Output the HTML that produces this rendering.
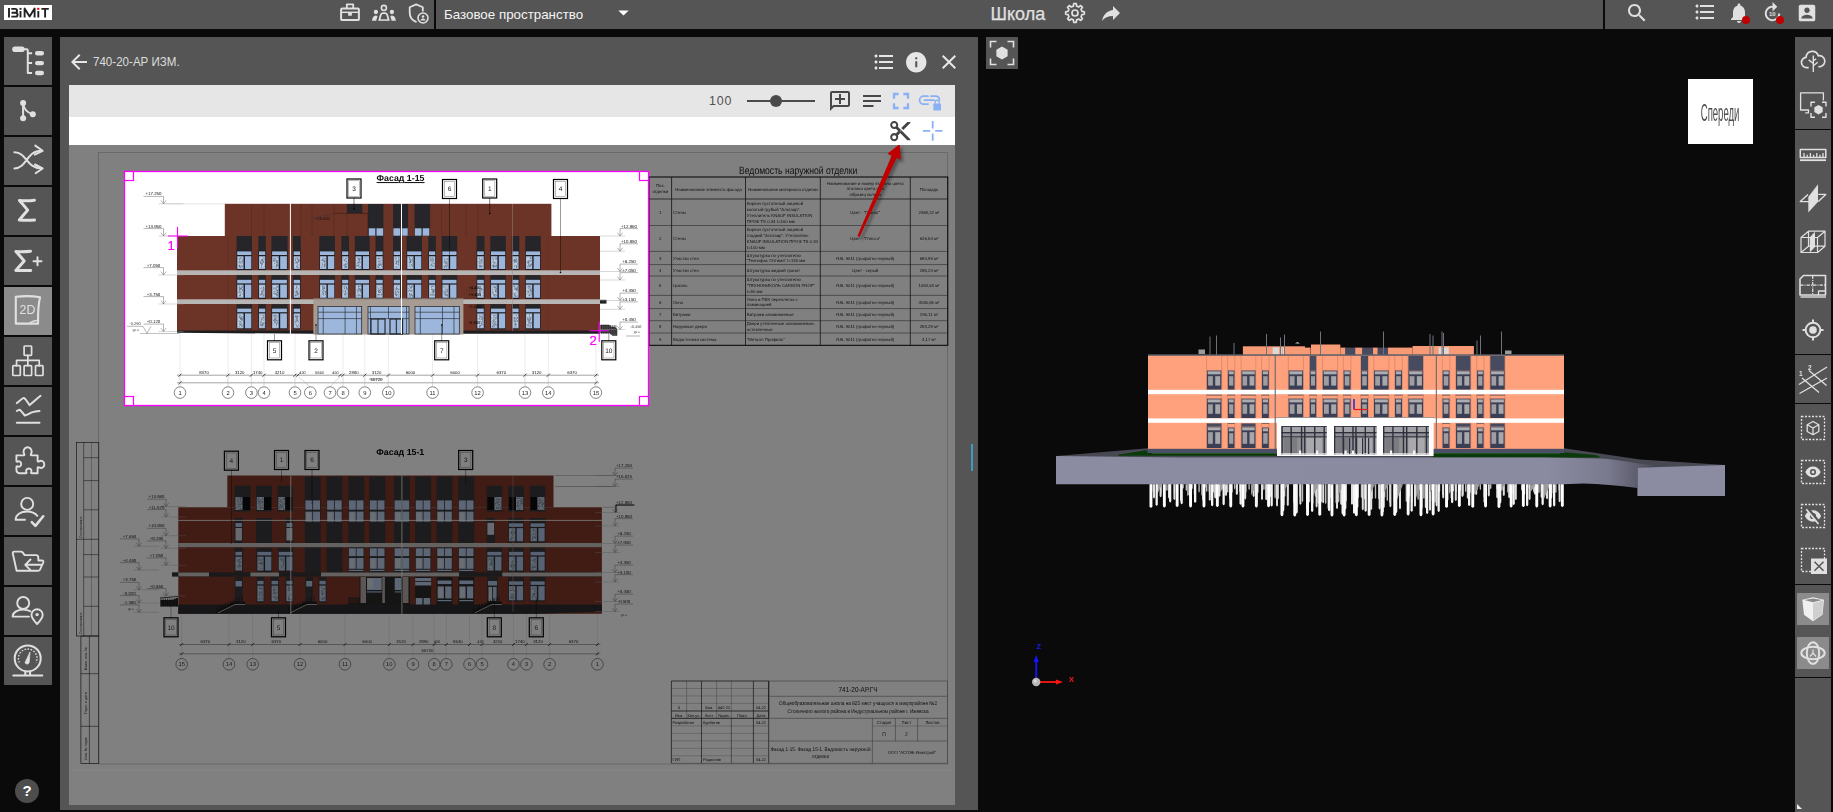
<!DOCTYPE html><html><head><meta charset="utf-8"><title>BIMIT</title><style>
*{box-sizing:border-box;margin:0;padding:0}
html,body{width:1833px;height:812px;overflow:hidden;background:#0a0a0a;font-family:"Liberation Sans",sans-serif;}
.abs{position:absolute}
#root{position:absolute;left:0;top:0;width:1833px;height:812px}
.gs{will-change:transform}
#top{position:absolute;left:0;top:0;width:1833px;height:29px;background:#555555}
.sep{position:absolute;top:0;width:2px;height:29px;background:#0a0a0a}
.lb{position:absolute;left:4px;width:48px;height:48px;background:#555555}
.lb.act{background:#8b8b8b}
.lb svg{position:absolute;left:0;top:0}
#p2d{position:absolute;left:60px;top:37px;width:918px;height:773px;background:#555555}
#inner{position:absolute;left:69px;top:85px;width:886px;height:720px;background:#808080;overflow:hidden}
#tb1{position:absolute;left:0;top:0;width:886px;height:32px;background:#e6e6e6}
#tb2{position:absolute;left:0;top:32px;width:886px;height:28px;background:#ffffff}
#rt{position:absolute;left:1795px;top:37px;width:36px;height:775px;background:#555555}
.rsep{position:absolute;left:0;width:36px;height:2px;background:#0a0a0a}
svg{display:block;overflow:visible}
</style></head><body><div id="root">
<div id="top">
<div class="abs" style="left:4px;top:5px;width:48px;height:15px;background:#fff"></div>
<svg class="abs" style="left:0px;top:0px" width="60" height="29" viewBox="0 0 60 29" ><g fill="none" stroke="#222" stroke-width="1.900" stroke-linejoin="round"><path d="M9 8V17.400"/><path d="M11.300 8.900h3.800c2.600 0 2.600 3.800 0 3.800h-3.600M11.500 12.700h3.900c2.900 0 2.900 3.900 0 3.900h-4.100"/><path d="M20.500 11V17.400M24.600 17.400V8.500l5 8 5-8v8.900M38.300 11V17.400M41.400 8.900h7.400M45.100 8.900v8.500"/></g><rect x="19.500" y="7.900" width="2" height="1.900" fill="#222"/><rect x="37.200" y="7.800" width="2.100" height="2.100" fill="#ff0000"/></svg>
<div class="sep" style="left:434px"></div><div class="sep" style="left:1603px"></div>
<svg class="abs" style="left:339px;top:2px" width="22" height="22" viewBox="0 0 22 22" ><g fill="none" stroke="#e0e0e0" stroke-width="2" stroke-linejoin="round"><rect x="2.100" y="6.500" width="17.800" height="11.600" rx="1.200"/><path d="M7.800 6.500V2.400h6.400v4.100" stroke-width="1.800"/><path d="M2 10.300h18" stroke-width="1.500"/></g><rect x="9.100" y="10.500" width="3.800" height="3.300" rx=".6" fill="#e0e0e0"/></svg>
<svg class="abs" style="left:371px;top:4px" width="26" height="18" viewBox="0 0 26 18" ><g fill="#e0e0e0"><circle cx="12.900" cy="3.900" r="2.500" fill="none" stroke="#e0e0e0" stroke-width="1.600"/><path d="M7.200 16.800l1.700-6c.5-1.700 1.500-2.600 3.200-2.600h1.800c1.700 0 2.700.9 3.200 2.600l1.700 6h-1.900l-1.500-5.500c-.3-1-.8-1.400-1.700-1.400h-1.400c-.9 0-1.400.4-1.700 1.400l-1.500 5.500z"/><circle cx="4.900" cy="8" r="2.150"/><circle cx="20.900" cy="8" r="2.150"/><path d="M1 16.800c.2-3.300 1.500-5.400 3.800-5.400 .7 0 1.300.2 1.700.5l-1.300 4.900z"/><path d="M24.800 16.800c-.2-3.300-1.500-5.400-3.800-5.400-.7 0-1.300.2-1.700.5l1.300 4.900z"/><path d="M8.500 15.300h8.800v1.500h-8.800z"/></g></svg>
<svg class="abs" style="left:408px;top:3px" width="23" height="22" viewBox="0 0 23 22" ><path d="M8.200 1.400L1.700 4.300v5.300c0 4.200 2.600 7.800 6.300 9.200" fill="none" stroke="#e0e0e0" stroke-width="1.800" stroke-linejoin="round" stroke-linecap="round"/><path d="M8.200 1.400l6.600 2.900v4.100" fill="none" stroke="#e0e0e0" stroke-width="1.800" stroke-linejoin="round"/><circle cx="15" cy="15" r="5" fill="none" stroke="#e0e0e0" stroke-width="1.600"/><circle cx="15" cy="13.500" r="1.300" fill="#e0e0e0"/><path d="M12.500 17.400c.3-1.300 1.200-1.900 2.500-1.900s2.200.6 2.500 1.900z" fill="#e0e0e0"/></svg>
<div class="abs" style="left:444px;top:0;height:29px;line-height:30.200px;font-size:13.350px;color:#f4f4f4;white-space:nowrap" id="tsp">Базовое пространство</div>
<svg class="abs" style="left:611.4px;top:-0.3px" width="25" height="25" viewBox="0 0 24 24" ><path d="M7 10l5 5 5-5z" fill="#fff"/></svg>
<div class="abs" style="left:990.500px;top:0;height:28.200px;line-height:28.200px;font-size:18px;color:#e0e0e0;-webkit-text-stroke:.25px #e0e0e0;white-space:nowrap" id="tsch">Школа</div>
<svg class="abs" style="left:1063px;top:1px" width="24" height="24" viewBox="0 0 24 24" ><path d="M10.34 5.10 L10.75 2.68 L13.25 2.68 L13.66 5.10 L15.71 5.95 L17.70 4.53 L19.47 6.30 L18.05 8.29 L18.90 10.34 L21.32 10.75 L21.32 13.25 L18.90 13.66 L18.05 15.71 L19.47 17.70 L17.70 19.47 L15.71 18.05 L13.66 18.90 L13.25 21.32 L10.75 21.32 L10.34 18.90 L8.29 18.05 L6.30 19.47 L4.53 17.70 L5.95 15.71 L5.10 13.66 L2.68 13.25 L2.68 10.75 L5.10 10.34 L5.95 8.29 L4.53 6.30 L6.30 4.53 L8.29 5.95Z" fill="none" stroke="#e0e0e0" stroke-width="1.7" stroke-linejoin="round"/><circle cx="12" cy="12" r="3" fill="none" stroke="#e0e0e0" stroke-width="1.7"/></svg>
<svg class="abs" style="left:1099px;top:1px" width="24" height="24" viewBox="0 0 24 24" ><path d="M10 9V5l-7 7 7 7v-4.1c5 0 8.5 1.6 11 5.1-1-5-4-10-11-11z" fill="#e0e0e0" transform="translate(24,0) scale(-1,1)"/></svg>
<svg class="abs" style="left:1625px;top:1px" width="24" height="24" viewBox="0 0 24 24" ><path d="M15.5 14h-.79l-.28-.27C15.41 12.59 16 11.11 16 9.5 16 5.91 13.09 3 9.5 3S3 5.91 3 9.5 5.91 16 9.5 16c1.61 0 3.09-.59 4.23-1.57l.27.28v.79l5 4.99L20.49 19l-4.99-5zm-6 0C7.01 14 5 11.99 5 9.5S7.01 5 9.5 5 14 7.01 14 9.5 11.99 14 9.5 14z" fill="#e0e0e0"/></svg>
<svg class="abs" style="left:1693px;top:0px" width="24" height="24" viewBox="0 0 24 24" ><path d="M4 10.5c-.83 0-1.5.67-1.5 1.5s.67 1.5 1.5 1.5 1.5-.67 1.5-1.5-.67-1.5-1.5-1.5zm0-6c-.83 0-1.5.67-1.5 1.5S3.17 7.5 4 7.5 5.5 6.83 5.5 6 4.83 4.5 4 4.5zm0 12c-.83 0-1.5.68-1.5 1.5s.68 1.5 1.5 1.5 1.5-.68 1.5-1.5-.67-1.5-1.5-1.5zM7 19h14v-2H7v2zm0-6h14v-2H7v2zm0-8v2h14V5H7z" fill="#e0e0e0"/></svg>
<svg class="abs" style="left:1727px;top:1px" width="24" height="24" viewBox="0 0 24 24" ><path d="M12 22c1.1 0 2-.9 2-2h-4c0 1.1.89 2 2 2zm6-6v-5c0-3.07-1.64-5.64-4.5-6.32V4c0-.83-.67-1.5-1.5-1.5s-1.5.67-1.5 1.5v.68C7.63 5.36 6 7.92 6 11v5l-2 2v1h16v-1l-2-2z" fill="#e0e0e0"/></svg>
<div class="abs" style="left:1742px;top:16px;width:8px;height:8px;border-radius:4px;background:#c00000"></div>
<svg class="abs" style="left:1761.2px;top:1.4px" width="23" height="23" viewBox="0 0 24 24" ><path d="M18 13c0 3.310-2.690 6-6 6s-6-2.690-6-6 2.690-6 6-6v4l5-5-5-5v4c-4.420 0-8 3.580-8 8 0 4.420 3.580 8 8 8s8-3.580 8-8h-2z" fill="#e0e0e0"/><text x="8.300" y="15.800" font-size="6.200" fill="#e0e0e0" font-family="Liberation Sans" font-weight="bold">10</text></svg>
<div class="abs" style="left:1776px;top:16px;width:8px;height:8px;border-radius:4px;background:#c00000"></div>
<svg class="abs" style="left:1796px;top:2px" width="22" height="22" viewBox="0 0 24 24" ><path d="M3 5v14c0 1.1.89 2 2 2h14c1.1 0 2-.9 2-2V5c0-1.1-.9-2-2-2H5c-1.11 0-2 .9-2 2zm12 4c0 1.66-1.34 3-3 3s-3-1.34-3-3 1.34-3 3-3 3 1.34 3 3zm-9 8c0-2 4-3.1 6-3.1s6 1.1 6 3.1v1H6v-1z" fill="#e0e0e0"/></svg>
</div>
<div class="lb" style="top:37px"><svg class="gs" width="48" height="48" viewBox="0 0 48 48"><g fill="none" stroke="#e0e0e0" stroke-width="2" stroke-linecap="round" stroke-linejoin="round"><rect x="8.2" y="9.400" width="12.5" height="5.600" rx="2.800" fill="#e0e0e0" stroke="none"/><path d="M20 12.2h2.600q1.200 0 1.200 1.200V36h4.300M23.800 16.300h4.300M23.800 26.100h4.300" stroke-linecap="butt"/><rect x="31" y="14.100" width="9" height="4.400" rx="2.200" fill="#e0e0e0" stroke="none"/><rect x="31" y="23.900" width="9" height="4.400" rx="2.200" fill="#e0e0e0" stroke="none"/><rect x="31" y="33.800" width="9" height="4.400" rx="2.200" fill="#e0e0e0" stroke="none"/></g></svg></div>
<div class="lb" style="top:87px"><svg class="gs" width="48" height="48" viewBox="0 0 48 48"><g fill="none" stroke="#e0e0e0" stroke-width="2" stroke-linecap="round" stroke-linejoin="round"><circle cx="19.100" cy="16" r="3" fill="#e0e0e0" stroke="none"/><circle cx="19.100" cy="31.200" r="3" fill="#e0e0e0" stroke="none"/><circle cx="28.800" cy="27.300" r="3" fill="#e0e0e0" stroke="none"/><path d="M19.100 16V31.200M19.100 16c.6 5.500 3.500 9.500 9.700 11.300"/></g></svg></div>
<div class="lb" style="top:137px"><svg class="gs" width="48" height="48" viewBox="0 0 48 48"><g fill="none" stroke="#e0e0e0" stroke-width="2" stroke-linecap="round" stroke-linejoin="round"><path d="M10.400 15.300c13 .3 11.500 16 27 16M10.400 31.400c13-.3 11.500-17.600 27-17.600"/><path d="M31.300 8.600l7.300 5.200-7.800 3.800M31 27.500l7.600 4-7 4.800"/></g></svg></div>
<div class="lb" style="top:187px"><svg class="gs" width="48" height="48" viewBox="0 0 48 48"><g fill="none" stroke="#e0e0e0" stroke-width="3" stroke-linecap="round" stroke-linejoin="round"><path d="M30.400 13.200c-5 .7-10 .7-15 .3 2.800 3 5.500 6.200 8.300 9.600-2.800 3.300-5.600 6.600-8.400 9.900 5 .3 10 .3 15.200 0"/></g></svg></div>
<div class="lb" style="top:237px"><svg class="gs" width="48" height="48" viewBox="0 0 48 48"><g fill="none" stroke="#e0e0e0" stroke-width="3" stroke-linecap="round" stroke-linejoin="round"><path d="M26.500 14.300c-5 .6-9.800.6-14.600.3 2.800 3 5.500 6 8.300 9.400-2.800 3.200-5.600 6.300-8.400 9.400 5 .3 9.800.3 14.900 0"/><path d="M29.500 24.200h8M33.500 20.200v8" stroke-width="2"/></g></svg></div>
<div class="lb act" style="top:287px"><svg class="gs" width="48" height="48" viewBox="0 0 48 48"><g fill="none" stroke="#e0e0e0" stroke-width="2.1" stroke-linecap="round" stroke-linejoin="round"><path d="M11.800 9.800c8-.9 16.500-.9 24.300.5-2 7.500-2.300 14.500-2 26.300H11.800z"/><path d="M33.800 33.400c-4 .2-6.500 1-8.300 3.200" stroke-width="1.500"/><text x="15.600" y="27.300" font-size="12.400" font-family="Liberation Sans" fill="#e0e0e0" stroke="none">2D</text></g></svg></div>
<div class="lb" style="top:337px"><svg class="gs" width="48" height="48" viewBox="0 0 48 48"><g fill="none" stroke="#e0e0e0" stroke-width="1.7" stroke-linecap="round" stroke-linejoin="round"><rect x="20.100" y="9" width="7.500" height="9.400" rx=".8"/><rect x="8.800" y="28.700" width="7.500" height="9.800" rx=".8"/><rect x="20.100" y="28.700" width="7.500" height="9.800" rx=".8"/><rect x="31.500" y="28.700" width="7.500" height="9.800" rx=".8"/><path d="M23.850 18.400v10.300M12.550 28.700v-5.300h22.700v5.300"/></g></svg></div>
<div class="lb" style="top:387px"><svg class="gs" width="48" height="48" viewBox="0 0 48 48"><g fill="none" stroke="#e0e0e0" stroke-width="2" stroke-linecap="round" stroke-linejoin="round"><path d="M12.800 16.100c3-2.500 5-4.600 7-5.200 1.800.8 3.800 4.600 5.800 7.200 4-3.300 7.200-6.300 10.900-9.300M12.800 24c1-.8 2-1.300 3-1.300 1.700 1.500 3.200 4 5 5.800 2.500-.8 4.500-2 7-3.100 2.500-.8 5-1.200 7.700-1.400M12.800 35.800h22.700"/></g></svg></div>
<div class="lb" style="top:437px"><svg class="gs" width="48" height="48" viewBox="0 0 48 48"><g fill="none" stroke="#e0e0e0" stroke-width="1.9" stroke-linecap="round" stroke-linejoin="round"><path d="M12.400 18.400h7.300c.8-.1 1-.6.5-1.400-1.800-3 .2-6.800 3.400-6.800s5.200 3.800 3.400 6.800c-.5.800-.3 1.300.5 1.400h6.100v5.500c.1.800.6 1 1.400.5 2.600-1.500 5.300.2 5.300 3s-2.700 4.500-5.300 3c-.8-.5-1.300-.3-1.400.5v5.400h-5.800c-.8-.1-1-.6-.6-1.300.9-1.700-.4-3.500-2.400-3.500s-3.300 1.800-2.400 3.500c.4.700.2 1.200-.6 1.300h-5.600c-2.300 0-3.800-1.500-3.800-3.800v-2.500c.1-.8.600-1 1.300-.6 1.700.9 3.500-.4 3.500-2.400s-1.800-3.300-3.500-2.400c-.7.400-1.200.2-1.300-.6z"/></g></svg></div>
<div class="lb" style="top:487px"><svg class="gs" width="48" height="48" viewBox="0 0 48 48"><g fill="none" stroke="#e0e0e0" stroke-width="1.9" stroke-linecap="round" stroke-linejoin="round"><circle cx="23.200" cy="16.900" r="6"/><path d="M21 32.800h-9.400c0-5 5-8.300 11.600-8.300 4.300 0 7.800 1.600 10.200 4.300"/><path d="M27.800 35.100l3.600 3.800 7.800-9.600" stroke-width="2.600"/></g></svg></div>
<div class="lb" style="top:537px"><svg class="gs" width="48" height="48" viewBox="0 0 48 48"><g fill="none" stroke="#e0e0e0" stroke-width="1.9" stroke-linecap="round" stroke-linejoin="round"><path d="M12.600 33.700L8.800 16.500c-.3-1.200.3-1.900 1.500-1.900h6.500c1 0 1.500.3 2 1l1.800 2.500h11.700c1.200 0 1.800.6 1.900 1.800l.2 3.600h3.500c1.300 0 1.800.9 1.300 2.100l-3.200 7c-.5.900-1 1.100-2 1.100z"/><path d="M37 27.800H21.500M26.500 22.500l-5.300 5.300 5.300 5.300"/></g></svg></div>
<div class="lb" style="top:587px"><svg class="gs" width="48" height="48" viewBox="0 0 48 48"><g fill="none" stroke="#e0e0e0" stroke-width="1.9" stroke-linecap="round" stroke-linejoin="round"><circle cx="19.200" cy="16" r="6"/><path d="M25 29.600H8.600c0-4 4.500-7 10.600-7 2.800 0 5.300.6 7.200 1.700"/><path d="M33.100 37c-3.600-3.600-5.600-6.400-5.600-9.200a5.600 5.600 0 0 1 11.200 0c0 2.800-2 5.600-5.600 9.200z"/><circle cx="33.100" cy="27.600" r="1.700" fill="#e0e0e0" stroke="none"/></g></svg></div>
<div class="lb" style="top:637px"><svg class="gs" width="48" height="48" viewBox="0 0 48 48"><g fill="none" stroke="#e0e0e0" stroke-width="2" stroke-linecap="round" stroke-linejoin="round"><circle cx="23.700" cy="21.400" r="13"/><path d="M15.400 25.500a9.300 9.300 0 1 1 16.600 0" stroke-width="1.300" stroke-dasharray="1.600 1.500" stroke-linecap="butt"/><path d="M25.800 15.400l-4.800 10.400c1 1.600 3.200 1.800 4 .2z" fill="#e0e0e0" stroke-width=".8"/><path d="M21.300 34.600v3.600M26.100 34.600v3.600M9.300 38.400h29" stroke-width="2"/></g></svg></div>
<div class="abs" style="left:15px;top:779px;width:24px;height:24px;border-radius:12px;background:#4d4d4d;color:#fff;font-weight:bold;font-size:15px;line-height:24px;text-align:center">?</div>
<div id="p2d"></div>
<svg class="abs" style="left:67px;top:50px" width="24" height="24" viewBox="0 0 24 24" ><path d="M20 11H7.83l5.59-5.59L12 4l-8 8 8 8 1.41-1.41L7.83 13H20v-2z" fill="#e6e6e6"/></svg>
<div class="abs" id="ttl" style="left:93px;top:52px;height:20px;line-height:20px;font-size:12.600px;color:#dddddd;white-space:nowrap;transform:scaleX(.919);transform-origin:0 0">740-20-АР ИЗМ.</div>
<svg class="abs" style="left:872px;top:50px" width="24" height="24" viewBox="0 0 24 24" ><path d="M4 10.5c-.83 0-1.5.67-1.5 1.5s.67 1.5 1.5 1.5 1.5-.67 1.5-1.5-.67-1.5-1.5-1.5zm0-6c-.83 0-1.5.67-1.5 1.5S3.17 7.5 4 7.5 5.5 6.83 5.5 6 4.83 4.5 4 4.5zm0 12c-.83 0-1.5.68-1.5 1.5s.68 1.5 1.5 1.5 1.5-.68 1.5-1.5-.67-1.5-1.5-1.5zM7 19h14v-2H7v2zm0-6h14v-2H7v2zm0-8v2h14V5H7z" fill="#e6e6e6"/></svg>
<svg class="abs" style="left:904px;top:50px" width="24.5" height="24.5" viewBox="0 0 24 24" ><path d="M12 2C6.48 2 2 6.48 2 12s4.48 10 10 10 10-4.48 10-10S17.52 2 12 2zm1 15h-2v-6h2v6zm0-8h-2V7h2v2z" fill="#e6e6e6"/></svg>
<svg class="abs" style="left:937px;top:50px" width="24" height="24" viewBox="0 0 24 24" ><path d="M19 6.41L17.59 5 12 10.59 6.41 5 5 6.41 10.59 12 5 17.59 6.41 19 12 13.41 17.59 19 19 17.59 13.41 12z" fill="#e6e6e6"/></svg>
<div id="inner"><svg class="abs gs" style="left:-69px;top:-85px" width="1024" height="812" viewBox="0 0 1024 812" text-rendering="geometricPrecision"><defs><clipPath id="selclip"><rect x="124.500" y="171.500" width="524" height="234"/></clipPath><filter id="blur" x="-20%" y="-20%" width="140%" height="140%"><feGaussianBlur stdDeviation="1.500"/></filter></defs><rect x="98.500" y="152.500" width="849" height="611.500" fill="none" stroke="#696969" stroke-width="1"/><rect x="69" y="769.700" width="886" height="1" fill="#878787"/><rect x="76.600" y="442.600" width="22.200" height="193.400" fill="none" stroke="#0f0f0f" stroke-width=".65"/><path d="M83.70 442.60L83.70 636.00" stroke="#0f0f0f" stroke-width="0.5" fill="none" /><path d="M91.50 442.60L91.50 636.00" stroke="#2c2c2c" stroke-width="0.35" fill="none" /><path d="M83.70 457.70L98.80 457.70" stroke="#1a1a1a" stroke-width="0.55" fill="none" /><path d="M83.70 480.60L98.80 480.60" stroke="#1a1a1a" stroke-width="0.55" fill="none" /><path d="M83.70 509.80L98.80 509.80" stroke="#1a1a1a" stroke-width="0.55" fill="none" /><path d="M83.70 554.60L98.80 554.60" stroke="#1a1a1a" stroke-width="0.55" fill="none" /><path d="M83.70 577.00L98.80 577.00" stroke="#1a1a1a" stroke-width="0.55" fill="none" /><path d="M83.70 606.30L98.80 606.30" stroke="#1a1a1a" stroke-width="0.55" fill="none" /><path d="M76.60 539.30L98.80 539.30" stroke="#0f0f0f" stroke-width="0.55" fill="none" /><text transform="translate(81.800,538) rotate(-90)" font-size="3.600" fill="#0f0f0f" font-family="Liberation Sans">Согласовано</text><text transform="translate(81.800,634) rotate(-90)" font-size="3.600" fill="#0f0f0f" font-family="Liberation Sans">Согласовано</text><rect x="80.900" y="636" width="17.900" height="127.500" fill="none" stroke="#0f0f0f" stroke-width=".65"/><path d="M89.40 636.00L89.40 763.50" stroke="#0f0f0f" stroke-width="0.55" fill="none" /><path d="M80.90 673.70L98.80 673.70" stroke="#0f0f0f" stroke-width="0.55" fill="none" /><path d="M80.90 726.30L98.80 726.30" stroke="#0f0f0f" stroke-width="0.55" fill="none" /><text transform="translate(86.800,670) rotate(-90)" font-size="3.700" fill="#0f0f0f" font-family="Liberation Sans">Взам. инв. №</text><text transform="translate(86.800,714) rotate(-90)" font-size="3.700" fill="#0f0f0f" font-family="Liberation Sans">Подп. и дата</text><text transform="translate(86.800,760) rotate(-90)" font-size="3.700" fill="#0f0f0f" font-family="Liberation Sans">Инв. № подл.</text><path d="M181.70 614.00L181.70 658.50" stroke="#5f5f5f" stroke-width="0.3" fill="none" /><path d="M229.00 614.00L229.00 658.50" stroke="#5f5f5f" stroke-width="0.3" fill="none" /><path d="M252.70 614.00L252.70 658.50" stroke="#5f5f5f" stroke-width="0.3" fill="none" /><path d="M300.00 614.00L300.00 658.50" stroke="#5f5f5f" stroke-width="0.3" fill="none" /><path d="M345.00 614.00L345.00 658.50" stroke="#5f5f5f" stroke-width="0.3" fill="none" /><path d="M389.30 614.00L389.30 658.50" stroke="#5f5f5f" stroke-width="0.3" fill="none" /><path d="M413.00 614.00L413.00 658.50" stroke="#5f5f5f" stroke-width="0.3" fill="none" /><path d="M434.20 614.00L434.20 658.50" stroke="#5f5f5f" stroke-width="0.3" fill="none" /><path d="M446.30 614.00L446.30 658.50" stroke="#5f5f5f" stroke-width="0.3" fill="none" /><path d="M469.50 614.00L469.50 658.50" stroke="#5f5f5f" stroke-width="0.3" fill="none" /><path d="M482.00 614.00L482.00 658.50" stroke="#5f5f5f" stroke-width="0.3" fill="none" /><path d="M513.40 614.00L513.40 658.50" stroke="#5f5f5f" stroke-width="0.3" fill="none" /><path d="M526.40 614.00L526.40 658.50" stroke="#5f5f5f" stroke-width="0.3" fill="none" /><path d="M549.60 614.00L549.60 658.50" stroke="#5f5f5f" stroke-width="0.3" fill="none" /><path d="M597.40 614.00L597.40 658.50" stroke="#5f5f5f" stroke-width="0.3" fill="none" /><rect x="227.30" y="475.50" width="326.20" height="32.00" fill="#401c14" /><rect x="178.30" y="507.30" width="423.60" height="106.50" fill="#401c14" /><rect x="304.80" y="476.50" width="15.90" height="96.00" fill="#1c1c1e" /><rect x="326.50" y="476.50" width="15.90" height="96.00" fill="#1c1c1e" /><rect x="348.30" y="476.50" width="15.90" height="96.00" fill="#1c1c1e" /><rect x="369.30" y="476.50" width="15.90" height="96.00" fill="#1c1c1e" /><rect x="394.00" y="476.50" width="15.90" height="96.00" fill="#1c1c1e" /><rect x="415.20" y="476.50" width="15.90" height="96.00" fill="#1c1c1e" /><rect x="436.60" y="476.50" width="15.90" height="96.00" fill="#1c1c1e" /><rect x="458.30" y="476.50" width="15.90" height="96.00" fill="#1c1c1e" /><rect x="347.70" y="577.00" width="127.00" height="28.00" fill="#151516" /><rect x="305.40" y="500.40" width="6.90" height="9.30" fill="#5c6675" /><rect x="305.40" y="511.60" width="6.90" height="10.10" fill="#5c6675" /><rect x="313.10" y="500.40" width="6.90" height="9.30" fill="#5c6675" /><rect x="313.10" y="511.60" width="6.90" height="10.10" fill="#5c6675" /><rect x="306.20" y="512.60" width="4.60" height="8.00" fill="#6a6e73" /><rect x="327.10" y="500.40" width="6.90" height="9.30" fill="#5c6675" /><rect x="327.10" y="511.60" width="6.90" height="10.10" fill="#5c6675" /><rect x="334.80" y="500.40" width="6.90" height="9.30" fill="#5c6675" /><rect x="334.80" y="511.60" width="6.90" height="10.10" fill="#5c6675" /><rect x="327.90" y="512.60" width="4.60" height="8.00" fill="#6a6e73" /><rect x="348.90" y="500.40" width="6.90" height="9.30" fill="#5c6675" /><rect x="348.90" y="511.60" width="6.90" height="10.10" fill="#5c6675" /><rect x="356.60" y="500.40" width="6.90" height="9.30" fill="#5c6675" /><rect x="356.60" y="511.60" width="6.90" height="10.10" fill="#5c6675" /><rect x="349.70" y="512.60" width="4.60" height="8.00" fill="#6a6e73" /><rect x="369.90" y="500.40" width="6.90" height="9.30" fill="#5c6675" /><rect x="369.90" y="511.60" width="6.90" height="10.10" fill="#5c6675" /><rect x="377.60" y="500.40" width="6.90" height="9.30" fill="#5c6675" /><rect x="377.60" y="511.60" width="6.90" height="10.10" fill="#5c6675" /><rect x="370.70" y="512.60" width="4.60" height="8.00" fill="#6a6e73" /><rect x="394.60" y="500.40" width="6.90" height="9.30" fill="#5c6675" /><rect x="394.60" y="511.60" width="6.90" height="10.10" fill="#5c6675" /><rect x="402.30" y="500.40" width="6.90" height="9.30" fill="#5c6675" /><rect x="402.30" y="511.60" width="6.90" height="10.10" fill="#5c6675" /><rect x="395.40" y="512.60" width="4.60" height="8.00" fill="#6a6e73" /><rect x="415.80" y="500.40" width="6.90" height="9.30" fill="#5c6675" /><rect x="415.80" y="511.60" width="6.90" height="10.10" fill="#5c6675" /><rect x="423.50" y="500.40" width="6.90" height="9.30" fill="#5c6675" /><rect x="423.50" y="511.60" width="6.90" height="10.10" fill="#5c6675" /><rect x="416.60" y="512.60" width="4.60" height="8.00" fill="#6a6e73" /><rect x="437.20" y="500.40" width="6.90" height="9.30" fill="#5c6675" /><rect x="437.20" y="511.60" width="6.90" height="10.10" fill="#5c6675" /><rect x="444.90" y="500.40" width="6.90" height="9.30" fill="#5c6675" /><rect x="444.90" y="511.60" width="6.90" height="10.10" fill="#5c6675" /><rect x="438.00" y="512.60" width="4.60" height="8.00" fill="#6a6e73" /><rect x="458.90" y="500.40" width="6.90" height="9.30" fill="#5c6675" /><rect x="458.90" y="511.60" width="6.90" height="10.10" fill="#5c6675" /><rect x="466.60" y="500.40" width="6.90" height="9.30" fill="#5c6675" /><rect x="466.60" y="511.60" width="6.90" height="10.10" fill="#5c6675" /><rect x="459.70" y="512.60" width="4.60" height="8.00" fill="#6a6e73" /><rect x="348.90" y="548.30" width="6.90" height="7.80" fill="#5c6675" /><rect x="348.90" y="558.00" width="6.90" height="10.80" fill="#5c6675" /><rect x="356.60" y="548.30" width="6.90" height="7.80" fill="#5c6675" /><rect x="356.60" y="558.00" width="6.90" height="10.80" fill="#5c6675" /><rect x="349.70" y="559.00" width="4.60" height="8.80" fill="#6a6e73" /><rect x="348.90" y="569.80" width="14.60" height="1.20" fill="#5c6675" /><rect x="369.90" y="548.30" width="6.90" height="7.80" fill="#5c6675" /><rect x="369.90" y="558.00" width="6.90" height="10.80" fill="#5c6675" /><rect x="377.60" y="548.30" width="6.90" height="7.80" fill="#5c6675" /><rect x="377.60" y="558.00" width="6.90" height="10.80" fill="#5c6675" /><rect x="370.70" y="559.00" width="4.60" height="8.80" fill="#6a6e73" /><rect x="369.90" y="569.80" width="14.60" height="1.20" fill="#5c6675" /><rect x="394.60" y="548.30" width="6.90" height="7.80" fill="#5c6675" /><rect x="394.60" y="558.00" width="6.90" height="10.80" fill="#5c6675" /><rect x="402.30" y="548.30" width="6.90" height="7.80" fill="#5c6675" /><rect x="402.30" y="558.00" width="6.90" height="10.80" fill="#5c6675" /><rect x="395.40" y="559.00" width="4.60" height="8.80" fill="#6a6e73" /><rect x="394.60" y="569.80" width="14.60" height="1.20" fill="#5c6675" /><rect x="415.80" y="548.30" width="6.90" height="7.80" fill="#5c6675" /><rect x="415.80" y="558.00" width="6.90" height="10.80" fill="#5c6675" /><rect x="423.50" y="548.30" width="6.90" height="7.80" fill="#5c6675" /><rect x="423.50" y="558.00" width="6.90" height="10.80" fill="#5c6675" /><rect x="416.60" y="559.00" width="4.60" height="8.80" fill="#6a6e73" /><rect x="415.80" y="569.80" width="14.60" height="1.20" fill="#5c6675" /><rect x="437.20" y="548.30" width="6.90" height="7.80" fill="#5c6675" /><rect x="437.20" y="558.00" width="6.90" height="10.80" fill="#5c6675" /><rect x="444.90" y="548.30" width="6.90" height="7.80" fill="#5c6675" /><rect x="444.90" y="558.00" width="6.90" height="10.80" fill="#5c6675" /><rect x="438.00" y="559.00" width="4.60" height="8.80" fill="#6a6e73" /><rect x="437.20" y="569.80" width="14.60" height="1.20" fill="#5c6675" /><rect x="458.90" y="548.30" width="6.90" height="7.80" fill="#5c6675" /><rect x="458.90" y="558.00" width="6.90" height="10.80" fill="#5c6675" /><rect x="466.60" y="548.30" width="6.90" height="7.80" fill="#5c6675" /><rect x="466.60" y="558.00" width="6.90" height="10.80" fill="#5c6675" /><rect x="459.70" y="559.00" width="4.60" height="8.80" fill="#6a6e73" /><rect x="458.90" y="569.80" width="14.60" height="1.20" fill="#5c6675" /><rect x="342.40" y="577.00" width="5.90" height="28.00" fill="#401c14" /><rect x="409.90" y="577.00" width="5.30" height="28.00" fill="#401c14" /><rect x="431.10" y="577.00" width="5.50" height="28.00" fill="#401c14" /><rect x="452.50" y="577.00" width="5.80" height="28.00" fill="#401c14" /><rect x="474.20" y="577.00" width="5.50" height="28.00" fill="#401c14" /><rect x="347.70" y="577.00" width="11.90" height="20.50" fill="#401c14" /><rect x="348.50" y="598.50" width="10.50" height="4.50" fill="#271612" /><rect x="360.50" y="577.00" width="5.50" height="26.00" fill="#5b5653" /><rect x="382.30" y="577.00" width="2.60" height="26.00" fill="#5b5653" /><rect x="403.00" y="577.00" width="5.50" height="26.00" fill="#5b5653" /><rect x="367.00" y="578.00" width="14.70" height="12.00" fill="#5c6675" /><rect x="367.50" y="578.50" width="5.50" height="10.00" fill="#6a6e73" /><rect x="367.00" y="590.60" width="14.70" height="2.60" fill="#1e1e21" /><rect x="367.00" y="591.40" width="14.70" height="1.00" fill="#5c6675" /><rect x="394.70" y="578.00" width="6.30" height="12.00" fill="#5c6675" /><rect x="394.70" y="591.40" width="6.30" height="1.00" fill="#5c6675" /><rect x="415.20" y="578.00" width="15.90" height="7.50" fill="#5c6675" /><rect x="415.20" y="581.20" width="15.90" height="0.80" fill="#151516" /><rect x="415.80" y="598.00" width="6.60" height="14.00" fill="#5c6675" /><rect x="423.60" y="598.00" width="6.60" height="14.00" fill="#5c6675" /><rect x="437.60" y="580.50" width="13.90" height="3.60" fill="#5c6675" /><rect x="437.60" y="586.40" width="6.30" height="12.00" fill="#5c6675" /><rect x="445.20" y="586.40" width="6.30" height="12.00" fill="#5c6675" /><rect x="438.40" y="587.40" width="4.70" height="10.00" fill="#6a6e73" /><rect x="437.60" y="600.00" width="13.90" height="1.20" fill="#5c6675" /><rect x="459.30" y="580.50" width="13.90" height="3.60" fill="#5c6675" /><rect x="459.30" y="586.40" width="6.30" height="12.00" fill="#5c6675" /><rect x="466.90" y="586.40" width="6.30" height="12.00" fill="#5c6675" /><rect x="460.10" y="587.40" width="4.70" height="10.00" fill="#6a6e73" /><rect x="459.30" y="600.00" width="13.90" height="1.20" fill="#5c6675" /><rect x="234.70" y="485.80" width="16.00" height="25.70" fill="#1c1c1e" /><rect x="235.50" y="497.00" width="7.20" height="13.00" fill="#676c72" /><path d="M237.4 504.0h.7M238.2 504.8h.7M239.9 498.1h.7M235.9 507.7h.7M237.5 500.2h.7M242.4 503.1h.7M241.3 503.2h.7M240.0 499.2h.7M240.0 508.1h.7M239.3 506.5h.7M240.2 498.1h.7M240.8 504.6h.7M237.8 497.7h.7M241.5 503.2h.7M240.5 508.2h.7M240.5 508.7h.7M238.4 507.2h.7M238.7 508.9h.7M241.6 498.5h.7M236.7 500.0h.7M242.2 502.7h.7M239.9 501.0h.7M239.1 502.1h.7M238.1 504.6h.7M239.7 508.5h.7M240.3 508.8h.7M241.5 509.6h.7M240.2 499.3h.7M241.5 509.3h.7M241.8 504.4h.7M240.5 499.9h.7M241.3 504.4h.7M237.7 498.1h.7M241.4 509.6h.7M236.4 507.2h.7M238.5 499.2h.7M237.7 506.8h.7M241.6 497.8h.7M239.9 497.9h.7M240.5 501.4h.7M241.6 509.5h.7M239.1 509.7h.7M237.8 498.3h.7M239.8 497.7h.7M237.1 502.4h.7M239.8 499.2h.7M236.1 508.1h.7M237.9 509.2h.7M241.7 502.0h.7M238.8 503.7h.7M240.0 504.7h.7M239.5 505.0h.7M242.0 503.6h.7M238.6 506.2h.7M237.4 501.0h.7M242.3 503.8h.7M239.4 497.4h.7M238.5 504.5h.7M235.9 504.9h.7M240.0 498.0h.7M239.9 503.1h.7M240.3 501.7h.7M240.5 506.5h.7M235.9 498.1h.7M240.3 509.2h.7M237.5 503.0h.7M239.7 501.3h.7M238.2 501.2h.7M238.2 504.7h.7M237.8 502.0h.7M240.9 497.6h.7M239.6 506.4h.7M237.8 500.1h.7M241.1 500.3h.7" stroke="#323d4a" stroke-width=".7" fill="none"/><rect x="242.70" y="497.00" width="7.20" height="13.00" fill="#060606" /><rect x="256.00" y="485.80" width="16.00" height="25.70" fill="#1c1c1e" /><rect x="256.80" y="497.00" width="7.20" height="13.00" fill="#676c72" /><path d="M258.3 502.7h.7M261.7 498.6h.7M259.2 501.4h.7M262.6 502.7h.7M262.7 499.4h.7M259.3 505.4h.7M262.9 502.9h.7M258.6 498.8h.7M260.6 499.7h.7M262.4 507.7h.7M258.3 500.8h.7M262.4 505.3h.7M262.4 501.6h.7M258.0 500.9h.7M262.3 500.7h.7M259.4 502.5h.7M259.9 502.4h.7M263.2 499.2h.7M257.1 509.0h.7M262.9 509.5h.7M260.0 509.1h.7M263.2 500.1h.7M262.0 507.7h.7M261.5 503.7h.7M259.0 501.5h.7M258.6 498.1h.7M261.0 500.9h.7M262.4 497.9h.7M263.1 505.9h.7M263.2 508.4h.7M263.0 504.5h.7M257.2 506.5h.7M258.2 501.0h.7M261.5 503.8h.7M259.8 508.9h.7M261.1 501.5h.7M258.8 508.0h.7M260.2 507.0h.7M259.4 499.7h.7M260.6 507.4h.7M258.2 507.1h.7M263.2 507.3h.7M262.5 497.4h.7M261.2 508.0h.7M257.4 500.7h.7M258.9 503.8h.7M259.9 503.2h.7M262.2 497.3h.7M257.5 498.9h.7M257.9 498.1h.7M263.5 507.9h.7M257.7 503.5h.7M259.2 501.2h.7M259.4 505.3h.7M261.0 501.8h.7M258.4 501.4h.7M257.9 504.2h.7M261.8 502.0h.7M257.6 499.5h.7M259.6 504.8h.7M262.3 502.0h.7M262.4 505.0h.7M259.9 501.9h.7M260.4 506.0h.7M259.9 505.9h.7M260.1 500.3h.7M260.6 505.9h.7M257.6 502.6h.7M259.9 508.2h.7M263.3 501.9h.7M263.0 507.1h.7M258.8 503.1h.7M257.9 507.4h.7M261.5 508.3h.7" stroke="#323d4a" stroke-width=".7" fill="none"/><rect x="264.00" y="497.00" width="7.20" height="13.00" fill="#060606" /><rect x="277.60" y="485.80" width="15.40" height="25.70" fill="#1c1c1e" /><rect x="278.40" y="497.00" width="6.90" height="13.00" fill="#676c72" /><path d="M283.7 505.6h.7M283.3 504.3h.7M279.3 504.6h.7M278.7 499.1h.7M283.6 497.8h.7M279.3 498.5h.7M284.2 499.5h.7M278.8 507.7h.7M279.5 507.8h.7M282.9 507.7h.7M284.7 504.5h.7M283.7 497.7h.7M283.5 503.6h.7M283.2 498.6h.7M283.4 508.9h.7M279.1 501.3h.7M282.3 507.6h.7M280.2 499.5h.7M280.3 504.9h.7M283.4 502.2h.7M281.0 502.2h.7M280.9 502.5h.7M279.2 503.5h.7M284.8 502.4h.7M283.4 499.3h.7M283.1 506.7h.7M282.9 503.7h.7M281.7 505.3h.7M284.4 499.2h.7M279.3 506.6h.7M284.5 503.7h.7M281.5 506.2h.7M279.9 500.6h.7M280.0 504.6h.7M280.7 500.2h.7M283.1 509.1h.7M280.6 506.0h.7M281.3 507.9h.7M282.4 500.6h.7M280.1 497.6h.7M281.7 502.0h.7M279.8 501.8h.7M280.7 506.9h.7M279.6 509.6h.7M281.7 504.7h.7M281.6 507.6h.7M283.9 504.2h.7M281.7 506.2h.7M284.1 502.3h.7M283.3 509.2h.7M281.6 500.1h.7M280.2 506.2h.7M283.0 509.2h.7M284.1 500.3h.7M279.9 500.5h.7M279.9 506.0h.7M284.1 508.5h.7M280.3 508.0h.7M280.7 502.5h.7M283.3 498.4h.7M279.3 507.6h.7M280.5 501.7h.7M282.4 505.7h.7M278.7 501.5h.7M281.4 503.3h.7M280.0 504.6h.7M284.7 502.1h.7M282.1 498.8h.7M280.4 505.6h.7M279.4 508.3h.7M284.4 498.5h.7" stroke="#323d4a" stroke-width=".7" fill="none"/><rect x="285.30" y="497.00" width="6.90" height="13.00" fill="#060606" /><rect x="234.70" y="518.00" width="8.00" height="25.00" fill="#1c1c1e" /><rect x="235.50" y="523.00" width="6.40" height="4.00" fill="#576272" /><rect x="235.50" y="528.00" width="6.40" height="12.50" fill="#676b70" /><rect x="256.00" y="518.00" width="16.00" height="25.00" fill="#1c1c1e" /><rect x="285.60" y="518.00" width="7.60" height="25.00" fill="#1c1c1e" /><rect x="286.40" y="523.00" width="6.00" height="4.00" fill="#576272" /><rect x="286.40" y="528.00" width="6.00" height="12.50" fill="#676b70" /><rect x="234.70" y="547.50" width="8.00" height="4.00" fill="#1c1c1e" /><rect x="234.70" y="551.00" width="8.00" height="20.80" fill="#17171a" /><rect x="235.40" y="551.80" width="6.60" height="3.60" fill="#576272" /><rect x="235.40" y="556.60" width="6.60" height="14.00" fill="#576272" /><rect x="236.30" y="557.80" width="4.80" height="11.60" fill="#676c72" /><path d="M240.6 562.2h.7M239.8 566.4h.7M237.8 565.5h.7M239.3 567.0h.7M237.7 566.4h.7M240.6 565.5h.7M238.9 559.3h.7M238.7 562.0h.7M239.6 565.6h.7M239.0 560.1h.7M239.3 565.0h.7M237.4 567.9h.7M239.4 559.5h.7M240.5 559.7h.7M238.0 566.0h.7M239.1 564.2h.7M239.3 563.1h.7M237.9 560.0h.7M236.9 566.0h.7M239.8 564.1h.7M239.7 562.1h.7M237.7 562.3h.7M240.3 558.6h.7M238.7 560.8h.7M239.8 562.0h.7M238.0 562.5h.7M238.9 566.6h.7M238.1 567.4h.7M237.1 561.1h.7M237.0 559.3h.7M239.9 566.1h.7M237.4 560.2h.7M238.3 566.3h.7M240.0 566.3h.7M239.1 559.7h.7M238.3 560.2h.7M238.8 564.4h.7M237.4 560.9h.7M239.9 558.4h.7M240.0 567.9h.7M240.6 562.3h.7M238.9 564.5h.7M239.3 568.8h.7M239.5 561.4h.7" stroke="#323d4a" stroke-width=".7" fill="none"/><rect x="256.60" y="547.50" width="15.50" height="4.00" fill="#1c1c1e" /><rect x="256.60" y="551.00" width="15.50" height="20.80" fill="#17171a" /><rect x="257.30" y="551.80" width="14.10" height="3.60" fill="#576272" /><rect x="257.30" y="556.60" width="6.35" height="14.00" fill="#576272" /><rect x="265.05" y="556.60" width="6.35" height="14.00" fill="#576272" /><rect x="258.10" y="557.80" width="4.75" height="11.60" fill="#676c72" /><path d="M262.0 563.4h.7M260.9 566.1h.7M258.4 566.6h.7M261.1 563.5h.7M260.6 563.2h.7M259.2 563.9h.7M258.6 563.6h.7M261.1 563.0h.7M260.7 568.6h.7M262.1 559.6h.7M261.7 565.0h.7M258.6 562.1h.7M259.4 559.0h.7M260.6 568.3h.7M259.7 567.7h.7M261.3 559.6h.7M262.0 564.7h.7M262.2 566.0h.7M261.5 561.9h.7M261.7 568.3h.7M262.0 562.9h.7M261.5 563.4h.7M258.9 558.6h.7M258.7 560.3h.7M259.1 563.6h.7M261.3 564.0h.7M260.2 565.2h.7M259.7 563.2h.7M261.5 562.5h.7M259.1 568.0h.7M261.4 562.1h.7M259.9 563.9h.7M260.9 560.6h.7M258.4 560.4h.7M261.7 559.7h.7M260.3 560.2h.7M259.3 560.0h.7M260.1 560.0h.7M258.5 559.3h.7M259.1 563.5h.7M258.6 558.3h.7M260.3 562.6h.7M261.3 558.7h.7M260.1 562.5h.7" stroke="#323d4a" stroke-width=".7" fill="none"/><rect x="278.00" y="547.50" width="15.20" height="4.00" fill="#1c1c1e" /><rect x="278.00" y="551.00" width="15.20" height="20.80" fill="#17171a" /><rect x="278.70" y="551.80" width="13.80" height="3.60" fill="#576272" /><rect x="278.70" y="556.60" width="6.20" height="14.00" fill="#576272" /><rect x="286.30" y="556.60" width="6.20" height="14.00" fill="#576272" /><rect x="279.50" y="557.80" width="4.60" height="11.60" fill="#676c72" /><path d="M279.9 568.7h.7M280.7 559.1h.7M281.7 559.9h.7M282.3 561.9h.7M280.3 558.7h.7M282.7 561.1h.7M283.0 563.2h.7M283.5 561.4h.7M280.8 561.0h.7M283.1 565.0h.7M281.2 559.1h.7M282.5 568.8h.7M282.2 558.1h.7M279.9 559.1h.7M280.5 558.5h.7M280.0 565.3h.7M283.4 560.3h.7M283.7 563.3h.7M283.0 568.2h.7M283.6 558.5h.7M281.0 564.8h.7M283.6 559.1h.7M281.0 567.4h.7M280.3 562.4h.7M281.1 565.6h.7M283.5 560.0h.7M282.8 566.2h.7M283.1 564.2h.7M283.5 562.1h.7M281.5 560.6h.7M282.9 563.4h.7M280.9 560.0h.7M282.7 564.8h.7M282.6 562.4h.7M281.7 559.8h.7M282.6 558.4h.7M281.7 566.4h.7M282.5 559.2h.7M280.7 567.4h.7M282.4 567.8h.7M283.3 563.0h.7M283.4 566.2h.7" stroke="#323d4a" stroke-width=".7" fill="none"/><rect x="234.70" y="577.00" width="8.00" height="28.00" fill="#1c1c1e" /><rect x="235.50" y="581.00" width="6.40" height="5.50" fill="#576272" /><rect x="256.60" y="577.00" width="7.70" height="3.50" fill="#1c1c1e" /><rect x="256.60" y="580.00" width="7.70" height="22.50" fill="#17171a" /><rect x="257.30" y="580.80" width="6.30" height="3.60" fill="#576272" /><rect x="257.30" y="585.60" width="6.30" height="15.70" fill="#576272" /><rect x="258.20" y="586.80" width="4.50" height="13.30" fill="#676c72" /><path d="M259.8 591.8h.7M258.8 592.2h.7M262.2 588.4h.7M260.7 588.5h.7M258.8 595.3h.7M259.4 587.7h.7M259.1 595.3h.7M260.8 587.2h.7M259.4 599.4h.7M259.4 594.2h.7M260.1 597.0h.7M260.9 597.1h.7M260.6 589.5h.7M259.2 588.1h.7M261.7 588.5h.7M258.6 599.4h.7M259.3 598.4h.7M258.8 593.0h.7M259.4 597.6h.7M260.9 595.3h.7M261.5 598.2h.7M259.8 594.8h.7M260.2 588.5h.7M261.8 594.6h.7M261.7 589.7h.7M260.6 593.0h.7M261.3 588.1h.7M259.8 593.3h.7M258.8 594.1h.7M261.4 592.5h.7M261.0 594.8h.7M259.3 591.6h.7M262.4 591.4h.7M260.2 588.2h.7M259.3 589.2h.7M262.1 596.3h.7M261.9 599.6h.7M260.9 598.9h.7M260.6 592.4h.7M262.2 598.6h.7M262.2 593.2h.7M261.5 592.3h.7M262.4 598.8h.7M259.6 599.0h.7M259.2 588.3h.7M261.3 590.8h.7M260.5 595.2h.7" stroke="#323d4a" stroke-width=".7" fill="none"/><rect x="270.80" y="577.00" width="8.00" height="3.50" fill="#1c1c1e" /><rect x="270.80" y="580.00" width="8.00" height="22.50" fill="#17171a" /><rect x="271.50" y="580.80" width="6.60" height="3.60" fill="#576272" /><rect x="271.50" y="585.60" width="6.60" height="15.70" fill="#576272" /><rect x="272.40" y="586.80" width="4.80" height="13.30" fill="#676c72" /><path d="M272.9 596.6h.7M273.9 592.6h.7M274.1 596.5h.7M275.8 590.7h.7M273.1 590.9h.7M274.4 588.1h.7M273.3 596.8h.7M275.6 599.5h.7M276.8 598.2h.7M274.3 589.1h.7M274.0 593.0h.7M274.9 594.0h.7M274.2 597.9h.7M273.9 593.0h.7M276.4 597.4h.7M273.9 590.2h.7M276.1 587.2h.7M273.3 593.8h.7M275.0 589.2h.7M272.9 589.7h.7M275.9 593.0h.7M276.8 597.1h.7M276.8 587.5h.7M273.5 587.3h.7M274.5 591.4h.7M272.9 594.0h.7M273.1 591.1h.7M273.7 597.3h.7M274.5 590.4h.7M272.9 592.6h.7M275.3 595.7h.7M276.5 597.4h.7M273.7 588.8h.7M275.9 597.1h.7M274.8 597.7h.7M275.0 590.7h.7M273.4 587.3h.7M275.4 598.5h.7M276.5 593.0h.7M275.5 598.9h.7M276.1 594.8h.7M274.4 593.7h.7M273.4 589.4h.7M275.6 599.7h.7M275.0 592.3h.7M274.2 592.9h.7M276.1 592.8h.7M276.7 589.1h.7M274.0 593.7h.7M274.4 597.9h.7M276.2 598.9h.7" stroke="#323d4a" stroke-width=".7" fill="none"/><rect x="285.60" y="577.00" width="7.60" height="3.50" fill="#1c1c1e" /><rect x="285.60" y="580.00" width="7.60" height="22.50" fill="#17171a" /><rect x="286.30" y="580.80" width="6.20" height="3.60" fill="#576272" /><rect x="286.30" y="585.60" width="6.20" height="15.70" fill="#576272" /><rect x="287.20" y="586.80" width="4.40" height="13.30" fill="#676c72" /><path d="M289.8 587.5h.7M289.7 594.1h.7M289.4 590.7h.7M290.2 598.7h.7M287.9 595.6h.7M288.9 593.6h.7M290.9 599.3h.7M289.9 589.6h.7M291.0 589.4h.7M289.0 597.6h.7M288.7 590.5h.7M291.1 599.1h.7M288.7 592.1h.7M288.6 588.8h.7M288.5 599.5h.7M287.8 590.0h.7M288.3 588.1h.7M289.5 596.5h.7M290.7 595.1h.7M290.6 587.2h.7M288.6 599.3h.7M287.8 590.5h.7M289.3 590.5h.7M289.6 587.7h.7M288.4 599.3h.7M288.0 598.6h.7M288.2 599.7h.7M290.1 595.3h.7M288.0 587.8h.7M290.4 589.3h.7M288.2 597.5h.7M290.8 587.7h.7M291.2 593.9h.7M289.0 588.5h.7M289.0 599.6h.7M288.6 588.8h.7M288.1 588.7h.7M288.8 598.7h.7M287.8 589.5h.7M291.1 599.8h.7M291.2 590.2h.7M288.8 599.2h.7M289.3 596.0h.7M288.7 587.4h.7M288.8 596.6h.7M290.5 594.3h.7" stroke="#323d4a" stroke-width=".7" fill="none"/><rect x="305.40" y="577.00" width="7.60" height="28.00" fill="#1c1c1e" /><rect x="306.20" y="581.00" width="6.00" height="5.50" fill="#576272" /><rect x="318.70" y="577.00" width="7.70" height="3.50" fill="#1c1c1e" /><rect x="318.70" y="580.00" width="7.70" height="22.50" fill="#17171a" /><rect x="319.40" y="580.80" width="6.30" height="3.60" fill="#576272" /><rect x="319.40" y="585.60" width="6.30" height="15.70" fill="#576272" /><rect x="320.30" y="586.80" width="4.50" height="13.30" fill="#676c72" /><path d="M322.4 593.9h.7M322.3 593.9h.7M323.8 589.6h.7M322.9 598.9h.7M323.9 589.4h.7M324.4 597.8h.7M321.3 590.5h.7M321.4 587.8h.7M324.4 592.3h.7M324.0 588.6h.7M320.7 598.1h.7M323.7 599.7h.7M323.3 593.8h.7M323.6 588.3h.7M322.7 592.7h.7M321.2 594.7h.7M321.9 593.5h.7M322.1 591.1h.7M322.0 594.7h.7M324.4 599.0h.7M324.0 597.7h.7M321.7 599.5h.7M321.7 588.7h.7M322.6 596.4h.7M321.9 595.3h.7M321.7 599.4h.7M322.4 593.2h.7M322.7 598.2h.7M324.4 593.8h.7M322.3 594.9h.7M320.9 592.5h.7M323.9 597.0h.7M320.8 598.0h.7M322.1 599.6h.7M322.0 589.8h.7M322.7 598.3h.7M322.3 598.1h.7M323.4 591.7h.7M321.8 593.5h.7M322.2 591.8h.7M323.1 598.2h.7M322.9 589.0h.7M321.5 591.8h.7M323.0 588.9h.7M320.9 591.2h.7M321.7 587.5h.7M322.7 598.8h.7" stroke="#323d4a" stroke-width=".7" fill="none"/><rect x="486.60" y="485.80" width="15.70" height="25.80" fill="#1c1c1e" /><rect x="487.40" y="497.00" width="7.05" height="13.00" fill="#060606" /><rect x="494.45" y="497.00" width="7.05" height="13.00" fill="#676c72" /><path d="M498.2 506.4h.7M500.1 507.7h.7M500.6 502.8h.7M499.2 498.8h.7M500.4 502.0h.7M497.8 508.3h.7M496.6 499.7h.7M500.1 504.7h.7M495.3 497.6h.7M497.0 497.4h.7M500.1 499.6h.7M496.5 502.1h.7M498.1 502.7h.7M498.8 505.5h.7M497.6 498.5h.7M501.1 505.9h.7M495.3 502.8h.7M499.6 509.6h.7M495.2 497.4h.7M497.8 502.5h.7M500.5 507.5h.7M496.9 502.5h.7M498.5 508.3h.7M496.1 502.2h.7M495.3 505.3h.7M494.9 508.9h.7M498.1 504.4h.7M495.3 500.2h.7M497.8 507.9h.7M498.2 500.8h.7M501.1 505.5h.7M498.2 499.8h.7M496.7 508.5h.7M495.6 503.9h.7M498.7 501.7h.7M499.7 508.6h.7M500.3 506.5h.7M496.1 498.0h.7M497.5 501.2h.7M496.0 508.1h.7M496.1 507.5h.7M500.8 498.8h.7M500.6 502.2h.7M496.1 499.6h.7M495.0 503.5h.7M497.2 507.9h.7M500.1 498.0h.7M497.3 502.1h.7M495.9 500.4h.7M496.4 505.9h.7M496.9 498.7h.7M496.2 502.8h.7M498.4 500.3h.7M499.3 500.0h.7M499.1 504.9h.7M495.9 506.6h.7M497.3 504.0h.7M498.6 505.1h.7M497.6 498.0h.7M499.8 508.0h.7M497.9 504.5h.7M496.5 508.4h.7M499.2 500.1h.7M500.0 509.5h.7M497.0 509.6h.7M497.9 499.5h.7M499.4 501.5h.7M499.5 504.5h.7M495.4 503.8h.7M500.2 503.2h.7M498.2 508.0h.7M497.6 503.4h.7M498.5 507.5h.7" stroke="#323d4a" stroke-width=".7" fill="none"/><rect x="508.20" y="485.80" width="15.70" height="25.80" fill="#1c1c1e" /><rect x="509.00" y="497.00" width="7.05" height="13.00" fill="#060606" /><rect x="516.05" y="497.00" width="7.05" height="13.00" fill="#676c72" /><path d="M517.7 498.5h.7M521.3 504.2h.7M518.3 508.4h.7M522.1 504.0h.7M522.7 507.7h.7M521.2 500.9h.7M516.4 505.7h.7M521.1 501.6h.7M519.4 504.3h.7M518.0 506.0h.7M520.0 502.1h.7M517.1 504.2h.7M518.4 506.3h.7M517.5 502.2h.7M517.6 502.4h.7M520.1 498.6h.7M516.7 503.3h.7M517.6 503.6h.7M517.4 498.5h.7M519.8 508.7h.7M522.0 503.7h.7M518.9 498.1h.7M518.1 501.2h.7M522.4 498.8h.7M522.5 503.2h.7M519.1 500.6h.7M522.6 499.6h.7M520.0 503.6h.7M517.6 500.1h.7M522.7 507.1h.7M521.1 508.5h.7M517.0 506.0h.7M521.2 500.1h.7M519.3 509.4h.7M518.5 506.8h.7M517.4 505.6h.7M518.1 503.6h.7M518.8 508.1h.7M521.2 503.6h.7M520.8 502.6h.7M521.5 500.5h.7M519.9 504.6h.7M518.9 497.9h.7M517.4 505.2h.7M517.7 506.7h.7M519.6 509.1h.7M521.8 506.3h.7M518.8 497.8h.7M519.9 506.5h.7M522.3 499.8h.7M517.4 509.5h.7M521.1 503.3h.7M521.1 499.2h.7M519.9 505.6h.7M520.2 499.3h.7M517.2 505.0h.7M522.1 499.0h.7M516.4 498.3h.7M521.4 502.1h.7M519.3 509.6h.7M520.3 500.6h.7M520.9 497.3h.7M518.2 506.0h.7M517.5 497.7h.7M519.7 501.4h.7M522.6 498.6h.7M521.5 502.1h.7M521.5 502.8h.7M520.7 501.4h.7M517.8 502.9h.7M521.5 501.6h.7M517.8 502.5h.7M517.0 501.2h.7" stroke="#323d4a" stroke-width=".7" fill="none"/><rect x="529.80" y="485.80" width="15.40" height="25.80" fill="#1c1c1e" /><rect x="530.60" y="497.00" width="6.90" height="13.00" fill="#060606" /><rect x="537.50" y="497.00" width="6.90" height="13.00" fill="#676c72" /><path d="M541.4 504.1h.7M541.6 500.9h.7M538.0 497.6h.7M539.9 499.7h.7M541.4 500.6h.7M542.6 504.8h.7M542.0 506.4h.7M541.1 502.6h.7M539.7 498.1h.7M542.8 503.5h.7M538.4 508.8h.7M541.5 505.0h.7M540.6 498.9h.7M544.1 499.4h.7M540.1 509.7h.7M538.6 503.5h.7M540.8 500.4h.7M543.6 502.4h.7M537.9 503.2h.7M537.8 506.1h.7M543.3 508.5h.7M538.1 505.7h.7M539.7 503.2h.7M539.7 501.1h.7M538.6 505.1h.7M538.4 509.3h.7M538.1 509.3h.7M539.0 498.3h.7M542.5 503.9h.7M542.6 503.6h.7M541.8 498.3h.7M542.0 503.7h.7M543.9 497.4h.7M538.2 505.7h.7M543.6 502.5h.7M542.3 504.3h.7M540.3 503.1h.7M541.6 497.7h.7M539.7 506.5h.7M539.4 503.2h.7M539.4 501.7h.7M541.9 506.5h.7M543.8 503.2h.7M539.1 501.5h.7M538.2 500.3h.7M541.5 504.9h.7M539.3 499.6h.7M538.4 499.5h.7M541.0 500.5h.7M543.4 504.3h.7M539.9 502.6h.7M538.1 506.4h.7M542.5 501.8h.7M542.4 500.7h.7M539.2 500.1h.7M539.0 504.8h.7M541.8 506.3h.7M538.5 506.8h.7M540.8 502.0h.7M541.0 502.7h.7M539.1 502.2h.7M541.9 506.2h.7M543.6 499.7h.7M543.4 507.2h.7M542.3 509.4h.7M538.7 506.9h.7M543.5 498.8h.7M541.5 509.0h.7M539.6 507.9h.7M543.5 502.7h.7M538.7 500.0h.7" stroke="#323d4a" stroke-width=".7" fill="none"/><rect x="486.60" y="518.00" width="8.30" height="25.00" fill="#1c1c1e" /><rect x="487.40" y="522.80" width="6.70" height="12.00" fill="#676b70" /><rect x="508.20" y="518.00" width="15.60" height="5.00" fill="#1c1c1e" /><rect x="508.20" y="522.50" width="15.60" height="20.00" fill="#17171a" /><rect x="508.90" y="523.30" width="14.20" height="3.60" fill="#576272" /><rect x="508.90" y="528.10" width="6.40" height="13.20" fill="#576272" /><rect x="516.70" y="528.10" width="6.40" height="13.20" fill="#576272" /><rect x="509.70" y="529.30" width="4.80" height="10.80" fill="#676c72" /><path d="M513.5 533.9h.7M511.3 534.1h.7M513.9 532.2h.7M510.1 539.3h.7M511.3 533.5h.7M514.1 532.5h.7M510.4 538.7h.7M511.0 531.9h.7M513.9 531.9h.7M513.8 533.0h.7M511.3 531.8h.7M512.3 535.3h.7M511.7 534.8h.7M511.3 538.1h.7M513.9 537.3h.7M513.4 530.3h.7M511.1 531.7h.7M510.7 539.5h.7M513.8 538.9h.7M512.3 530.8h.7M511.8 530.2h.7M513.8 532.3h.7M511.2 539.2h.7M510.8 539.0h.7M511.3 536.4h.7M510.4 538.8h.7M511.7 533.1h.7M512.7 535.7h.7M511.1 530.9h.7M512.4 529.9h.7M513.7 533.1h.7M510.7 532.9h.7M510.5 532.8h.7M512.3 533.8h.7M511.4 532.6h.7M512.0 537.5h.7M511.8 537.4h.7M512.0 530.8h.7M510.7 538.2h.7M512.0 533.5h.7M512.2 538.2h.7" stroke="#323d4a" stroke-width=".7" fill="none"/><rect x="529.80" y="518.00" width="15.60" height="5.00" fill="#1c1c1e" /><rect x="529.80" y="522.50" width="15.60" height="20.00" fill="#17171a" /><rect x="530.50" y="523.30" width="14.20" height="3.60" fill="#576272" /><rect x="530.50" y="528.10" width="6.40" height="13.20" fill="#576272" /><rect x="538.30" y="528.10" width="6.40" height="13.20" fill="#576272" /><rect x="531.30" y="529.30" width="4.80" height="10.80" fill="#676c72" /><path d="M533.2 533.3h.7M533.1 529.7h.7M533.9 534.5h.7M533.7 534.2h.7M533.6 536.9h.7M532.4 539.6h.7M532.1 538.4h.7M532.3 537.7h.7M532.7 530.4h.7M533.9 538.2h.7M535.2 538.5h.7M535.7 530.1h.7M533.2 530.7h.7M534.8 534.2h.7M534.7 537.7h.7M535.8 536.5h.7M535.3 535.2h.7M531.9 538.7h.7M532.0 530.5h.7M535.1 532.5h.7M534.4 529.9h.7M532.5 536.9h.7M531.8 534.8h.7M535.5 531.8h.7M534.6 537.2h.7M534.2 537.4h.7M534.5 529.7h.7M532.4 535.1h.7M535.7 531.8h.7M534.1 530.9h.7M535.2 534.1h.7M533.8 536.4h.7M532.2 537.0h.7M535.0 538.4h.7M532.8 532.0h.7M532.3 538.8h.7M533.4 533.6h.7M533.8 536.7h.7M532.9 533.0h.7M534.8 537.5h.7M532.8 530.4h.7" stroke="#323d4a" stroke-width=".7" fill="none"/><rect x="486.60" y="547.50" width="15.60" height="4.00" fill="#1c1c1e" /><rect x="486.60" y="551.00" width="15.60" height="20.80" fill="#17171a" /><rect x="487.30" y="551.80" width="14.20" height="3.60" fill="#576272" /><rect x="487.30" y="556.60" width="6.40" height="14.00" fill="#576272" /><rect x="495.10" y="556.60" width="6.40" height="14.00" fill="#576272" /><rect x="488.10" y="557.80" width="4.80" height="11.60" fill="#676c72" /><path d="M492.3 566.1h.7M490.9 562.6h.7M492.4 562.8h.7M489.3 559.2h.7M489.9 564.7h.7M489.9 568.5h.7M491.1 563.1h.7M491.2 564.7h.7M491.0 563.5h.7M490.6 563.5h.7M491.9 560.2h.7M491.7 561.4h.7M492.0 558.9h.7M490.4 563.0h.7M491.4 560.3h.7M489.5 559.6h.7M490.8 564.4h.7M488.4 560.1h.7M489.2 568.6h.7M490.3 564.3h.7M489.6 565.4h.7M491.8 565.5h.7M488.4 562.9h.7M490.5 558.6h.7M491.7 561.6h.7M489.6 565.0h.7M490.9 563.6h.7M492.0 563.8h.7M489.8 558.8h.7M490.7 562.1h.7M490.7 561.9h.7M488.4 558.5h.7M489.1 559.1h.7M492.0 564.5h.7M489.4 565.9h.7M491.1 558.8h.7M491.6 560.6h.7M492.6 559.7h.7M489.6 560.8h.7M492.0 567.1h.7M490.8 559.7h.7M490.2 565.8h.7M488.6 568.2h.7M491.9 568.3h.7" stroke="#323d4a" stroke-width=".7" fill="none"/><rect x="508.20" y="547.50" width="15.60" height="4.00" fill="#1c1c1e" /><rect x="508.20" y="551.00" width="15.60" height="20.80" fill="#17171a" /><rect x="508.90" y="551.80" width="14.20" height="3.60" fill="#576272" /><rect x="508.90" y="556.60" width="6.40" height="14.00" fill="#576272" /><rect x="516.70" y="556.60" width="6.40" height="14.00" fill="#576272" /><rect x="509.70" y="557.80" width="4.80" height="11.60" fill="#676c72" /><path d="M512.9 564.9h.7M514.1 561.0h.7M511.3 559.5h.7M510.8 566.9h.7M510.4 566.3h.7M511.7 567.8h.7M513.2 565.7h.7M513.5 558.6h.7M511.1 562.2h.7M511.8 565.5h.7M513.7 566.2h.7M513.9 565.8h.7M511.5 563.7h.7M513.1 567.1h.7M511.6 562.0h.7M512.6 560.6h.7M513.7 558.1h.7M512.7 563.4h.7M510.8 564.4h.7M512.0 568.7h.7M513.7 564.6h.7M513.7 567.8h.7M510.7 567.2h.7M513.5 569.0h.7M513.2 562.4h.7M510.9 565.3h.7M510.9 566.4h.7M512.4 567.2h.7M511.5 561.4h.7M513.8 565.4h.7M511.6 564.3h.7M511.8 565.2h.7M512.2 561.2h.7M514.1 567.8h.7M513.2 561.2h.7M510.8 566.1h.7M513.5 565.3h.7M510.9 566.0h.7M512.2 562.2h.7M512.5 563.0h.7M512.7 566.4h.7M514.1 559.3h.7M512.4 568.5h.7M512.8 564.5h.7" stroke="#323d4a" stroke-width=".7" fill="none"/><rect x="529.80" y="547.50" width="15.60" height="4.00" fill="#1c1c1e" /><rect x="529.80" y="551.00" width="15.60" height="20.80" fill="#17171a" /><rect x="530.50" y="551.80" width="14.20" height="3.60" fill="#576272" /><rect x="530.50" y="556.60" width="6.40" height="14.00" fill="#576272" /><rect x="538.30" y="556.60" width="6.40" height="14.00" fill="#576272" /><rect x="531.30" y="557.80" width="4.80" height="11.60" fill="#676c72" /><path d="M535.2 558.4h.7M534.9 565.0h.7M534.1 561.5h.7M534.2 559.5h.7M533.8 560.9h.7M535.5 567.0h.7M533.6 566.4h.7M533.2 563.9h.7M532.3 567.5h.7M534.8 566.5h.7M531.9 567.1h.7M531.7 564.3h.7M533.6 558.8h.7M533.4 567.9h.7M534.2 561.6h.7M535.0 562.0h.7M535.4 562.5h.7M531.9 568.8h.7M531.9 560.9h.7M534.8 559.4h.7M533.9 567.5h.7M534.1 561.9h.7M534.8 567.2h.7M534.0 565.0h.7M533.0 562.6h.7M535.8 568.8h.7M531.6 560.3h.7M532.5 566.8h.7M532.4 560.0h.7M534.8 560.0h.7M535.7 563.1h.7M535.4 567.1h.7M532.5 566.7h.7M533.3 560.5h.7M531.8 565.8h.7M534.0 561.4h.7M535.1 560.3h.7M533.5 559.1h.7M533.1 567.8h.7M533.7 559.8h.7M532.6 565.2h.7M532.8 567.9h.7M531.9 567.7h.7M534.2 567.1h.7" stroke="#323d4a" stroke-width=".7" fill="none"/><rect x="487.00" y="577.00" width="11.00" height="28.00" fill="#1c1c1e" /><rect x="488.00" y="581.00" width="9.00" height="4.50" fill="#576272" /><rect x="488.50" y="587.00" width="3.60" height="14.00" fill="#676b70" /><rect x="493.00" y="587.00" width="3.60" height="14.00" fill="#576272" /><rect x="508.20" y="577.00" width="15.60" height="4.00" fill="#1c1c1e" /><rect x="508.20" y="580.50" width="15.60" height="21.00" fill="#17171a" /><rect x="508.90" y="581.30" width="14.20" height="3.60" fill="#576272" /><rect x="508.90" y="586.10" width="6.40" height="14.20" fill="#576272" /><rect x="516.70" y="586.10" width="6.40" height="14.20" fill="#576272" /><rect x="509.70" y="587.30" width="4.80" height="11.80" fill="#676c72" /><path d="M511.5 588.4h.7M510.7 594.6h.7M510.1 588.8h.7M513.3 597.4h.7M513.6 597.0h.7M512.3 597.4h.7M512.9 593.8h.7M511.8 587.9h.7M510.4 590.4h.7M511.9 589.0h.7M514.1 594.1h.7M513.1 597.6h.7M511.0 597.5h.7M514.0 590.6h.7M510.5 596.6h.7M513.7 596.5h.7M511.7 594.3h.7M510.5 590.2h.7M511.8 595.9h.7M510.4 598.0h.7M510.1 598.5h.7M511.0 596.8h.7M513.4 598.3h.7M512.0 595.4h.7M511.2 596.9h.7M510.5 597.5h.7M512.5 588.3h.7M514.0 591.1h.7M510.3 590.5h.7M510.1 590.8h.7M513.0 598.7h.7M512.7 597.2h.7M513.5 595.6h.7M511.6 590.4h.7M510.7 593.7h.7M510.9 595.9h.7M511.3 594.1h.7M512.3 594.6h.7M510.7 590.5h.7M512.9 590.0h.7M512.8 598.4h.7M511.6 598.4h.7M512.6 598.2h.7M512.2 596.0h.7M512.9 589.8h.7" stroke="#323d4a" stroke-width=".7" fill="none"/><rect x="529.80" y="577.00" width="15.60" height="4.00" fill="#1c1c1e" /><rect x="529.80" y="580.50" width="15.60" height="21.00" fill="#17171a" /><rect x="530.50" y="581.30" width="14.20" height="3.60" fill="#576272" /><rect x="530.50" y="586.10" width="6.40" height="14.20" fill="#576272" /><rect x="538.30" y="586.10" width="6.40" height="14.20" fill="#576272" /><rect x="531.30" y="587.30" width="4.80" height="11.80" fill="#676c72" /><path d="M533.8 594.1h.7M533.5 595.0h.7M535.4 596.5h.7M535.0 589.2h.7M534.6 594.6h.7M535.5 587.6h.7M532.3 598.5h.7M533.2 595.5h.7M534.1 592.1h.7M533.4 593.9h.7M535.7 593.6h.7M534.9 591.0h.7M534.6 594.4h.7M534.7 597.5h.7M531.9 598.4h.7M534.2 590.5h.7M533.6 588.7h.7M532.6 597.0h.7M534.6 597.3h.7M532.3 588.8h.7M533.2 593.2h.7M534.6 590.9h.7M534.7 594.1h.7M532.8 596.4h.7M531.9 594.2h.7M532.4 588.1h.7M533.6 593.4h.7M534.2 591.8h.7M535.5 596.4h.7M532.2 587.7h.7M535.6 592.2h.7M532.0 589.6h.7M534.5 589.6h.7M533.2 595.2h.7M533.1 594.9h.7M535.6 596.5h.7M534.2 594.6h.7M532.9 594.8h.7M534.3 594.2h.7M533.7 596.0h.7M532.5 595.6h.7M535.7 588.0h.7M532.7 598.6h.7M531.9 596.8h.7M534.0 588.4h.7" stroke="#323d4a" stroke-width=".7" fill="none"/><rect x="178.30" y="543.00" width="423.60" height="4.20" fill="#636261" /><rect x="172.00" y="572.30" width="430.00" height="4.30" fill="#1a1a1c" /><rect x="178.30" y="572.50" width="30.70" height="3.90" fill="#636261" /><rect x="250.50" y="572.50" width="28.50" height="3.90" fill="#636261" /><rect x="321.00" y="572.50" width="138.00" height="3.90" fill="#636261" /><rect x="502.30" y="572.50" width="99.60" height="3.90" fill="#636261" /><path d="M178.300 604.500H601.900V611.500L540 613.800H178.300z" fill="#161618"/><path d="M215 612.500L233 601.500H245V605H235L221 613.500z" fill="#0f0f10"/><path d="M218 613L235 604.500H245" stroke="#696969" stroke-width=".8" fill="none"/><path d="M217.00 611.00L217.00 606.50" stroke="#0a0a0a" stroke-width="0.6" fill="none" /><path d="M219.80 609.85L219.80 605.35" stroke="#0a0a0a" stroke-width="0.6" fill="none" /><path d="M222.60 608.70L222.60 604.20" stroke="#0a0a0a" stroke-width="0.6" fill="none" /><path d="M225.40 607.55L225.40 603.05" stroke="#0a0a0a" stroke-width="0.6" fill="none" /><path d="M228.20 606.40L228.20 601.90" stroke="#0a0a0a" stroke-width="0.6" fill="none" /><path d="M231.00 605.25L231.00 600.75" stroke="#0a0a0a" stroke-width="0.6" fill="none" /><path d="M233.80 604.10L233.80 599.60" stroke="#0a0a0a" stroke-width="0.6" fill="none" /><path d="M236.60 602.95L236.60 598.45" stroke="#0a0a0a" stroke-width="0.6" fill="none" /><path d="M239.40 601.80L239.40 597.30" stroke="#0a0a0a" stroke-width="0.6" fill="none" /><path d="M242.20 600.65L242.20 596.15" stroke="#0a0a0a" stroke-width="0.6" fill="none" /><path d="M287 612.500L305 601.500H317V605H307L293 613.500z" fill="#0f0f10"/><path d="M290 613L307 604.500H317" stroke="#696969" stroke-width=".8" fill="none"/><path d="M289.00 611.00L289.00 606.50" stroke="#0a0a0a" stroke-width="0.6" fill="none" /><path d="M291.80 609.85L291.80 605.35" stroke="#0a0a0a" stroke-width="0.6" fill="none" /><path d="M294.60 608.70L294.60 604.20" stroke="#0a0a0a" stroke-width="0.6" fill="none" /><path d="M297.40 607.55L297.40 603.05" stroke="#0a0a0a" stroke-width="0.6" fill="none" /><path d="M300.20 606.40L300.20 601.90" stroke="#0a0a0a" stroke-width="0.6" fill="none" /><path d="M303.00 605.25L303.00 600.75" stroke="#0a0a0a" stroke-width="0.6" fill="none" /><path d="M305.80 604.10L305.80 599.60" stroke="#0a0a0a" stroke-width="0.6" fill="none" /><path d="M308.60 602.95L308.60 598.45" stroke="#0a0a0a" stroke-width="0.6" fill="none" /><path d="M311.40 601.80L311.40 597.30" stroke="#0a0a0a" stroke-width="0.6" fill="none" /><path d="M314.20 600.65L314.20 596.15" stroke="#0a0a0a" stroke-width="0.6" fill="none" /><path d="M471.8 612.500L489.8 601.500H501.8V605H491.8L477.8 613.500z" fill="#0f0f10"/><path d="M474.8 613L491.8 604.500H501.8" stroke="#696969" stroke-width=".8" fill="none"/><path d="M473.80 611.00L473.80 606.50" stroke="#0a0a0a" stroke-width="0.6" fill="none" /><path d="M476.60 609.85L476.60 605.35" stroke="#0a0a0a" stroke-width="0.6" fill="none" /><path d="M479.40 608.70L479.40 604.20" stroke="#0a0a0a" stroke-width="0.6" fill="none" /><path d="M482.20 607.55L482.20 603.05" stroke="#0a0a0a" stroke-width="0.6" fill="none" /><path d="M485.00 606.40L485.00 601.90" stroke="#0a0a0a" stroke-width="0.6" fill="none" /><path d="M487.80 605.25L487.80 600.75" stroke="#0a0a0a" stroke-width="0.6" fill="none" /><path d="M490.60 604.10L490.60 599.60" stroke="#0a0a0a" stroke-width="0.6" fill="none" /><path d="M493.40 602.95L493.40 598.45" stroke="#0a0a0a" stroke-width="0.6" fill="none" /><path d="M496.20 601.80L496.20 597.30" stroke="#0a0a0a" stroke-width="0.6" fill="none" /><path d="M499.00 600.65L499.00 596.15" stroke="#0a0a0a" stroke-width="0.6" fill="none" /><path d="M160.500 600h12l5.500-2.500h0v9h-17.500z" fill="#151516"/><path d="M161.00 598.50L161.00 606.50" stroke="#0a0a0a" stroke-width="0.7" fill="none" /><path d="M163.20 598.50L163.20 606.50" stroke="#0a0a0a" stroke-width="0.7" fill="none" /><path d="M165.40 598.50L165.40 606.50" stroke="#0a0a0a" stroke-width="0.7" fill="none" /><path d="M167.60 598.50L167.60 606.50" stroke="#0a0a0a" stroke-width="0.7" fill="none" /><path d="M169.80 598.50L169.80 606.50" stroke="#0a0a0a" stroke-width="0.7" fill="none" /><path d="M172.00 598.50L172.00 606.50" stroke="#0a0a0a" stroke-width="0.7" fill="none" /><path d="M174.20 598.50L174.20 606.50" stroke="#0a0a0a" stroke-width="0.7" fill="none" /><path d="M176.40 598.50L176.40 606.50" stroke="#0a0a0a" stroke-width="0.7" fill="none" /><path d="M160.00 598.00L178.00 596.50" stroke="#0a0a0a" stroke-width="0.8" fill="none" /><path d="M171.00 606.00L171.00 619.00" stroke="#1a1a1a" stroke-width="0.4" fill="none" /><path d="M178.30 520.40L601.90 520.40" stroke="#808080" stroke-width="0.8" fill="none" /><path d="M290.80 475.50L290.80 614.00" stroke="#7c7c7c" stroke-width="0.8" fill="none" /><path d="M401.90 475.50L401.90 614.00" stroke="#7c7c7c" stroke-width="0.8" fill="none" /><path d="M513.00 476.00L513.00 612.00" stroke="#5f514d" stroke-width="0.5" fill="none" /><path d="M147.00 499.20L166.00 499.20" stroke="#2c2c2c" stroke-width="0.4" fill="none" /><path d="M163.40 503.20L166.00 506.60" stroke="#2c2c2c" stroke-width="0.4" fill="none" /><path d="M168.60 503.20L166.00 506.60" stroke="#2c2c2c" stroke-width="0.4" fill="none" /><path d="M166.00 499.20L166.00 506.60" stroke="#2c2c2c" stroke-width="0.4" fill="none" /><path d="M161.00 506.60L186.00 506.60" stroke="#555555" stroke-width="0.4" fill="none" /><text x="156.50" y="498.20" font-size="4.4" fill="#0f0f0f" text-anchor="middle" font-weight="normal" font-family="Liberation Sans" >+13.980</text><path d="M147.00 509.60L166.00 509.60" stroke="#2c2c2c" stroke-width="0.4" fill="none" /><path d="M163.40 513.60L166.00 517.00" stroke="#2c2c2c" stroke-width="0.4" fill="none" /><path d="M168.60 513.60L166.00 517.00" stroke="#2c2c2c" stroke-width="0.4" fill="none" /><path d="M166.00 509.60L166.00 517.00" stroke="#2c2c2c" stroke-width="0.4" fill="none" /><path d="M161.00 517.00L186.00 517.00" stroke="#555555" stroke-width="0.4" fill="none" /><text x="156.50" y="508.60" font-size="4.4" fill="#0f0f0f" text-anchor="middle" font-weight="normal" font-family="Liberation Sans" >+11.570</text><path d="M147.00 528.30L166.00 528.30" stroke="#2c2c2c" stroke-width="0.4" fill="none" /><path d="M163.40 532.30L166.00 535.70" stroke="#2c2c2c" stroke-width="0.4" fill="none" /><path d="M168.60 532.30L166.00 535.70" stroke="#2c2c2c" stroke-width="0.4" fill="none" /><path d="M166.00 528.30L166.00 535.70" stroke="#2c2c2c" stroke-width="0.4" fill="none" /><path d="M161.00 535.70L186.00 535.70" stroke="#555555" stroke-width="0.4" fill="none" /><text x="156.50" y="527.30" font-size="4.4" fill="#0f0f0f" text-anchor="middle" font-weight="normal" font-family="Liberation Sans" >+10.950</text><path d="M120.00 538.90L139.00 538.90" stroke="#2c2c2c" stroke-width="0.4" fill="none" /><path d="M136.40 542.90L139.00 546.30" stroke="#2c2c2c" stroke-width="0.4" fill="none" /><path d="M141.60 542.90L139.00 546.30" stroke="#2c2c2c" stroke-width="0.4" fill="none" /><path d="M139.00 538.90L139.00 546.30" stroke="#2c2c2c" stroke-width="0.4" fill="none" /><path d="M134.00 546.30L159.00 546.30" stroke="#555555" stroke-width="0.4" fill="none" /><text x="129.50" y="537.90" font-size="4.4" fill="#0f0f0f" text-anchor="middle" font-weight="normal" font-family="Liberation Sans" >+7.650</text><path d="M147.00 540.90L166.00 540.90" stroke="#2c2c2c" stroke-width="0.4" fill="none" /><path d="M163.40 544.90L166.00 548.30" stroke="#2c2c2c" stroke-width="0.4" fill="none" /><path d="M168.60 544.90L166.00 548.30" stroke="#2c2c2c" stroke-width="0.4" fill="none" /><path d="M166.00 540.90L166.00 548.30" stroke="#2c2c2c" stroke-width="0.4" fill="none" /><path d="M161.00 548.30L186.00 548.30" stroke="#555555" stroke-width="0.4" fill="none" /><text x="156.50" y="539.90" font-size="4.4" fill="#0f0f0f" text-anchor="middle" font-weight="normal" font-family="Liberation Sans" >+9.290</text><path d="M147.00 557.90L166.00 557.90" stroke="#2c2c2c" stroke-width="0.4" fill="none" /><path d="M163.40 561.90L166.00 565.30" stroke="#2c2c2c" stroke-width="0.4" fill="none" /><path d="M168.60 561.90L166.00 565.30" stroke="#2c2c2c" stroke-width="0.4" fill="none" /><path d="M166.00 557.90L166.00 565.30" stroke="#2c2c2c" stroke-width="0.4" fill="none" /><path d="M161.00 565.30L186.00 565.30" stroke="#555555" stroke-width="0.4" fill="none" /><text x="156.50" y="556.90" font-size="4.4" fill="#0f0f0f" text-anchor="middle" font-weight="normal" font-family="Liberation Sans" >+7.050</text><path d="M120.00 562.70L139.00 562.70" stroke="#2c2c2c" stroke-width="0.4" fill="none" /><path d="M136.40 566.70L139.00 570.10" stroke="#2c2c2c" stroke-width="0.4" fill="none" /><path d="M141.60 566.70L139.00 570.10" stroke="#2c2c2c" stroke-width="0.4" fill="none" /><path d="M139.00 562.70L139.00 570.10" stroke="#2c2c2c" stroke-width="0.4" fill="none" /><path d="M134.00 570.10L159.00 570.10" stroke="#555555" stroke-width="0.4" fill="none" /><text x="129.50" y="561.70" font-size="4.4" fill="#0f0f0f" text-anchor="middle" font-weight="normal" font-family="Liberation Sans" >+4.480</text><path d="M120.00 582.40L139.00 582.40" stroke="#2c2c2c" stroke-width="0.4" fill="none" /><path d="M136.40 586.40L139.00 589.80" stroke="#2c2c2c" stroke-width="0.4" fill="none" /><path d="M141.60 586.40L139.00 589.80" stroke="#2c2c2c" stroke-width="0.4" fill="none" /><path d="M139.00 582.40L139.00 589.80" stroke="#2c2c2c" stroke-width="0.4" fill="none" /><path d="M134.00 589.80L159.00 589.80" stroke="#555555" stroke-width="0.4" fill="none" /><text x="129.50" y="581.40" font-size="4.4" fill="#0f0f0f" text-anchor="middle" font-weight="normal" font-family="Liberation Sans" >+3.750</text><path d="M147.00 588.50L166.00 588.50" stroke="#2c2c2c" stroke-width="0.4" fill="none" /><path d="M163.40 592.50L166.00 595.90" stroke="#2c2c2c" stroke-width="0.4" fill="none" /><path d="M168.60 592.50L166.00 595.90" stroke="#2c2c2c" stroke-width="0.4" fill="none" /><path d="M166.00 588.50L166.00 595.90" stroke="#2c2c2c" stroke-width="0.4" fill="none" /><path d="M161.00 595.90L186.00 595.90" stroke="#555555" stroke-width="0.4" fill="none" /><text x="156.50" y="587.50" font-size="4.4" fill="#0f0f0f" text-anchor="middle" font-weight="normal" font-family="Liberation Sans" >+0.850</text><path d="M120.00 595.60L139.00 595.60" stroke="#2c2c2c" stroke-width="0.4" fill="none" /><path d="M136.40 599.60L139.00 603.00" stroke="#2c2c2c" stroke-width="0.4" fill="none" /><path d="M141.60 599.60L139.00 603.00" stroke="#2c2c2c" stroke-width="0.4" fill="none" /><path d="M139.00 595.60L139.00 603.00" stroke="#2c2c2c" stroke-width="0.4" fill="none" /><path d="M134.00 603.00L159.00 603.00" stroke="#555555" stroke-width="0.4" fill="none" /><text x="129.50" y="594.60" font-size="4.4" fill="#0f0f0f" text-anchor="middle" font-weight="normal" font-family="Liberation Sans" >-0.020</text><path d="M120.00 604.90L139.00 604.90" stroke="#2c2c2c" stroke-width="0.4" fill="none" /><path d="M136.40 608.90L139.00 612.30" stroke="#2c2c2c" stroke-width="0.4" fill="none" /><path d="M141.60 608.90L139.00 612.30" stroke="#2c2c2c" stroke-width="0.4" fill="none" /><path d="M139.00 604.90L139.00 612.30" stroke="#2c2c2c" stroke-width="0.4" fill="none" /><path d="M134.00 612.30L159.00 612.30" stroke="#555555" stroke-width="0.4" fill="none" /><text x="129.50" y="603.90" font-size="4.4" fill="#0f0f0f" text-anchor="middle" font-weight="normal" font-family="Liberation Sans" >-1.380</text><text x="131.00" y="609.80" font-size="3.2" fill="#232323" text-anchor="middle" font-weight="normal" font-family="Liberation Sans" >ур.з.</text><path d="M633.00 468.10L615.00 468.10" stroke="#2c2c2c" stroke-width="0.4" fill="none" /><path d="M612.40 472.10L615.00 475.50" stroke="#2c2c2c" stroke-width="0.4" fill="none" /><path d="M617.60 472.10L615.00 475.50" stroke="#2c2c2c" stroke-width="0.4" fill="none" /><path d="M615.00 468.10L615.00 475.50" stroke="#2c2c2c" stroke-width="0.4" fill="none" /><path d="M595.00 475.50L620.00 475.50" stroke="#555555" stroke-width="0.4" fill="none" /><text x="624.00" y="467.10" font-size="4.4" fill="#0f0f0f" text-anchor="middle" font-weight="normal" font-family="Liberation Sans" >+17.250</text><path d="M633.00 479.10L615.00 479.10" stroke="#2c2c2c" stroke-width="0.4" fill="none" /><path d="M612.40 483.10L615.00 486.50" stroke="#2c2c2c" stroke-width="0.4" fill="none" /><path d="M617.60 483.10L615.00 486.50" stroke="#2c2c2c" stroke-width="0.4" fill="none" /><path d="M615.00 479.10L615.00 486.50" stroke="#2c2c2c" stroke-width="0.4" fill="none" /><path d="M595.00 486.50L620.00 486.50" stroke="#555555" stroke-width="0.4" fill="none" /><text x="624.00" y="478.10" font-size="4.4" fill="#0f0f0f" text-anchor="middle" font-weight="normal" font-family="Liberation Sans" >+16.025</text><path d="M633.00 505.10L615.00 505.10" stroke="#2c2c2c" stroke-width="0.4" fill="none" /><path d="M612.40 509.10L615.00 512.50" stroke="#2c2c2c" stroke-width="0.4" fill="none" /><path d="M617.60 509.10L615.00 512.50" stroke="#2c2c2c" stroke-width="0.4" fill="none" /><path d="M615.00 505.10L615.00 512.50" stroke="#2c2c2c" stroke-width="0.4" fill="none" /><path d="M595.00 512.50L620.00 512.50" stroke="#555555" stroke-width="0.4" fill="none" /><text x="624.00" y="504.10" font-size="4.4" fill="#0f0f0f" text-anchor="middle" font-weight="normal" font-family="Liberation Sans" >+12.960</text><path d="M633.00 518.60L615.00 518.60" stroke="#2c2c2c" stroke-width="0.4" fill="none" /><path d="M612.40 522.60L615.00 526.00" stroke="#2c2c2c" stroke-width="0.4" fill="none" /><path d="M617.60 522.60L615.00 526.00" stroke="#2c2c2c" stroke-width="0.4" fill="none" /><path d="M615.00 518.60L615.00 526.00" stroke="#2c2c2c" stroke-width="0.4" fill="none" /><path d="M595.00 526.00L620.00 526.00" stroke="#555555" stroke-width="0.4" fill="none" /><text x="624.00" y="517.60" font-size="4.4" fill="#0f0f0f" text-anchor="middle" font-weight="normal" font-family="Liberation Sans" >+10.950</text><path d="M633.00 536.10L615.00 536.10" stroke="#2c2c2c" stroke-width="0.4" fill="none" /><path d="M612.40 540.10L615.00 543.50" stroke="#2c2c2c" stroke-width="0.4" fill="none" /><path d="M617.60 540.10L615.00 543.50" stroke="#2c2c2c" stroke-width="0.4" fill="none" /><path d="M615.00 536.10L615.00 543.50" stroke="#2c2c2c" stroke-width="0.4" fill="none" /><path d="M595.00 543.50L620.00 543.50" stroke="#555555" stroke-width="0.4" fill="none" /><text x="624.00" y="535.10" font-size="4.4" fill="#0f0f0f" text-anchor="middle" font-weight="normal" font-family="Liberation Sans" >+8.250</text><path d="M633.00 545.10L615.00 545.10" stroke="#2c2c2c" stroke-width="0.4" fill="none" /><path d="M612.40 549.10L615.00 552.50" stroke="#2c2c2c" stroke-width="0.4" fill="none" /><path d="M617.60 549.10L615.00 552.50" stroke="#2c2c2c" stroke-width="0.4" fill="none" /><path d="M615.00 545.10L615.00 552.50" stroke="#2c2c2c" stroke-width="0.4" fill="none" /><path d="M595.00 552.50L620.00 552.50" stroke="#555555" stroke-width="0.4" fill="none" /><text x="624.00" y="544.10" font-size="4.4" fill="#0f0f0f" text-anchor="middle" font-weight="normal" font-family="Liberation Sans" >+7.050</text><path d="M633.00 565.10L615.00 565.10" stroke="#2c2c2c" stroke-width="0.4" fill="none" /><path d="M612.40 569.10L615.00 572.50" stroke="#2c2c2c" stroke-width="0.4" fill="none" /><path d="M617.60 569.10L615.00 572.50" stroke="#2c2c2c" stroke-width="0.4" fill="none" /><path d="M615.00 565.10L615.00 572.50" stroke="#2c2c2c" stroke-width="0.4" fill="none" /><path d="M595.00 572.50L620.00 572.50" stroke="#555555" stroke-width="0.4" fill="none" /><text x="624.00" y="564.10" font-size="4.4" fill="#0f0f0f" text-anchor="middle" font-weight="normal" font-family="Liberation Sans" >+4.350</text><path d="M633.00 574.60L615.00 574.60" stroke="#2c2c2c" stroke-width="0.4" fill="none" /><path d="M612.40 578.60L615.00 582.00" stroke="#2c2c2c" stroke-width="0.4" fill="none" /><path d="M617.60 578.60L615.00 582.00" stroke="#2c2c2c" stroke-width="0.4" fill="none" /><path d="M615.00 574.60L615.00 582.00" stroke="#2c2c2c" stroke-width="0.4" fill="none" /><path d="M595.00 582.00L620.00 582.00" stroke="#555555" stroke-width="0.4" fill="none" /><text x="624.00" y="573.60" font-size="4.4" fill="#0f0f0f" text-anchor="middle" font-weight="normal" font-family="Liberation Sans" >+3.150</text><path d="M633.00 594.10L615.00 594.10" stroke="#2c2c2c" stroke-width="0.4" fill="none" /><path d="M612.40 598.10L615.00 601.50" stroke="#2c2c2c" stroke-width="0.4" fill="none" /><path d="M617.60 598.10L615.00 601.50" stroke="#2c2c2c" stroke-width="0.4" fill="none" /><path d="M615.00 594.10L615.00 601.50" stroke="#2c2c2c" stroke-width="0.4" fill="none" /><path d="M595.00 601.50L620.00 601.50" stroke="#555555" stroke-width="0.4" fill="none" /><text x="624.00" y="593.10" font-size="4.4" fill="#0f0f0f" text-anchor="middle" font-weight="normal" font-family="Liberation Sans" >+0.450</text><path d="M633.00 604.10L615.00 604.10" stroke="#2c2c2c" stroke-width="0.4" fill="none" /><path d="M612.40 608.10L615.00 611.50" stroke="#2c2c2c" stroke-width="0.4" fill="none" /><path d="M617.60 608.10L615.00 611.50" stroke="#2c2c2c" stroke-width="0.4" fill="none" /><path d="M615.00 604.10L615.00 611.50" stroke="#2c2c2c" stroke-width="0.4" fill="none" /><path d="M595.00 611.50L620.00 611.50" stroke="#555555" stroke-width="0.4" fill="none" /><text x="624.00" y="603.10" font-size="4.4" fill="#0f0f0f" text-anchor="middle" font-weight="normal" font-family="Liberation Sans" >-0.500</text><text x="624.00" y="615.50" font-size="3.2" fill="#232323" text-anchor="middle" font-weight="normal" font-family="Liberation Sans" >ур.з.</text><path d="M555.00 475.50L614.00 475.50" stroke="#3d3d3d" stroke-width="0.4" fill="none" /><path d="M555.00 486.50L614.00 486.50" stroke="#2c2c2c" stroke-width="0.4" fill="none" /><path d="M603.00 507.30L614.00 507.30" stroke="#3d3d3d" stroke-width="0.4" fill="none" /><path d="M634.500 505H616V512.400" stroke="#000000" stroke-width=".9" fill="none"/><rect x="224.40" y="451.20" width="14" height="19" fill="#808080" stroke="#000000" stroke-width="1.200"/><rect x="226.20" y="453.00" width="10.400" height="15.400" fill="none" stroke="#353535" stroke-width=".4"/><text x="231.40" y="463.00" font-size="6.5" fill="#1a1a1a" text-anchor="middle" font-weight="normal" font-family="Liberation Sans" >4</text><rect x="274.50" y="450.50" width="14" height="19" fill="#808080" stroke="#000000" stroke-width="1.200"/><rect x="276.30" y="452.30" width="10.400" height="15.400" fill="none" stroke="#353535" stroke-width=".4"/><text x="281.50" y="462.30" font-size="6.5" fill="#1a1a1a" text-anchor="middle" font-weight="normal" font-family="Liberation Sans" >1</text><rect x="305.00" y="450.50" width="14" height="19" fill="#808080" stroke="#000000" stroke-width="1.200"/><rect x="306.80" y="452.30" width="10.400" height="15.400" fill="none" stroke="#353535" stroke-width=".4"/><text x="312.00" y="462.30" font-size="6.5" fill="#1a1a1a" text-anchor="middle" font-weight="normal" font-family="Liberation Sans" >6</text><rect x="458.70" y="450.50" width="14" height="19" fill="#808080" stroke="#000000" stroke-width="1.200"/><rect x="460.50" y="452.30" width="10.400" height="15.400" fill="none" stroke="#353535" stroke-width=".4"/><text x="465.70" y="462.30" font-size="6.5" fill="#1a1a1a" text-anchor="middle" font-weight="normal" font-family="Liberation Sans" >3</text><rect x="164.00" y="617.80" width="14" height="19" fill="#808080" stroke="#000000" stroke-width="1.200"/><rect x="165.80" y="619.60" width="10.400" height="15.400" fill="none" stroke="#353535" stroke-width=".4"/><text x="171.00" y="629.60" font-size="6.5" fill="#1a1a1a" text-anchor="middle" font-weight="normal" font-family="Liberation Sans" >10</text><rect x="271.50" y="617.80" width="14" height="19" fill="#808080" stroke="#000000" stroke-width="1.200"/><rect x="273.30" y="619.60" width="10.400" height="15.400" fill="none" stroke="#353535" stroke-width=".4"/><text x="278.50" y="629.60" font-size="6.5" fill="#1a1a1a" text-anchor="middle" font-weight="normal" font-family="Liberation Sans" >5</text><rect x="487.30" y="617.80" width="14" height="19" fill="#808080" stroke="#000000" stroke-width="1.200"/><rect x="489.10" y="619.60" width="10.400" height="15.400" fill="none" stroke="#353535" stroke-width=".4"/><text x="494.30" y="629.60" font-size="6.5" fill="#1a1a1a" text-anchor="middle" font-weight="normal" font-family="Liberation Sans" >8</text><rect x="529.30" y="617.80" width="14" height="19" fill="#808080" stroke="#000000" stroke-width="1.200"/><rect x="531.10" y="619.60" width="10.400" height="15.400" fill="none" stroke="#353535" stroke-width=".4"/><text x="536.30" y="629.60" font-size="6.5" fill="#1a1a1a" text-anchor="middle" font-weight="normal" font-family="Liberation Sans" >6</text><path d="M231.40 470.00L231.40 544.00" stroke="#000000" stroke-width="0.4" fill="none" /><path d="M281.50 469.50L281.50 482.50" stroke="#000000" stroke-width="0.4" fill="none" /><path d="M312.00 469.50L312.00 504.00" stroke="#000000" stroke-width="0.4" fill="none" /><path d="M465.70 469.50L465.70 484.00" stroke="#000000" stroke-width="0.4" fill="none" /><path d="M278.50 610.00L278.50 618.00" stroke="#000000" stroke-width="0.4" fill="none" /><path d="M494.30 598.00L494.30 618.00" stroke="#000000" stroke-width="0.4" fill="none" /><path d="M536.30 598.00L536.30 618.00" stroke="#000000" stroke-width="0.4" fill="none" /><text x="400.30" y="454.60" font-size="8.8" fill="#000000" text-anchor="middle" font-weight="bold" font-family="Liberation Sans" >Фасад 15-1</text><path d="M178.70 644.50L600.40 644.50" stroke="#232323" stroke-width="0.45" fill="none" /><path d="M178.70 653.80L600.40 653.80" stroke="#232323" stroke-width="0.45" fill="none" /><path d="M180.20 646.00L183.20 643.00" stroke="#0f0f0f" stroke-width="0.8" fill="none" /><path d="M227.50 646.00L230.50 643.00" stroke="#0f0f0f" stroke-width="0.8" fill="none" /><path d="M251.20 646.00L254.20 643.00" stroke="#0f0f0f" stroke-width="0.8" fill="none" /><path d="M298.50 646.00L301.50 643.00" stroke="#0f0f0f" stroke-width="0.8" fill="none" /><path d="M343.50 646.00L346.50 643.00" stroke="#0f0f0f" stroke-width="0.8" fill="none" /><path d="M387.80 646.00L390.80 643.00" stroke="#0f0f0f" stroke-width="0.8" fill="none" /><path d="M411.50 646.00L414.50 643.00" stroke="#0f0f0f" stroke-width="0.8" fill="none" /><path d="M432.70 646.00L435.70 643.00" stroke="#0f0f0f" stroke-width="0.8" fill="none" /><path d="M444.80 646.00L447.80 643.00" stroke="#0f0f0f" stroke-width="0.8" fill="none" /><path d="M468.00 646.00L471.00 643.00" stroke="#0f0f0f" stroke-width="0.8" fill="none" /><path d="M480.50 646.00L483.50 643.00" stroke="#0f0f0f" stroke-width="0.8" fill="none" /><path d="M511.90 646.00L514.90 643.00" stroke="#0f0f0f" stroke-width="0.8" fill="none" /><path d="M524.90 646.00L527.90 643.00" stroke="#0f0f0f" stroke-width="0.8" fill="none" /><path d="M548.10 646.00L551.10 643.00" stroke="#0f0f0f" stroke-width="0.8" fill="none" /><path d="M595.90 646.00L598.90 643.00" stroke="#0f0f0f" stroke-width="0.8" fill="none" /><path d="M180.20 655.30L183.20 652.30" stroke="#0f0f0f" stroke-width="0.8" fill="none" /><path d="M595.90 655.30L598.90 652.30" stroke="#0f0f0f" stroke-width="0.8" fill="none" /><text x="205.35" y="642.90" font-size="4.3" fill="#0f0f0f" text-anchor="middle" font-weight="normal" font-family="Liberation Sans" >6370</text><text x="240.85" y="642.90" font-size="4.3" fill="#0f0f0f" text-anchor="middle" font-weight="normal" font-family="Liberation Sans" >3120</text><text x="276.35" y="642.90" font-size="4.3" fill="#0f0f0f" text-anchor="middle" font-weight="normal" font-family="Liberation Sans" >6370</text><text x="322.50" y="642.90" font-size="4.3" fill="#0f0f0f" text-anchor="middle" font-weight="normal" font-family="Liberation Sans" >6000</text><text x="367.15" y="642.90" font-size="4.3" fill="#0f0f0f" text-anchor="middle" font-weight="normal" font-family="Liberation Sans" >6000</text><text x="401.15" y="642.90" font-size="4.3" fill="#0f0f0f" text-anchor="middle" font-weight="normal" font-family="Liberation Sans" >3120</text><text x="423.60" y="642.90" font-size="4.3" fill="#0f0f0f" text-anchor="middle" font-weight="normal" font-family="Liberation Sans" >2880</text><text x="457.90" y="642.90" font-size="4.3" fill="#0f0f0f" text-anchor="middle" font-weight="normal" font-family="Liberation Sans" >5540</text><text x="497.70" y="642.90" font-size="4.3" fill="#0f0f0f" text-anchor="middle" font-weight="normal" font-family="Liberation Sans" >4210</text><text x="519.90" y="642.90" font-size="4.3" fill="#0f0f0f" text-anchor="middle" font-weight="normal" font-family="Liberation Sans" >1740</text><text x="538.00" y="642.90" font-size="4.3" fill="#0f0f0f" text-anchor="middle" font-weight="normal" font-family="Liberation Sans" >3120</text><text x="573.50" y="642.90" font-size="4.3" fill="#0f0f0f" text-anchor="middle" font-weight="normal" font-family="Liberation Sans" >6370</text><text x="427.50" y="652.40" font-size="4.3" fill="#0f0f0f" text-anchor="middle" font-weight="normal" font-family="Liberation Sans" >55720</text><text x="437.00" y="642.90" font-size="4" fill="#232323" text-anchor="middle" font-weight="normal" font-family="Liberation Sans" >450</text><text x="480.50" y="642.90" font-size="4" fill="#232323" text-anchor="middle" font-weight="normal" font-family="Liberation Sans" >430</text><circle cx="181.70" cy="664.30" r="5.800" fill="#808080" stroke="#232323" stroke-width=".6"/><text x="181.70" y="666.40" font-size="5.8" fill="#1a1a1a" text-anchor="middle" font-weight="normal" font-family="Liberation Sans" >15</text><circle cx="229.00" cy="664.30" r="5.800" fill="#808080" stroke="#232323" stroke-width=".6"/><text x="229.00" y="666.40" font-size="5.8" fill="#1a1a1a" text-anchor="middle" font-weight="normal" font-family="Liberation Sans" >14</text><circle cx="252.70" cy="664.30" r="5.800" fill="#808080" stroke="#232323" stroke-width=".6"/><text x="252.70" y="666.40" font-size="5.8" fill="#1a1a1a" text-anchor="middle" font-weight="normal" font-family="Liberation Sans" >13</text><circle cx="300.00" cy="664.30" r="5.800" fill="#808080" stroke="#232323" stroke-width=".6"/><text x="300.00" y="666.40" font-size="5.8" fill="#1a1a1a" text-anchor="middle" font-weight="normal" font-family="Liberation Sans" >12</text><circle cx="345.00" cy="664.30" r="5.800" fill="#808080" stroke="#232323" stroke-width=".6"/><text x="345.00" y="666.40" font-size="5.8" fill="#1a1a1a" text-anchor="middle" font-weight="normal" font-family="Liberation Sans" >11</text><circle cx="389.30" cy="664.30" r="5.800" fill="#808080" stroke="#232323" stroke-width=".6"/><text x="389.30" y="666.40" font-size="5.8" fill="#1a1a1a" text-anchor="middle" font-weight="normal" font-family="Liberation Sans" >10</text><circle cx="413.00" cy="664.30" r="5.800" fill="#808080" stroke="#232323" stroke-width=".6"/><text x="413.00" y="666.40" font-size="5.8" fill="#1a1a1a" text-anchor="middle" font-weight="normal" font-family="Liberation Sans" >9</text><circle cx="434.20" cy="664.30" r="5.800" fill="#808080" stroke="#232323" stroke-width=".6"/><text x="434.20" y="666.40" font-size="5.8" fill="#1a1a1a" text-anchor="middle" font-weight="normal" font-family="Liberation Sans" >8</text><circle cx="446.30" cy="664.30" r="5.800" fill="#808080" stroke="#232323" stroke-width=".6"/><text x="446.30" y="666.40" font-size="5.8" fill="#1a1a1a" text-anchor="middle" font-weight="normal" font-family="Liberation Sans" >7</text><circle cx="469.50" cy="664.30" r="5.800" fill="#808080" stroke="#232323" stroke-width=".6"/><text x="469.50" y="666.40" font-size="5.8" fill="#1a1a1a" text-anchor="middle" font-weight="normal" font-family="Liberation Sans" >6</text><circle cx="482.00" cy="664.30" r="5.800" fill="#808080" stroke="#232323" stroke-width=".6"/><text x="482.00" y="666.40" font-size="5.8" fill="#1a1a1a" text-anchor="middle" font-weight="normal" font-family="Liberation Sans" >5</text><circle cx="513.40" cy="664.30" r="5.800" fill="#808080" stroke="#232323" stroke-width=".6"/><text x="513.40" y="666.40" font-size="5.8" fill="#1a1a1a" text-anchor="middle" font-weight="normal" font-family="Liberation Sans" >4</text><circle cx="526.40" cy="664.30" r="5.800" fill="#808080" stroke="#232323" stroke-width=".6"/><text x="526.40" y="666.40" font-size="5.8" fill="#1a1a1a" text-anchor="middle" font-weight="normal" font-family="Liberation Sans" >3</text><circle cx="549.60" cy="664.30" r="5.800" fill="#808080" stroke="#232323" stroke-width=".6"/><text x="549.60" y="666.40" font-size="5.8" fill="#1a1a1a" text-anchor="middle" font-weight="normal" font-family="Liberation Sans" >2</text><circle cx="597.40" cy="664.30" r="5.800" fill="#808080" stroke="#232323" stroke-width=".6"/><text x="597.40" y="666.40" font-size="5.8" fill="#1a1a1a" text-anchor="middle" font-weight="normal" font-family="Liberation Sans" >1</text><rect x="649" y="177" width="298.80" height="168.30" fill="none" stroke="#000000" stroke-width="1"/><path d="M671.60 177.00L671.60 345.30" stroke="#000000" stroke-width="0.7" fill="none" /><path d="M745.50 177.00L745.50 345.30" stroke="#000000" stroke-width="0.7" fill="none" /><path d="M820.30 177.00L820.30 345.30" stroke="#000000" stroke-width="0.7" fill="none" /><path d="M910.30 177.00L910.30 345.30" stroke="#000000" stroke-width="0.7" fill="none" /><path d="M649.00 199.00L947.80 199.00" stroke="#1a1a1a" stroke-width="0.8" fill="none" /><path d="M649.00 225.50L947.80 225.50" stroke="#1a1a1a" stroke-width="0.5" fill="none" /><path d="M649.00 251.40L947.80 251.40" stroke="#1a1a1a" stroke-width="0.5" fill="none" /><path d="M649.00 264.60L947.80 264.60" stroke="#1a1a1a" stroke-width="0.5" fill="none" /><path d="M649.00 276.00L947.80 276.00" stroke="#1a1a1a" stroke-width="0.5" fill="none" /><path d="M649.00 295.40L947.80 295.40" stroke="#1a1a1a" stroke-width="0.5" fill="none" /><path d="M649.00 308.60L947.80 308.60" stroke="#1a1a1a" stroke-width="0.5" fill="none" /><path d="M649.00 320.70L947.80 320.70" stroke="#1a1a1a" stroke-width="0.5" fill="none" /><path d="M649.00 333.00L947.80 333.00" stroke="#1a1a1a" stroke-width="0.5" fill="none" /><text x="798.20" y="174.40" font-size="10.5" fill="#0f0f0f" text-anchor="middle" font-weight="normal" font-family="Liberation Sans" textLength="118.300" lengthAdjust="spacingAndGlyphs">Ведомость наружной отделки</text><text x="660.30" y="186.50" font-size="4.3" fill="#121212" text-anchor="middle" font-weight="normal" font-family="Liberation Sans" >Поз.</text><text x="660.30" y="192.50" font-size="4.3" fill="#121212" text-anchor="middle" font-weight="normal" font-family="Liberation Sans" >отделки</text><text x="708.50" y="190.50" font-size="4.3" fill="#121212" text-anchor="middle" font-weight="normal" font-family="Liberation Sans" >Наименование элемента фасада</text><text x="783.00" y="190.50" font-size="4.3" fill="#121212" text-anchor="middle" font-weight="normal" font-family="Liberation Sans" >Наименование материала отделки</text><text x="865.30" y="184.50" font-size="4.3" fill="#121212" text-anchor="middle" font-weight="normal" font-family="Liberation Sans" >Наименование и номер эталона цвета</text><text x="865.30" y="190.30" font-size="4.3" fill="#121212" text-anchor="middle" font-weight="normal" font-family="Liberation Sans" >эталона цвета или</text><text x="865.30" y="196.10" font-size="4.3" fill="#121212" text-anchor="middle" font-weight="normal" font-family="Liberation Sans" >образец колера</text><text x="929.00" y="190.50" font-size="4.3" fill="#121212" text-anchor="middle" font-weight="normal" font-family="Liberation Sans" >Площадь</text><text x="660.30" y="213.75" font-size="4.3" fill="#121212" text-anchor="middle" font-weight="normal" font-family="Liberation Sans" >1</text><text x="673.00" y="213.75" font-size="4.3" fill="#121212" text-anchor="start" font-weight="normal" font-family="Liberation Sans" >Стены</text><text x="746.80" y="204.90" font-size="4.3" fill="#121212" text-anchor="start" font-weight="normal" font-family="Liberation Sans" >Кирпич пустотелый лицевой</text><text x="746.80" y="210.80" font-size="4.3" fill="#121212" text-anchor="start" font-weight="normal" font-family="Liberation Sans" >колотый грубый "Альтаир".</text><text x="746.80" y="216.70" font-size="4.3" fill="#121212" text-anchor="start" font-weight="normal" font-family="Liberation Sans" >Утеплитель KNAUF INSULATION</text><text x="746.80" y="222.60" font-size="4.3" fill="#121212" text-anchor="start" font-weight="normal" font-family="Liberation Sans" >ПРОФ TS 0.34 t=100 мм</text><text x="865.30" y="213.75" font-size="4.3" fill="#121212" text-anchor="middle" font-weight="normal" font-family="Liberation Sans" >Цвет - "Гранат"</text><text x="929.00" y="213.75" font-size="4.3" fill="#121212" text-anchor="middle" font-weight="normal" font-family="Liberation Sans" >2468,22 м²</text><text x="660.30" y="239.95" font-size="4.3" fill="#121212" text-anchor="middle" font-weight="normal" font-family="Liberation Sans" >2</text><text x="673.00" y="239.95" font-size="4.3" fill="#121212" text-anchor="start" font-weight="normal" font-family="Liberation Sans" >Стены</text><text x="746.80" y="231.10" font-size="4.3" fill="#121212" text-anchor="start" font-weight="normal" font-family="Liberation Sans" >Кирпич пустотелый лицевой</text><text x="746.80" y="237.00" font-size="4.3" fill="#121212" text-anchor="start" font-weight="normal" font-family="Liberation Sans" >гладкий "Альтаир". Утеплитель</text><text x="746.80" y="242.90" font-size="4.3" fill="#121212" text-anchor="start" font-weight="normal" font-family="Liberation Sans" >KNAUF INSULATION ПРОФ TS 0.34</text><text x="746.80" y="248.80" font-size="4.3" fill="#121212" text-anchor="start" font-weight="normal" font-family="Liberation Sans" >t=100 мм</text><text x="865.30" y="239.95" font-size="4.3" fill="#121212" text-anchor="middle" font-weight="normal" font-family="Liberation Sans" >Цвет - "Глясса"</text><text x="929.00" y="239.95" font-size="4.3" fill="#121212" text-anchor="middle" font-weight="normal" font-family="Liberation Sans" >626,54 м²</text><text x="660.30" y="259.50" font-size="4.3" fill="#121212" text-anchor="middle" font-weight="normal" font-family="Liberation Sans" >3</text><text x="673.00" y="259.50" font-size="4.3" fill="#121212" text-anchor="start" font-weight="normal" font-family="Liberation Sans" >Участки стен</text><text x="746.80" y="256.55" font-size="4.3" fill="#121212" text-anchor="start" font-weight="normal" font-family="Liberation Sans" >Штукатурка по утеплителю</text><text x="746.80" y="262.45" font-size="4.3" fill="#121212" text-anchor="start" font-weight="normal" font-family="Liberation Sans" >"Технофас Оптима" t=130 мм</text><text x="865.30" y="259.50" font-size="4.3" fill="#121212" text-anchor="middle" font-weight="normal" font-family="Liberation Sans" >RAL 9011 (графитно-черный)</text><text x="929.00" y="259.50" font-size="4.3" fill="#121212" text-anchor="middle" font-weight="normal" font-family="Liberation Sans" >684,99 м²</text><text x="660.30" y="271.80" font-size="4.3" fill="#121212" text-anchor="middle" font-weight="normal" font-family="Liberation Sans" >4</text><text x="673.00" y="271.80" font-size="4.3" fill="#121212" text-anchor="start" font-weight="normal" font-family="Liberation Sans" >Участки стен</text><text x="746.80" y="271.80" font-size="4.3" fill="#121212" text-anchor="start" font-weight="normal" font-family="Liberation Sans" >Штукатурка жидкий гранит</text><text x="865.30" y="271.80" font-size="4.3" fill="#121212" text-anchor="middle" font-weight="normal" font-family="Liberation Sans" >Цвет - серый</text><text x="929.00" y="271.80" font-size="4.3" fill="#121212" text-anchor="middle" font-weight="normal" font-family="Liberation Sans" >285,24 м²</text><text x="660.30" y="287.20" font-size="4.3" fill="#121212" text-anchor="middle" font-weight="normal" font-family="Liberation Sans" >5</text><text x="673.00" y="287.20" font-size="4.3" fill="#121212" text-anchor="start" font-weight="normal" font-family="Liberation Sans" >Цоколь</text><text x="746.80" y="281.30" font-size="4.3" fill="#121212" text-anchor="start" font-weight="normal" font-family="Liberation Sans" >Штукатурка по утеплителю</text><text x="746.80" y="287.20" font-size="4.3" fill="#121212" text-anchor="start" font-weight="normal" font-family="Liberation Sans" >"ТЕХНОНИКОЛЬ CARBON PROF"</text><text x="746.80" y="293.10" font-size="4.3" fill="#121212" text-anchor="start" font-weight="normal" font-family="Liberation Sans" >t=80 мм</text><text x="865.30" y="287.20" font-size="4.3" fill="#121212" text-anchor="middle" font-weight="normal" font-family="Liberation Sans" >RAL 9011 (графитно-черный)</text><text x="929.00" y="287.20" font-size="4.3" fill="#121212" text-anchor="middle" font-weight="normal" font-family="Liberation Sans" >1063,63 м²</text><text x="660.30" y="303.50" font-size="4.3" fill="#121212" text-anchor="middle" font-weight="normal" font-family="Liberation Sans" >6</text><text x="673.00" y="303.50" font-size="4.3" fill="#121212" text-anchor="start" font-weight="normal" font-family="Liberation Sans" >Окна</text><text x="746.80" y="300.55" font-size="4.3" fill="#121212" text-anchor="start" font-weight="normal" font-family="Liberation Sans" >Окна и ПВХ переплетах с</text><text x="746.80" y="306.45" font-size="4.3" fill="#121212" text-anchor="start" font-weight="normal" font-family="Liberation Sans" >ламинацией</text><text x="865.30" y="303.50" font-size="4.3" fill="#121212" text-anchor="middle" font-weight="normal" font-family="Liberation Sans" >RAL 9011 (графитно-черный)</text><text x="929.00" y="303.50" font-size="4.3" fill="#121212" text-anchor="middle" font-weight="normal" font-family="Liberation Sans" >4165,65 м²</text><text x="660.30" y="316.15" font-size="4.3" fill="#121212" text-anchor="middle" font-weight="normal" font-family="Liberation Sans" >7</text><text x="673.00" y="316.15" font-size="4.3" fill="#121212" text-anchor="start" font-weight="normal" font-family="Liberation Sans" >Витражи</text><text x="746.80" y="316.15" font-size="4.3" fill="#121212" text-anchor="start" font-weight="normal" font-family="Liberation Sans" >Витражи алюминиевые</text><text x="865.30" y="316.15" font-size="4.3" fill="#121212" text-anchor="middle" font-weight="normal" font-family="Liberation Sans" >RAL 9011 (графитно-черный)</text><text x="929.00" y="316.15" font-size="4.3" fill="#121212" text-anchor="middle" font-weight="normal" font-family="Liberation Sans" >196,11 м²</text><text x="660.30" y="328.35" font-size="4.3" fill="#121212" text-anchor="middle" font-weight="normal" font-family="Liberation Sans" >8</text><text x="673.00" y="328.35" font-size="4.3" fill="#121212" text-anchor="start" font-weight="normal" font-family="Liberation Sans" >Наружные двери</text><text x="746.80" y="325.40" font-size="4.3" fill="#121212" text-anchor="start" font-weight="normal" font-family="Liberation Sans" >Двери утепленные алюминиевые,</text><text x="746.80" y="331.30" font-size="4.3" fill="#121212" text-anchor="start" font-weight="normal" font-family="Liberation Sans" >остекленные</text><text x="865.30" y="328.35" font-size="4.3" fill="#121212" text-anchor="middle" font-weight="normal" font-family="Liberation Sans" >RAL 9011 (графитно-черный)</text><text x="929.00" y="328.35" font-size="4.3" fill="#121212" text-anchor="middle" font-weight="normal" font-family="Liberation Sans" >283,29 м²</text><text x="660.30" y="340.65" font-size="4.3" fill="#121212" text-anchor="middle" font-weight="normal" font-family="Liberation Sans" >9</text><text x="673.00" y="340.65" font-size="4.3" fill="#121212" text-anchor="start" font-weight="normal" font-family="Liberation Sans" >Водосточная система</text><text x="746.80" y="340.65" font-size="4.3" fill="#121212" text-anchor="start" font-weight="normal" font-family="Liberation Sans" >"Металл Профиль"</text><text x="865.30" y="340.65" font-size="4.3" fill="#121212" text-anchor="middle" font-weight="normal" font-family="Liberation Sans" >RAL 9011 (графитно-черный)</text><text x="929.00" y="340.65" font-size="4.3" fill="#121212" text-anchor="middle" font-weight="normal" font-family="Liberation Sans" >4,17 м²</text><path d="M671.40 688.48L768.70 688.48" stroke="#3d3d3d" stroke-width="0.35" fill="none" /><path d="M671.40 695.96L768.70 695.96" stroke="#3d3d3d" stroke-width="0.35" fill="none" /><path d="M671.40 703.44L768.70 703.44" stroke="#3d3d3d" stroke-width="0.35" fill="none" /><path d="M671.40 710.92L768.70 710.92" stroke="#3d3d3d" stroke-width="0.35" fill="none" /><path d="M671.40 718.40L768.70 718.40" stroke="#3d3d3d" stroke-width="0.35" fill="none" /><path d="M671.40 725.88L768.70 725.88" stroke="#3d3d3d" stroke-width="0.35" fill="none" /><path d="M671.40 733.36L768.70 733.36" stroke="#3d3d3d" stroke-width="0.35" fill="none" /><path d="M671.40 740.84L768.70 740.84" stroke="#3d3d3d" stroke-width="0.35" fill="none" /><path d="M671.40 748.32L768.70 748.32" stroke="#3d3d3d" stroke-width="0.35" fill="none" /><path d="M671.40 755.80L768.70 755.80" stroke="#3d3d3d" stroke-width="0.35" fill="none" /><path d="M686.60 681.00L686.60 718.30" stroke="#3d3d3d" stroke-width="0.45" fill="none" /><path d="M701.50 681.00L701.50 763.30" stroke="#151515" stroke-width="0.7" fill="none" /><path d="M716.60 681.00L716.60 718.30" stroke="#3d3d3d" stroke-width="0.45" fill="none" /><path d="M731.40 681.00L731.40 763.30" stroke="#3d3d3d" stroke-width="0.45" fill="none" /><path d="M753.40 681.00L753.40 763.30" stroke="#151515" stroke-width="0.7" fill="none" /><path d="M768.70 681.00L768.70 763.30" stroke="#151515" stroke-width="0.7" fill="none" /><path d="M671.4 763.3V681H768.7V718.300H671.4" fill="none" stroke="#151515" stroke-width=".75"/><path d="M671.40 711.00L768.70 711.00" stroke="#151515" stroke-width="0.65" fill="none" /><path d="M731.40 718.30L731.40 763.30" stroke="#3d3d3d" stroke-width="0.5" fill="none" /><path d="M768.700 681H947.5V763.3H671.4" fill="none" stroke="#3d3d3d" stroke-width=".6"/><path d="M768.70 696.30L947.50 696.30" stroke="#3d3d3d" stroke-width="0.6" fill="none" /><path d="M768.70 718.30L947.50 718.30" stroke="#3d3d3d" stroke-width="0.6" fill="none" /><path d="M768.70 741.00L947.50 741.00" stroke="#3d3d3d" stroke-width="0.6" fill="none" /><path d="M872.40 718.30L872.40 763.30" stroke="#3d3d3d" stroke-width="0.6" fill="none" /><path d="M895.40 718.30L895.40 741.00" stroke="#3d3d3d" stroke-width="0.6" fill="none" /><path d="M917.60 718.30L917.60 741.00" stroke="#3d3d3d" stroke-width="0.6" fill="none" /><path d="M872.40 726.00L947.50 726.00" stroke="#3d3d3d" stroke-width="0.35" fill="none" /><text x="858.00" y="692.30" font-size="7.3" fill="#0f0f0f" text-anchor="middle" font-weight="normal" font-family="Liberation Sans" textLength="39" lengthAdjust="spacingAndGlyphs">741-20-АР.ГЧ</text><text x="858.00" y="705.00" font-size="5.4" fill="#0f0f0f" text-anchor="middle" font-weight="normal" font-family="Liberation Sans" textLength="158" lengthAdjust="spacingAndGlyphs">Общеобразовательная школа на 825 мест учащихся в микрорайоне №2</text><text x="858.00" y="712.80" font-size="5.4" fill="#0f0f0f" text-anchor="middle" font-weight="normal" font-family="Liberation Sans" textLength="141" lengthAdjust="spacingAndGlyphs">Столичного жилого района в Индустриальном районе г. Ижевска</text><text x="884.00" y="724.00" font-size="4.3" fill="#0f0f0f" text-anchor="middle" font-weight="normal" font-family="Liberation Sans" >Стадия</text><text x="906.50" y="724.00" font-size="4.3" fill="#0f0f0f" text-anchor="middle" font-weight="normal" font-family="Liberation Sans" >Лист</text><text x="932.50" y="724.00" font-size="4.3" fill="#0f0f0f" text-anchor="middle" font-weight="normal" font-family="Liberation Sans" >Листов</text><text x="884.00" y="735.50" font-size="5" fill="#0f0f0f" text-anchor="middle" font-weight="normal" font-family="Liberation Sans" >П</text><text x="906.50" y="735.50" font-size="5" fill="#0f0f0f" text-anchor="middle" font-weight="normal" font-family="Liberation Sans" >2</text><text x="820.50" y="750.80" font-size="5.3" fill="#0f0f0f" text-anchor="middle" font-weight="normal" font-family="Liberation Sans" textLength="100" lengthAdjust="spacingAndGlyphs">Фасад 1-15. Фасад 15-1. Ведомость наружной</text><text x="820.50" y="758.30" font-size="5.3" fill="#0f0f0f" text-anchor="middle" font-weight="normal" font-family="Liberation Sans" textLength="17" lengthAdjust="spacingAndGlyphs">отделки</text><text x="912.00" y="753.50" font-size="4.4" fill="#0f0f0f" text-anchor="middle" font-weight="normal" font-family="Liberation Sans" textLength="48" lengthAdjust="spacingAndGlyphs">ООО "АСПЭК-Инжстрой"</text><text x="679.00" y="709.00" font-size="4" fill="#0f0f0f" text-anchor="middle" font-weight="normal" font-family="Liberation Sans" >5</text><text x="694.00" y="709.00" font-size="4" fill="#0f0f0f" text-anchor="middle" font-weight="normal" font-family="Liberation Sans" >-</text><text x="709.00" y="709.00" font-size="4" fill="#0f0f0f" text-anchor="middle" font-weight="normal" font-family="Liberation Sans" >Зам.</text><text x="724.00" y="709.00" font-size="4" fill="#0f0f0f" text-anchor="middle" font-weight="normal" font-family="Liberation Sans" >442-22</text><text x="761.00" y="709.00" font-size="4" fill="#0f0f0f" text-anchor="middle" font-weight="normal" font-family="Liberation Sans" >04.22</text><text x="679.00" y="716.50" font-size="4" fill="#0f0f0f" text-anchor="middle" font-weight="normal" font-family="Liberation Sans" >Изм.</text><text x="694.00" y="716.50" font-size="4" fill="#0f0f0f" text-anchor="middle" font-weight="normal" font-family="Liberation Sans" >Кол.уч.</text><text x="709.00" y="716.50" font-size="4" fill="#0f0f0f" text-anchor="middle" font-weight="normal" font-family="Liberation Sans" >Лист</text><text x="724.00" y="716.50" font-size="4" fill="#0f0f0f" text-anchor="middle" font-weight="normal" font-family="Liberation Sans" >№док.</text><text x="742.40" y="716.50" font-size="4" fill="#0f0f0f" text-anchor="middle" font-weight="normal" font-family="Liberation Sans" >Подп.</text><text x="761.00" y="716.50" font-size="4" fill="#0f0f0f" text-anchor="middle" font-weight="normal" font-family="Liberation Sans" >Дата</text><text x="672.50" y="724.00" font-size="4" fill="#0f0f0f" text-anchor="start" font-weight="normal" font-family="Liberation Sans" >Разработал</text><text x="703.00" y="724.00" font-size="4" fill="#0f0f0f" text-anchor="start" font-weight="normal" font-family="Liberation Sans" >Курбатов</text><text x="761.00" y="724.00" font-size="4" fill="#0f0f0f" text-anchor="middle" font-weight="normal" font-family="Liberation Sans" >04.22</text><text x="672.50" y="761.30" font-size="4" fill="#0f0f0f" text-anchor="start" font-weight="normal" font-family="Liberation Sans" >ГИП</text><text x="703.00" y="761.30" font-size="4" fill="#0f0f0f" text-anchor="start" font-weight="normal" font-family="Liberation Sans" >Родионов</text><text x="761.00" y="761.30" font-size="4" fill="#0f0f0f" text-anchor="middle" font-weight="normal" font-family="Liberation Sans" >04.22</text><rect x="124.500" y="171.500" width="524" height="234" fill="#ffffff"/><g clip-path="url(#selclip)"><path d="M180.00 334.00L180.00 386.50" stroke="#c4c4c4" stroke-width="0.35" fill="none" /><path d="M228.00 334.00L228.00 386.50" stroke="#c4c4c4" stroke-width="0.35" fill="none" /><path d="M251.40 334.00L251.40 386.50" stroke="#c4c4c4" stroke-width="0.35" fill="none" /><path d="M264.00 334.00L264.00 386.50" stroke="#c4c4c4" stroke-width="0.35" fill="none" /><path d="M295.00 334.00L295.00 386.50" stroke="#c4c4c4" stroke-width="0.35" fill="none" /><path d="M343.00 334.00L343.00 386.50" stroke="#c4c4c4" stroke-width="0.35" fill="none" /><path d="M364.80 334.00L364.80 386.50" stroke="#c4c4c4" stroke-width="0.35" fill="none" /><path d="M388.30 334.00L388.30 386.50" stroke="#c4c4c4" stroke-width="0.35" fill="none" /><path d="M432.60 334.00L432.60 386.50" stroke="#c4c4c4" stroke-width="0.35" fill="none" /><path d="M477.60 334.00L477.60 386.50" stroke="#c4c4c4" stroke-width="0.35" fill="none" /><path d="M525.00 334.00L525.00 386.50" stroke="#c4c4c4" stroke-width="0.35" fill="none" /><path d="M548.30 334.00L548.30 386.50" stroke="#c4c4c4" stroke-width="0.35" fill="none" /><path d="M595.90 334.00L595.90 386.50" stroke="#c4c4c4" stroke-width="0.35" fill="none" /><rect x="224.80" y="203.80" width="326.60" height="32.40" fill="#6b3427" /><rect x="177.00" y="236.00" width="423.00" height="95.50" fill="#6b3427" /><path d="M177 330.500H600V333.800H313L177 332.800z" fill="#1d1d20"/><path d="M251.50 204.00L251.50 236.00" stroke="#4f251b" stroke-width="0.4" fill="none" /><path d="M264.00 204.00L264.00 236.00" stroke="#4f251b" stroke-width="0.4" fill="none" /><path d="M290.50 204.00L290.50 236.00" stroke="#4f251b" stroke-width="0.4" fill="none" /><path d="M301.00 204.00L301.00 236.00" stroke="#4f251b" stroke-width="0.4" fill="none" /><path d="M312.00 204.00L312.00 236.00" stroke="#4f251b" stroke-width="0.4" fill="none" /><path d="M334.00 204.00L334.00 236.00" stroke="#4f251b" stroke-width="0.4" fill="none" /><path d="M347.00 204.00L347.00 236.00" stroke="#4f251b" stroke-width="0.4" fill="none" /><path d="M430.00 204.00L430.00 236.00" stroke="#4f251b" stroke-width="0.4" fill="none" /><path d="M441.60 204.00L441.60 236.00" stroke="#4f251b" stroke-width="0.4" fill="none" /><path d="M466.00 204.00L466.00 236.00" stroke="#4f251b" stroke-width="0.4" fill="none" /><path d="M478.00 204.00L478.00 236.00" stroke="#4f251b" stroke-width="0.4" fill="none" /><path d="M512.50 204.00L512.50 236.00" stroke="#4f251b" stroke-width="0.4" fill="none" /><path d="M228.00 236.00L228.00 331.00" stroke="#5a2b20" stroke-width="0.35" fill="none" /><path d="M251.50 236.00L251.50 331.00" stroke="#5a2b20" stroke-width="0.35" fill="none" /><path d="M512.50 236.00L512.50 331.00" stroke="#5a2b20" stroke-width="0.35" fill="none" /><path d="M548.30 236.00L548.30 331.00" stroke="#5a2b20" stroke-width="0.35" fill="none" /><rect x="347.00" y="204.00" width="15.30" height="9.30" fill="#26262a" /><rect x="368.00" y="204.00" width="15.40" height="32.00" fill="#26262a" /><rect x="393.00" y="204.00" width="15.10" height="32.00" fill="#26262a" /><rect x="414.50" y="204.00" width="15.50" height="32.00" fill="#26262a" /><rect x="368.70" y="228.30" width="6.60" height="7.40" fill="#9db7dc" /><rect x="376.50" y="228.30" width="6.60" height="7.40" fill="#9db7dc" /><rect x="393.40" y="228.30" width="6.90" height="7.40" fill="#9db7dc" /><rect x="402.20" y="228.30" width="5.50" height="7.40" fill="#9db7dc" /><rect x="414.90" y="228.30" width="6.60" height="7.40" fill="#9db7dc" /><rect x="422.70" y="228.30" width="6.60" height="7.40" fill="#9db7dc" /><path d="M334 213.300H368V236" stroke="#2a1510" stroke-width=".5" fill="none"/><path d="M312.00 218.50L334.00 213.30" stroke="#333" stroke-width="0.4" fill="none" /><text x="322.50" y="219.50" font-size="4" fill="#111" text-anchor="middle" font-weight="normal" font-family="Liberation Sans" >+15.000</text><rect x="236.50" y="236.00" width="15.50" height="15.20" fill="#26262a" /><rect x="236.50" y="250.60" width="15.50" height="19.60" fill="#1e1e22" /><rect x="237.20" y="251.40" width="14.10" height="3.60" fill="#9db7dc" /><rect x="237.20" y="256.20" width="6.35" height="12.80" fill="#9db7dc" /><rect x="244.95" y="256.20" width="6.35" height="12.80" fill="#9db7dc" /><rect x="238.00" y="257.40" width="4.75" height="10.40" fill="#c3cfdd" /><path d="M240.9 257.8h.7M241.8 260.7h.7M242.1 266.5h.7M238.9 261.6h.7M238.9 265.1h.7M238.7 258.4h.7M238.8 266.1h.7M239.3 260.9h.7M240.2 263.1h.7M240.0 267.0h.7M239.7 262.4h.7M241.9 260.1h.7M239.0 265.9h.7M239.6 266.4h.7M241.7 261.4h.7M239.7 258.7h.7M241.9 262.0h.7M239.7 259.4h.7M239.2 266.3h.7M238.8 263.1h.7M240.9 262.8h.7M240.4 261.6h.7M239.1 265.7h.7M242.0 263.2h.7M239.3 266.6h.7M239.1 259.4h.7M240.9 265.8h.7M240.7 258.8h.7M242.4 259.2h.7M239.7 267.4h.7M241.6 265.1h.7M238.6 266.0h.7M240.0 257.8h.7M241.6 266.8h.7M238.5 262.2h.7M242.0 261.0h.7M239.6 265.3h.7M240.1 267.5h.7M241.9 266.1h.7" stroke="#4f6480" stroke-width=".7" fill="none"/><rect x="236.50" y="275.20" width="15.50" height="4.20" fill="#26262a" /><rect x="236.50" y="279.00" width="15.50" height="20.00" fill="#1e1e22" /><rect x="237.20" y="279.80" width="14.10" height="3.60" fill="#9db7dc" /><rect x="237.20" y="284.60" width="6.35" height="13.20" fill="#9db7dc" /><rect x="244.95" y="284.60" width="6.35" height="13.20" fill="#9db7dc" /><rect x="238.00" y="285.80" width="4.75" height="10.80" fill="#c3cfdd" /><path d="M241.2 288.1h.7M241.2 292.0h.7M240.3 291.9h.7M239.6 288.1h.7M242.1 289.8h.7M238.7 296.1h.7M240.4 293.0h.7M239.7 287.6h.7M239.7 294.6h.7M239.4 295.4h.7M239.6 295.2h.7M239.0 290.6h.7M238.8 287.6h.7M240.5 289.8h.7M240.5 288.3h.7M239.6 289.4h.7M242.0 286.9h.7M240.0 294.8h.7M240.7 288.7h.7M242.4 287.2h.7M238.9 286.3h.7M240.1 294.9h.7M239.5 289.0h.7M241.6 286.9h.7M238.4 292.9h.7M238.7 291.5h.7M238.9 292.2h.7M241.8 290.7h.7M239.4 292.5h.7M241.2 286.7h.7M239.3 289.9h.7M240.4 288.9h.7M241.0 288.7h.7M242.1 289.7h.7M239.2 286.9h.7M238.8 288.3h.7M242.0 290.3h.7M240.1 295.9h.7M242.3 293.9h.7M239.3 289.4h.7M240.4 288.7h.7" stroke="#4f6480" stroke-width=".7" fill="none"/><rect x="258.30" y="236.00" width="7.60" height="15.20" fill="#26262a" /><rect x="258.30" y="250.60" width="7.60" height="19.60" fill="#1e1e22" /><rect x="259.00" y="251.40" width="6.20" height="3.60" fill="#9db7dc" /><rect x="259.00" y="256.20" width="6.20" height="12.80" fill="#9db7dc" /><rect x="259.90" y="257.40" width="4.40" height="10.40" fill="#c3cfdd" /><path d="M261.5 259.8h.7M261.1 265.0h.7M262.5 262.1h.7M262.0 263.7h.7M262.8 257.9h.7M263.4 262.2h.7M261.5 267.1h.7M263.1 261.1h.7M260.3 262.0h.7M261.9 261.4h.7M260.6 263.4h.7M261.2 265.2h.7M262.2 260.6h.7M263.3 262.1h.7M260.5 260.4h.7M260.4 261.9h.7M263.7 266.9h.7M262.7 259.2h.7M261.1 259.7h.7M261.6 264.0h.7M260.3 262.5h.7M261.8 264.2h.7M263.3 261.6h.7M262.5 260.4h.7M261.9 263.9h.7M260.4 262.7h.7M262.1 259.5h.7M261.1 265.8h.7M261.5 259.6h.7M261.3 262.8h.7M261.7 261.1h.7M261.4 259.8h.7M262.1 263.6h.7M260.5 263.5h.7M261.4 267.3h.7M263.8 259.0h.7" stroke="#4f6480" stroke-width=".7" fill="none"/><rect x="258.30" y="275.20" width="7.60" height="4.20" fill="#26262a" /><rect x="258.30" y="279.00" width="7.60" height="20.00" fill="#1e1e22" /><rect x="259.00" y="279.80" width="6.20" height="3.60" fill="#9db7dc" /><rect x="259.00" y="284.60" width="6.20" height="13.20" fill="#9db7dc" /><rect x="259.90" y="285.80" width="4.40" height="10.80" fill="#c3cfdd" /><path d="M262.8 289.6h.7M260.6 295.0h.7M263.7 294.1h.7M262.6 296.1h.7M262.3 293.0h.7M262.7 294.9h.7M263.5 289.2h.7M261.0 291.7h.7M262.4 289.7h.7M263.5 294.8h.7M262.8 291.6h.7M262.8 288.1h.7M263.3 287.4h.7M263.6 292.5h.7M261.3 288.0h.7M262.5 290.8h.7M262.8 287.1h.7M263.5 290.5h.7M261.9 293.6h.7M262.5 290.6h.7M261.3 290.9h.7M260.3 288.7h.7M263.3 287.3h.7M260.5 294.8h.7M261.6 291.5h.7M262.4 293.4h.7M261.4 294.0h.7M260.2 294.7h.7M261.4 292.5h.7M261.4 293.7h.7M261.6 292.2h.7M261.4 294.6h.7M263.2 288.2h.7M263.1 295.7h.7M261.1 288.0h.7M263.7 295.9h.7M260.7 294.0h.7M263.7 288.8h.7" stroke="#4f6480" stroke-width=".7" fill="none"/><rect x="271.40" y="236.00" width="16.20" height="15.20" fill="#26262a" /><rect x="271.40" y="250.60" width="16.20" height="19.60" fill="#1e1e22" /><rect x="272.10" y="251.40" width="14.80" height="3.60" fill="#9db7dc" /><rect x="272.10" y="256.20" width="6.70" height="12.80" fill="#9db7dc" /><rect x="280.20" y="256.20" width="6.70" height="12.80" fill="#9db7dc" /><rect x="272.90" y="257.40" width="5.10" height="10.40" fill="#c3cfdd" /><path d="M276.7 260.6h.7M276.7 262.7h.7M275.3 258.9h.7M276.1 264.6h.7M274.5 258.1h.7M273.6 260.2h.7M277.7 265.0h.7M277.2 265.0h.7M273.8 261.5h.7M277.5 266.0h.7M277.7 265.7h.7M276.4 265.2h.7M277.3 261.9h.7M273.4 260.8h.7M273.3 260.4h.7M275.9 260.4h.7M274.3 258.6h.7M274.8 262.8h.7M275.9 266.9h.7M273.5 260.2h.7M273.5 266.8h.7M276.0 264.1h.7M276.9 257.7h.7M277.3 261.0h.7M276.0 261.7h.7M276.6 260.7h.7M274.4 260.1h.7M276.5 262.2h.7M273.9 261.2h.7M275.8 261.3h.7M275.9 266.0h.7M276.1 265.6h.7M274.6 266.2h.7M277.4 262.9h.7M273.3 258.5h.7M276.6 266.2h.7M276.5 262.7h.7M275.6 258.8h.7M275.9 267.5h.7M274.1 263.7h.7M277.0 264.1h.7M274.8 260.0h.7" stroke="#4f6480" stroke-width=".7" fill="none"/><rect x="271.40" y="275.20" width="16.20" height="4.20" fill="#26262a" /><rect x="271.40" y="279.00" width="16.20" height="20.00" fill="#1e1e22" /><rect x="272.10" y="279.80" width="14.80" height="3.60" fill="#9db7dc" /><rect x="272.10" y="284.60" width="6.70" height="13.20" fill="#9db7dc" /><rect x="280.20" y="284.60" width="6.70" height="13.20" fill="#9db7dc" /><rect x="272.90" y="285.80" width="5.10" height="10.80" fill="#c3cfdd" /><path d="M276.5 295.6h.7M277.1 290.2h.7M276.6 294.4h.7M274.9 293.8h.7M274.9 288.1h.7M273.2 293.5h.7M276.6 286.5h.7M273.5 289.4h.7M274.1 293.6h.7M274.1 292.1h.7M275.7 289.7h.7M277.0 290.6h.7M275.5 292.9h.7M275.0 288.0h.7M277.5 293.8h.7M275.7 291.2h.7M276.0 289.1h.7M273.5 291.7h.7M277.2 287.1h.7M277.6 289.9h.7M277.7 293.9h.7M274.4 288.3h.7M277.2 296.1h.7M276.8 292.1h.7M275.6 294.1h.7M276.9 294.6h.7M274.5 294.5h.7M277.5 292.0h.7M273.2 288.0h.7M276.1 290.4h.7M277.3 292.6h.7M276.3 287.6h.7M275.6 293.3h.7M277.3 295.3h.7M274.4 291.2h.7M277.6 287.0h.7M273.5 288.0h.7M276.5 289.4h.7M276.4 294.5h.7M276.8 286.5h.7M276.3 294.2h.7M276.4 294.9h.7M276.9 292.4h.7M277.1 291.7h.7" stroke="#4f6480" stroke-width=".7" fill="none"/><rect x="293.00" y="236.00" width="7.70" height="15.20" fill="#26262a" /><rect x="293.00" y="250.60" width="7.70" height="19.60" fill="#1e1e22" /><rect x="293.70" y="251.40" width="6.30" height="3.60" fill="#9db7dc" /><rect x="293.70" y="256.20" width="6.30" height="12.80" fill="#9db7dc" /><rect x="294.60" y="257.40" width="4.50" height="10.40" fill="#c3cfdd" /><path d="M295.3 260.5h.7M298.5 261.0h.7M296.7 266.3h.7M297.6 265.4h.7M296.7 262.7h.7M295.2 259.7h.7M295.5 263.0h.7M297.0 258.4h.7M297.4 258.7h.7M296.4 258.0h.7M296.8 259.1h.7M298.6 261.2h.7M298.1 262.0h.7M296.2 265.9h.7M296.0 262.7h.7M297.4 267.4h.7M297.6 258.2h.7M296.7 267.0h.7M298.2 261.3h.7M295.4 260.3h.7M297.9 259.5h.7M298.4 260.3h.7M297.6 264.5h.7M295.8 262.8h.7M297.4 260.3h.7M297.0 263.8h.7M298.6 260.5h.7M295.6 262.7h.7M297.2 262.5h.7M298.5 259.7h.7M296.9 262.3h.7M295.7 262.2h.7M296.7 261.4h.7M297.9 267.4h.7M298.7 259.8h.7M296.4 267.0h.7M295.2 258.6h.7" stroke="#4f6480" stroke-width=".7" fill="none"/><rect x="293.00" y="275.20" width="7.70" height="4.20" fill="#26262a" /><rect x="293.00" y="279.00" width="7.70" height="20.00" fill="#1e1e22" /><rect x="293.70" y="279.80" width="6.30" height="3.60" fill="#9db7dc" /><rect x="293.70" y="284.60" width="6.30" height="13.20" fill="#9db7dc" /><rect x="294.60" y="285.80" width="4.50" height="10.80" fill="#c3cfdd" /><path d="M295.2 295.9h.7M296.9 290.5h.7M295.3 295.1h.7M298.8 293.1h.7M298.5 291.9h.7M296.1 287.9h.7M296.1 287.6h.7M296.3 286.6h.7M295.1 295.3h.7M298.2 294.4h.7M296.3 290.7h.7M297.0 294.1h.7M296.1 291.3h.7M297.0 294.7h.7M296.3 286.1h.7M296.5 295.1h.7M295.6 292.5h.7M295.4 288.9h.7M297.3 287.1h.7M296.7 292.1h.7M296.4 293.8h.7M298.2 288.9h.7M297.9 293.8h.7M297.2 292.1h.7M297.1 293.6h.7M297.6 288.9h.7M297.4 293.4h.7M296.7 295.2h.7M296.1 291.7h.7M297.1 292.3h.7M295.6 292.9h.7M295.4 291.5h.7M296.7 293.2h.7M298.2 296.1h.7M295.8 295.4h.7M296.7 291.2h.7M295.1 294.9h.7M295.8 288.9h.7" stroke="#4f6480" stroke-width=".7" fill="none"/><rect x="319.30" y="236.00" width="15.70" height="15.20" fill="#26262a" /><rect x="319.30" y="250.60" width="15.70" height="19.60" fill="#1e1e22" /><rect x="320.00" y="251.40" width="14.30" height="3.60" fill="#9db7dc" /><rect x="320.00" y="256.20" width="6.45" height="12.80" fill="#9db7dc" /><rect x="327.85" y="256.20" width="6.45" height="12.80" fill="#9db7dc" /><rect x="320.80" y="257.40" width="4.85" height="10.40" fill="#c3cfdd" /><path d="M322.4 260.0h.7M322.3 260.5h.7M323.4 261.2h.7M324.3 266.8h.7M325.1 261.4h.7M324.0 264.9h.7M324.2 261.6h.7M321.9 265.1h.7M323.9 261.1h.7M323.9 258.4h.7M324.4 266.5h.7M325.2 258.8h.7M324.0 265.4h.7M321.7 263.7h.7M321.9 259.8h.7M321.2 260.5h.7M324.7 263.4h.7M324.5 267.2h.7M321.7 266.0h.7M324.9 264.1h.7M322.5 259.4h.7M323.0 261.3h.7M322.2 264.3h.7M323.8 260.2h.7M321.8 262.6h.7M324.1 264.2h.7M323.8 266.5h.7M324.3 262.0h.7M324.3 264.2h.7M322.5 259.3h.7M322.7 264.7h.7M324.3 260.7h.7M323.4 258.4h.7M323.6 262.1h.7M324.4 266.1h.7M321.3 267.2h.7M321.8 267.1h.7M325.3 259.9h.7M322.3 259.1h.7M325.0 265.1h.7" stroke="#4f6480" stroke-width=".7" fill="none"/><rect x="319.30" y="275.20" width="15.70" height="4.20" fill="#26262a" /><rect x="319.30" y="279.00" width="15.70" height="20.00" fill="#1e1e22" /><rect x="320.00" y="279.80" width="14.30" height="3.60" fill="#9db7dc" /><rect x="320.00" y="284.60" width="6.45" height="13.20" fill="#9db7dc" /><rect x="327.85" y="284.60" width="6.45" height="13.20" fill="#9db7dc" /><rect x="320.80" y="285.80" width="4.85" height="10.80" fill="#c3cfdd" /><path d="M325.2 294.3h.7M322.6 294.0h.7M322.6 289.5h.7M322.9 293.2h.7M322.4 291.8h.7M323.5 294.2h.7M323.1 290.4h.7M323.5 290.8h.7M324.2 287.2h.7M321.9 286.5h.7M322.9 294.8h.7M323.6 292.6h.7M325.1 294.5h.7M322.3 288.4h.7M323.4 288.4h.7M323.6 286.9h.7M322.8 293.5h.7M322.2 287.6h.7M324.3 288.1h.7M324.9 292.4h.7M324.9 291.5h.7M323.2 288.7h.7M321.3 295.8h.7M322.0 286.9h.7M325.1 291.6h.7M323.6 295.5h.7M324.2 288.7h.7M322.3 292.8h.7M324.0 288.4h.7M322.2 291.3h.7M321.4 294.3h.7M323.9 287.6h.7M323.6 292.1h.7M321.5 290.5h.7M324.5 290.7h.7M324.2 288.5h.7M325.3 292.9h.7M323.5 286.2h.7M322.6 286.1h.7M323.0 287.9h.7M322.1 289.2h.7" stroke="#4f6480" stroke-width=".7" fill="none"/><rect x="341.40" y="236.00" width="7.60" height="15.20" fill="#26262a" /><rect x="341.40" y="250.60" width="7.60" height="19.60" fill="#1e1e22" /><rect x="342.10" y="251.40" width="6.20" height="3.60" fill="#9db7dc" /><rect x="342.10" y="256.20" width="6.20" height="12.80" fill="#9db7dc" /><rect x="343.00" y="257.40" width="4.40" height="10.40" fill="#c3cfdd" /><path d="M343.8 260.5h.7M345.2 259.0h.7M345.4 267.0h.7M346.0 267.1h.7M343.7 264.2h.7M344.2 266.9h.7M345.2 264.8h.7M346.2 259.0h.7M343.7 265.6h.7M346.4 262.0h.7M343.4 257.9h.7M346.3 264.5h.7M344.7 264.3h.7M346.4 257.8h.7M346.1 267.3h.7M346.6 266.4h.7M345.0 263.6h.7M343.7 265.5h.7M345.8 261.7h.7M343.5 259.5h.7M344.8 266.7h.7M345.1 266.2h.7M344.0 260.2h.7M344.2 260.5h.7M346.3 261.3h.7M344.5 264.4h.7M345.0 266.3h.7M345.9 265.9h.7M344.9 261.6h.7M345.0 267.4h.7M346.9 263.3h.7M345.2 258.4h.7M346.6 263.7h.7M344.9 259.3h.7M345.1 264.6h.7M344.3 260.3h.7" stroke="#4f6480" stroke-width=".7" fill="none"/><rect x="341.40" y="275.20" width="7.60" height="4.20" fill="#26262a" /><rect x="341.40" y="279.00" width="7.60" height="20.00" fill="#1e1e22" /><rect x="342.10" y="279.80" width="6.20" height="3.60" fill="#9db7dc" /><rect x="342.10" y="284.60" width="6.20" height="13.20" fill="#9db7dc" /><rect x="343.00" y="285.80" width="4.40" height="10.80" fill="#c3cfdd" /><path d="M345.2 291.2h.7M343.3 286.7h.7M344.7 293.3h.7M344.8 286.3h.7M344.2 288.1h.7M346.2 288.4h.7M347.0 289.0h.7M344.0 286.3h.7M345.2 291.4h.7M346.3 292.9h.7M345.4 286.6h.7M346.8 288.6h.7M344.2 287.9h.7M345.5 292.8h.7M344.5 288.7h.7M343.3 292.2h.7M346.0 287.3h.7M344.2 293.8h.7M346.0 287.5h.7M347.1 293.4h.7M346.0 289.4h.7M347.0 290.6h.7M345.7 296.1h.7M346.5 287.9h.7M343.8 288.2h.7M343.8 295.1h.7M345.4 291.0h.7M344.7 291.2h.7M345.0 293.5h.7M344.9 294.9h.7M346.5 295.0h.7M346.1 287.9h.7M344.9 294.7h.7M344.7 291.9h.7M344.1 294.5h.7M344.6 289.8h.7M346.4 287.0h.7M343.3 290.4h.7" stroke="#4f6480" stroke-width=".7" fill="none"/><rect x="354.80" y="236.00" width="14.90" height="15.20" fill="#26262a" /><rect x="354.80" y="250.60" width="14.90" height="19.60" fill="#1e1e22" /><rect x="355.50" y="251.40" width="13.50" height="3.60" fill="#9db7dc" /><rect x="355.50" y="256.20" width="6.05" height="12.80" fill="#9db7dc" /><rect x="362.95" y="256.20" width="6.05" height="12.80" fill="#9db7dc" /><rect x="356.30" y="257.40" width="4.45" height="10.40" fill="#c3cfdd" /><path d="M358.3 258.8h.7M358.1 265.2h.7M360.0 266.7h.7M359.7 258.4h.7M358.0 262.1h.7M356.7 265.4h.7M357.7 265.3h.7M359.2 260.3h.7M357.9 262.1h.7M357.4 257.8h.7M358.2 259.9h.7M357.6 265.4h.7M359.5 261.7h.7M356.7 265.2h.7M357.6 258.7h.7M359.5 266.6h.7M357.6 263.0h.7M360.0 262.8h.7M357.9 259.2h.7M356.7 266.4h.7M359.7 259.5h.7M359.1 259.6h.7M359.5 261.4h.7M359.3 262.9h.7M356.9 263.3h.7M359.1 258.2h.7M356.7 260.3h.7M359.4 267.3h.7M358.3 266.1h.7M359.3 260.4h.7M358.3 266.0h.7M358.5 262.7h.7M359.4 259.2h.7M358.4 262.8h.7M358.8 264.5h.7M357.6 262.3h.7M358.4 258.7h.7" stroke="#4f6480" stroke-width=".7" fill="none"/><rect x="354.80" y="275.20" width="14.90" height="4.20" fill="#26262a" /><rect x="354.80" y="279.00" width="14.90" height="20.00" fill="#1e1e22" /><rect x="355.50" y="279.80" width="13.50" height="3.60" fill="#9db7dc" /><rect x="355.50" y="284.60" width="6.05" height="13.20" fill="#9db7dc" /><rect x="362.95" y="284.60" width="6.05" height="13.20" fill="#9db7dc" /><rect x="356.30" y="285.80" width="4.45" height="10.80" fill="#c3cfdd" /><path d="M359.6 295.9h.7M358.8 290.3h.7M358.0 290.7h.7M358.0 288.9h.7M360.3 289.8h.7M357.4 292.8h.7M356.6 289.7h.7M358.8 294.5h.7M357.8 286.6h.7M360.3 286.2h.7M358.2 291.3h.7M360.4 289.7h.7M357.5 289.0h.7M358.0 287.6h.7M360.1 291.3h.7M359.4 288.9h.7M359.2 295.4h.7M357.5 295.8h.7M357.7 293.4h.7M360.2 290.8h.7M360.2 290.1h.7M358.3 295.5h.7M358.9 286.6h.7M357.2 291.6h.7M357.9 286.7h.7M359.7 289.4h.7M360.1 289.8h.7M357.3 290.4h.7M359.8 295.3h.7M358.8 288.7h.7M358.6 288.8h.7M358.0 286.2h.7M356.7 295.6h.7M359.6 288.6h.7M359.0 286.5h.7M359.8 292.4h.7M359.4 290.5h.7M358.3 294.4h.7" stroke="#4f6480" stroke-width=".7" fill="none"/><rect x="375.50" y="236.00" width="7.90" height="15.20" fill="#26262a" /><rect x="375.50" y="250.60" width="7.90" height="19.60" fill="#1e1e22" /><rect x="376.20" y="251.40" width="6.50" height="3.60" fill="#9db7dc" /><rect x="376.20" y="256.20" width="6.50" height="12.80" fill="#9db7dc" /><rect x="377.10" y="257.40" width="4.70" height="10.40" fill="#c3cfdd" /><path d="M378.7 258.5h.7M377.9 266.7h.7M378.5 258.3h.7M379.7 259.0h.7M379.1 265.3h.7M378.4 261.8h.7M381.2 266.2h.7M381.0 258.1h.7M381.4 263.2h.7M378.0 267.4h.7M377.9 267.4h.7M377.5 258.5h.7M379.3 263.7h.7M379.8 265.7h.7M377.8 264.8h.7M378.7 267.1h.7M380.0 264.5h.7M377.9 266.7h.7M378.6 259.7h.7M379.1 265.4h.7M378.7 262.3h.7M379.9 260.1h.7M377.9 261.7h.7M380.3 264.3h.7M378.3 264.1h.7M380.8 264.6h.7M378.2 258.1h.7M381.4 264.7h.7M378.5 265.0h.7M379.8 263.9h.7M378.9 264.2h.7M379.0 261.5h.7M378.7 264.9h.7M380.9 260.6h.7M377.7 260.2h.7M380.5 261.2h.7M377.4 266.0h.7M379.2 258.4h.7M380.5 262.7h.7" stroke="#4f6480" stroke-width=".7" fill="none"/><rect x="375.50" y="275.20" width="7.90" height="4.20" fill="#26262a" /><rect x="375.50" y="279.00" width="7.90" height="20.00" fill="#1e1e22" /><rect x="376.20" y="279.80" width="6.50" height="3.60" fill="#9db7dc" /><rect x="376.20" y="284.60" width="6.50" height="13.20" fill="#9db7dc" /><rect x="377.10" y="285.80" width="4.70" height="10.80" fill="#c3cfdd" /><path d="M380.9 294.6h.7M380.8 295.1h.7M379.0 294.4h.7M379.4 292.7h.7M378.3 292.5h.7M377.7 294.9h.7M378.1 291.9h.7M380.9 294.5h.7M380.9 290.4h.7M377.7 296.1h.7M378.7 294.9h.7M379.1 290.6h.7M379.6 291.7h.7M380.6 292.1h.7M378.1 291.5h.7M377.8 294.8h.7M378.1 289.8h.7M379.8 289.6h.7M381.1 294.2h.7M378.8 290.5h.7M380.4 291.3h.7M380.0 289.5h.7M379.7 292.1h.7M381.1 289.7h.7M380.7 288.3h.7M378.6 288.5h.7M381.2 287.1h.7M378.6 290.9h.7M380.3 292.8h.7M377.9 290.1h.7M380.4 287.6h.7M377.9 294.5h.7M377.4 286.9h.7M378.2 294.6h.7M378.8 290.5h.7M379.6 295.2h.7M377.6 288.1h.7M379.0 292.6h.7M377.9 290.5h.7M379.7 286.8h.7" stroke="#4f6480" stroke-width=".7" fill="none"/><rect x="393.00" y="236.00" width="7.70" height="15.20" fill="#26262a" /><rect x="393.00" y="250.60" width="7.70" height="19.60" fill="#1e1e22" /><rect x="393.70" y="251.40" width="6.30" height="3.60" fill="#9db7dc" /><rect x="393.70" y="256.20" width="6.30" height="12.80" fill="#9db7dc" /><rect x="394.60" y="257.40" width="4.50" height="10.40" fill="#c3cfdd" /><path d="M396.2 258.3h.7M398.5 257.8h.7M395.5 263.7h.7M395.8 263.3h.7M396.2 267.4h.7M397.1 261.2h.7M395.6 262.4h.7M397.9 264.7h.7M397.7 262.8h.7M398.5 261.6h.7M397.0 267.1h.7M398.0 262.3h.7M398.0 265.3h.7M396.0 261.6h.7M397.9 261.4h.7M396.3 263.0h.7M395.2 260.3h.7M398.7 260.1h.7M398.0 257.8h.7M396.1 262.8h.7M396.1 266.9h.7M398.6 260.6h.7M395.4 266.7h.7M398.0 262.8h.7M395.1 257.8h.7M397.6 264.4h.7M396.7 261.0h.7M396.0 261.3h.7M396.5 263.7h.7M396.5 261.0h.7M395.8 264.2h.7M398.6 259.5h.7M397.9 264.0h.7M395.8 259.0h.7M398.2 259.2h.7M395.4 258.6h.7M398.1 261.4h.7" stroke="#4f6480" stroke-width=".7" fill="none"/><rect x="393.00" y="275.20" width="7.70" height="4.20" fill="#26262a" /><rect x="393.00" y="279.00" width="7.70" height="20.00" fill="#1e1e22" /><rect x="393.70" y="279.80" width="6.30" height="3.60" fill="#9db7dc" /><rect x="393.70" y="284.60" width="6.30" height="13.20" fill="#9db7dc" /><rect x="394.60" y="285.80" width="4.50" height="10.80" fill="#c3cfdd" /><path d="M394.9 289.0h.7M396.9 290.9h.7M395.5 294.8h.7M397.6 288.9h.7M396.1 288.7h.7M395.0 292.3h.7M396.0 292.8h.7M398.2 289.4h.7M396.0 289.8h.7M396.8 286.6h.7M396.4 289.3h.7M395.3 294.6h.7M397.6 291.1h.7M395.2 293.5h.7M396.4 295.1h.7M397.4 288.5h.7M397.8 292.1h.7M396.3 294.2h.7M396.2 287.6h.7M395.1 292.4h.7M396.0 287.7h.7M395.1 294.0h.7M396.0 294.9h.7M398.4 294.4h.7M395.8 295.7h.7M397.3 294.7h.7M398.4 289.3h.7M396.4 295.2h.7M396.0 287.1h.7M395.0 291.8h.7M396.1 295.8h.7M394.9 290.2h.7M397.7 292.3h.7M398.1 292.7h.7M398.3 296.0h.7M398.3 292.2h.7M396.5 291.5h.7M395.8 288.7h.7" stroke="#4f6480" stroke-width=".7" fill="none"/><rect x="406.50" y="236.00" width="15.50" height="15.20" fill="#26262a" /><rect x="406.50" y="250.60" width="15.50" height="19.60" fill="#1e1e22" /><rect x="407.20" y="251.40" width="14.10" height="3.60" fill="#9db7dc" /><rect x="407.20" y="256.20" width="6.35" height="12.80" fill="#9db7dc" /><rect x="414.95" y="256.20" width="6.35" height="12.80" fill="#9db7dc" /><rect x="408.00" y="257.40" width="4.75" height="10.40" fill="#c3cfdd" /><path d="M410.5 262.0h.7M409.9 258.5h.7M412.4 261.0h.7M410.3 261.1h.7M410.6 265.3h.7M412.2 263.6h.7M412.2 261.3h.7M410.3 261.0h.7M412.3 259.0h.7M409.2 265.2h.7M409.3 258.3h.7M409.8 262.2h.7M410.2 260.0h.7M409.7 260.5h.7M409.0 262.7h.7M409.2 259.6h.7M412.2 266.4h.7M409.9 262.9h.7M408.7 257.9h.7M410.4 267.0h.7M408.6 262.2h.7M411.6 257.8h.7M410.7 260.3h.7M411.4 265.8h.7M412.0 265.4h.7M408.7 264.1h.7M410.6 260.7h.7M409.1 262.3h.7M410.1 261.7h.7M412.3 260.0h.7M411.9 259.1h.7M411.2 262.0h.7M409.9 262.4h.7M408.9 259.9h.7M410.0 259.6h.7M411.8 264.5h.7M410.9 264.5h.7M409.0 257.8h.7M408.6 266.4h.7" stroke="#4f6480" stroke-width=".7" fill="none"/><rect x="406.50" y="275.20" width="15.50" height="4.20" fill="#26262a" /><rect x="406.50" y="279.00" width="15.50" height="20.00" fill="#1e1e22" /><rect x="407.20" y="279.80" width="14.10" height="3.60" fill="#9db7dc" /><rect x="407.20" y="284.60" width="6.35" height="13.20" fill="#9db7dc" /><rect x="414.95" y="284.60" width="6.35" height="13.20" fill="#9db7dc" /><rect x="408.00" y="285.80" width="4.75" height="10.80" fill="#c3cfdd" /><path d="M410.3 296.0h.7M409.6 290.0h.7M411.0 294.7h.7M410.1 291.0h.7M409.8 288.5h.7M412.1 295.3h.7M410.1 287.5h.7M411.9 290.8h.7M411.4 290.4h.7M408.6 293.7h.7M408.7 295.7h.7M409.0 289.6h.7M408.3 288.3h.7M411.0 287.0h.7M408.8 286.7h.7M408.4 291.4h.7M409.2 293.8h.7M411.1 291.3h.7M412.2 296.0h.7M409.6 294.0h.7M411.2 288.0h.7M411.6 286.5h.7M411.1 295.3h.7M411.0 293.2h.7M411.0 290.3h.7M408.8 290.0h.7M409.6 294.4h.7M412.0 296.0h.7M409.7 295.2h.7M412.0 286.3h.7M410.6 287.1h.7M408.6 290.6h.7M411.2 287.9h.7M409.6 291.0h.7M410.6 287.4h.7M409.0 286.2h.7M409.6 296.2h.7M409.1 293.8h.7M411.0 294.9h.7M411.6 286.7h.7M409.7 294.6h.7" stroke="#4f6480" stroke-width=".7" fill="none"/><rect x="428.30" y="236.00" width="7.60" height="15.20" fill="#26262a" /><rect x="428.30" y="250.60" width="7.60" height="19.60" fill="#1e1e22" /><rect x="429.00" y="251.40" width="6.20" height="3.60" fill="#9db7dc" /><rect x="429.00" y="256.20" width="6.20" height="12.80" fill="#9db7dc" /><rect x="429.90" y="257.40" width="4.40" height="10.40" fill="#c3cfdd" /><path d="M432.7 266.1h.7M430.3 265.9h.7M431.7 265.4h.7M432.4 261.2h.7M432.2 258.0h.7M433.8 266.3h.7M432.7 264.0h.7M433.0 262.0h.7M431.1 264.1h.7M433.9 266.2h.7M433.2 259.3h.7M431.4 260.4h.7M432.3 266.5h.7M432.6 263.4h.7M431.8 259.4h.7M431.2 267.3h.7M433.7 264.1h.7M432.8 259.9h.7M430.3 257.9h.7M430.3 259.7h.7M433.9 263.4h.7M431.0 258.6h.7M430.3 257.8h.7M430.7 261.0h.7M430.8 259.9h.7M432.6 259.0h.7M430.7 265.3h.7M431.3 263.9h.7M431.3 264.5h.7M430.2 260.3h.7M433.5 260.6h.7M432.6 259.8h.7M430.6 261.9h.7M431.9 258.0h.7M432.2 261.8h.7M431.6 265.1h.7" stroke="#4f6480" stroke-width=".7" fill="none"/><rect x="428.30" y="275.20" width="7.60" height="4.20" fill="#26262a" /><rect x="428.30" y="279.00" width="7.60" height="20.00" fill="#1e1e22" /><rect x="429.00" y="279.80" width="6.20" height="3.60" fill="#9db7dc" /><rect x="429.00" y="284.60" width="6.20" height="13.20" fill="#9db7dc" /><rect x="429.90" y="285.80" width="4.40" height="10.80" fill="#c3cfdd" /><path d="M433.6 290.3h.7M431.4 294.0h.7M433.1 291.3h.7M432.5 289.6h.7M433.0 292.0h.7M433.5 289.2h.7M430.5 294.9h.7M432.4 294.3h.7M433.0 294.0h.7M431.6 294.9h.7M432.5 290.3h.7M430.8 287.1h.7M431.1 289.4h.7M431.5 292.4h.7M433.8 291.8h.7M432.7 286.2h.7M432.8 291.6h.7M433.2 289.7h.7M432.6 291.3h.7M433.2 290.5h.7M433.3 295.0h.7M432.2 291.2h.7M432.9 291.4h.7M433.9 295.6h.7M432.1 293.1h.7M430.6 295.3h.7M432.6 286.4h.7M430.2 294.7h.7M433.2 292.4h.7M431.7 288.6h.7M432.0 295.4h.7M432.6 286.6h.7M431.0 287.0h.7M433.5 294.7h.7M433.7 290.5h.7M431.4 286.7h.7M431.2 289.6h.7M431.7 289.6h.7" stroke="#4f6480" stroke-width=".7" fill="none"/><rect x="441.70" y="236.00" width="15.50" height="15.20" fill="#26262a" /><rect x="441.70" y="250.60" width="15.50" height="19.60" fill="#1e1e22" /><rect x="442.40" y="251.40" width="14.10" height="3.60" fill="#9db7dc" /><rect x="442.40" y="256.20" width="6.35" height="12.80" fill="#9db7dc" /><rect x="450.15" y="256.20" width="6.35" height="12.80" fill="#9db7dc" /><rect x="443.20" y="257.40" width="4.75" height="10.40" fill="#c3cfdd" /><path d="M446.5 266.1h.7M445.1 265.7h.7M444.7 260.3h.7M446.8 258.6h.7M443.8 267.4h.7M445.5 261.7h.7M446.7 266.4h.7M445.0 265.6h.7M444.0 266.4h.7M445.2 261.5h.7M443.6 258.4h.7M445.1 258.8h.7M446.2 267.5h.7M444.7 265.1h.7M445.9 263.8h.7M446.7 262.4h.7M446.9 259.3h.7M446.3 262.9h.7M444.3 259.9h.7M447.4 263.9h.7M445.6 262.6h.7M447.0 263.9h.7M444.4 266.9h.7M447.0 265.4h.7M446.4 264.3h.7M444.8 267.3h.7M446.5 259.3h.7M446.9 261.9h.7M443.8 266.3h.7M444.4 261.8h.7M443.9 262.8h.7M445.7 265.8h.7M447.5 266.4h.7M446.3 261.6h.7M447.4 259.9h.7M444.8 263.2h.7M445.0 263.3h.7M444.0 260.1h.7M443.6 261.9h.7" stroke="#4f6480" stroke-width=".7" fill="none"/><rect x="441.70" y="275.20" width="15.50" height="4.20" fill="#26262a" /><rect x="441.70" y="279.00" width="15.50" height="20.00" fill="#1e1e22" /><rect x="442.40" y="279.80" width="14.10" height="3.60" fill="#9db7dc" /><rect x="442.40" y="284.60" width="6.35" height="13.20" fill="#9db7dc" /><rect x="450.15" y="284.60" width="6.35" height="13.20" fill="#9db7dc" /><rect x="443.20" y="285.80" width="4.75" height="10.80" fill="#c3cfdd" /><path d="M444.5 294.4h.7M444.6 288.1h.7M446.5 288.1h.7M447.0 291.5h.7M444.1 293.3h.7M447.6 289.2h.7M445.8 291.7h.7M447.4 296.2h.7M443.8 290.0h.7M446.9 290.4h.7M445.6 291.9h.7M443.6 286.5h.7M447.2 290.1h.7M445.3 291.8h.7M446.6 295.2h.7M443.8 292.5h.7M443.5 291.7h.7M446.9 291.0h.7M445.0 294.8h.7M446.4 295.4h.7M445.7 289.2h.7M446.4 291.1h.7M443.5 287.4h.7M447.5 292.7h.7M443.6 293.8h.7M446.6 286.6h.7M447.6 287.9h.7M445.6 293.4h.7M445.5 289.7h.7M445.5 292.5h.7M447.5 295.1h.7M447.6 294.3h.7M445.5 289.7h.7M447.3 295.5h.7M444.8 294.1h.7M444.9 286.7h.7M445.5 295.3h.7M445.7 294.4h.7M447.0 294.2h.7M444.7 295.4h.7M443.9 291.3h.7" stroke="#4f6480" stroke-width=".7" fill="none"/><rect x="476.50" y="236.00" width="8.00" height="15.20" fill="#26262a" /><rect x="476.50" y="250.60" width="8.00" height="19.60" fill="#1e1e22" /><rect x="477.20" y="251.40" width="6.60" height="3.60" fill="#9db7dc" /><rect x="477.20" y="256.20" width="6.60" height="12.80" fill="#9db7dc" /><rect x="478.10" y="257.40" width="4.80" height="10.40" fill="#c3cfdd" /><path d="M478.8 261.5h.7M482.1 265.7h.7M482.6 263.2h.7M480.6 259.3h.7M480.4 266.6h.7M479.8 266.1h.7M479.7 265.6h.7M479.2 267.1h.7M478.9 258.5h.7M480.8 265.3h.7M481.4 261.7h.7M481.4 259.7h.7M479.8 260.5h.7M479.4 258.1h.7M479.3 263.0h.7M481.0 261.0h.7M481.0 260.9h.7M481.8 257.8h.7M481.6 266.5h.7M480.8 263.9h.7M482.5 259.1h.7M478.8 262.7h.7M481.4 263.0h.7M480.4 261.9h.7M480.3 266.3h.7M478.7 264.1h.7M478.8 266.0h.7M479.5 265.5h.7M479.7 263.9h.7M480.5 267.1h.7M480.4 262.7h.7M480.5 260.2h.7M482.4 261.1h.7M479.0 259.7h.7M481.4 266.5h.7M480.9 267.1h.7M479.3 266.4h.7M481.6 259.8h.7M478.8 261.8h.7" stroke="#4f6480" stroke-width=".7" fill="none"/><rect x="476.50" y="275.20" width="8.00" height="4.20" fill="#26262a" /><rect x="476.50" y="279.00" width="8.00" height="20.00" fill="#1e1e22" /><rect x="477.20" y="279.80" width="6.60" height="3.60" fill="#9db7dc" /><rect x="477.20" y="284.60" width="6.60" height="13.20" fill="#9db7dc" /><rect x="478.10" y="285.80" width="4.80" height="10.80" fill="#c3cfdd" /><path d="M480.2 291.1h.7M481.4 288.4h.7M479.5 289.5h.7M479.1 290.6h.7M480.9 288.9h.7M479.0 293.5h.7M478.8 294.9h.7M481.0 288.4h.7M478.4 294.7h.7M478.5 293.8h.7M480.6 293.1h.7M479.2 293.6h.7M479.5 292.1h.7M482.5 292.2h.7M479.1 288.6h.7M480.1 294.6h.7M481.8 290.1h.7M480.9 289.7h.7M480.5 289.3h.7M482.4 289.9h.7M479.7 292.4h.7M479.3 287.2h.7M480.3 294.5h.7M479.9 289.0h.7M479.6 292.3h.7M479.5 291.5h.7M480.5 286.5h.7M479.8 294.5h.7M479.3 293.8h.7M478.7 291.1h.7M480.2 292.7h.7M478.4 287.3h.7M480.1 295.5h.7M480.5 294.9h.7M480.6 296.2h.7M478.7 295.0h.7M479.5 288.3h.7M480.6 290.4h.7M482.6 295.6h.7M481.4 288.6h.7M479.4 290.6h.7" stroke="#4f6480" stroke-width=".7" fill="none"/><rect x="490.30" y="236.00" width="15.60" height="15.20" fill="#26262a" /><rect x="490.30" y="250.60" width="15.60" height="19.60" fill="#1e1e22" /><rect x="491.00" y="251.40" width="14.20" height="3.60" fill="#9db7dc" /><rect x="491.00" y="256.20" width="6.40" height="12.80" fill="#9db7dc" /><rect x="498.80" y="256.20" width="6.40" height="12.80" fill="#9db7dc" /><rect x="491.80" y="257.40" width="4.80" height="10.40" fill="#c3cfdd" /><path d="M493.4 259.8h.7M493.0 260.3h.7M493.4 258.8h.7M493.4 267.0h.7M495.6 263.8h.7M496.1 266.9h.7M492.5 258.2h.7M493.5 262.9h.7M496.3 258.0h.7M495.0 265.5h.7M493.2 265.2h.7M495.7 258.6h.7M494.9 262.3h.7M495.3 259.2h.7M494.9 257.8h.7M492.2 261.9h.7M493.6 261.9h.7M493.0 267.5h.7M493.8 262.6h.7M493.6 266.3h.7M492.8 266.8h.7M492.9 266.3h.7M493.9 263.6h.7M493.1 265.7h.7M493.0 265.4h.7M494.9 266.5h.7M496.3 265.6h.7M492.8 265.7h.7M492.5 265.6h.7M496.0 259.0h.7M492.3 265.6h.7M493.6 264.4h.7M495.5 266.9h.7M494.3 266.0h.7M495.9 265.3h.7M493.7 266.7h.7M493.9 266.5h.7M493.7 262.5h.7M492.2 258.7h.7" stroke="#4f6480" stroke-width=".7" fill="none"/><rect x="490.30" y="275.20" width="15.60" height="4.20" fill="#26262a" /><rect x="490.30" y="279.00" width="15.60" height="20.00" fill="#1e1e22" /><rect x="491.00" y="279.80" width="14.20" height="3.60" fill="#9db7dc" /><rect x="491.00" y="284.60" width="6.40" height="13.20" fill="#9db7dc" /><rect x="498.80" y="284.60" width="6.40" height="13.20" fill="#9db7dc" /><rect x="491.80" y="285.80" width="4.80" height="10.80" fill="#c3cfdd" /><path d="M496.0 290.7h.7M495.2 290.9h.7M495.1 291.4h.7M492.7 289.3h.7M494.8 287.7h.7M496.1 286.7h.7M494.5 295.0h.7M495.2 287.6h.7M492.5 293.3h.7M493.8 287.1h.7M492.6 292.9h.7M492.2 289.0h.7M496.1 288.7h.7M495.7 286.4h.7M492.9 286.6h.7M495.2 291.9h.7M495.3 294.4h.7M495.1 287.2h.7M494.0 286.4h.7M495.4 289.9h.7M494.0 295.2h.7M496.3 292.3h.7M493.7 295.0h.7M495.6 288.3h.7M494.0 295.8h.7M496.2 295.4h.7M494.1 287.8h.7M495.8 288.2h.7M494.6 290.1h.7M495.7 289.8h.7M493.7 294.8h.7M495.1 296.3h.7M492.6 287.4h.7M494.9 291.2h.7M495.9 290.8h.7M492.3 291.0h.7M493.1 294.3h.7M495.5 294.9h.7M492.6 291.8h.7M492.9 296.1h.7M492.7 292.7h.7" stroke="#4f6480" stroke-width=".7" fill="none"/><rect x="511.70" y="236.00" width="7.60" height="15.20" fill="#26262a" /><rect x="511.70" y="250.60" width="7.60" height="19.60" fill="#1e1e22" /><rect x="512.40" y="251.40" width="6.20" height="3.60" fill="#9db7dc" /><rect x="512.40" y="256.20" width="6.20" height="12.80" fill="#9db7dc" /><rect x="513.30" y="257.40" width="4.40" height="10.40" fill="#c3cfdd" /><path d="M516.3 259.7h.7M515.8 258.9h.7M513.8 260.5h.7M513.9 262.0h.7M516.2 266.8h.7M514.6 262.4h.7M516.2 260.8h.7M514.8 261.3h.7M516.8 261.2h.7M516.5 259.1h.7M514.8 260.6h.7M514.5 259.2h.7M515.1 265.7h.7M516.1 267.4h.7M514.8 260.7h.7M514.5 262.5h.7M514.1 265.6h.7M515.2 258.1h.7M515.5 261.9h.7M514.3 260.7h.7M516.1 267.5h.7M515.9 260.2h.7M513.7 260.9h.7M514.5 261.8h.7M515.3 260.4h.7M514.2 266.8h.7M517.2 264.8h.7M517.1 263.3h.7M516.4 262.0h.7M516.1 266.0h.7M516.3 265.5h.7M515.9 261.1h.7M516.6 266.5h.7M514.5 259.3h.7M513.6 260.1h.7M514.3 259.7h.7" stroke="#4f6480" stroke-width=".7" fill="none"/><rect x="511.70" y="275.20" width="7.60" height="4.20" fill="#26262a" /><rect x="511.70" y="279.00" width="7.60" height="20.00" fill="#1e1e22" /><rect x="512.40" y="279.80" width="6.20" height="3.60" fill="#9db7dc" /><rect x="512.40" y="284.60" width="6.20" height="13.20" fill="#9db7dc" /><rect x="513.30" y="285.80" width="4.40" height="10.80" fill="#c3cfdd" /><path d="M514.2 289.3h.7M514.2 295.9h.7M513.9 286.2h.7M517.1 290.0h.7M516.4 289.4h.7M513.7 286.5h.7M517.1 286.6h.7M515.3 288.8h.7M516.0 289.9h.7M516.7 288.3h.7M515.6 296.1h.7M515.6 295.8h.7M513.8 295.1h.7M515.1 296.3h.7M516.3 288.7h.7M516.5 287.8h.7M515.6 293.7h.7M514.2 286.7h.7M516.8 288.0h.7M516.5 290.9h.7M514.3 294.9h.7M515.0 288.8h.7M517.0 296.2h.7M514.9 296.0h.7M514.0 294.2h.7M515.8 288.6h.7M515.1 289.4h.7M516.2 290.4h.7M515.2 292.9h.7M514.9 286.9h.7M515.5 294.9h.7M514.5 288.9h.7M517.1 287.8h.7M517.2 289.2h.7M514.4 293.5h.7M517.0 290.9h.7M514.6 287.4h.7M513.6 293.3h.7" stroke="#4f6480" stroke-width=".7" fill="none"/><rect x="525.20" y="236.00" width="15.50" height="15.20" fill="#26262a" /><rect x="525.20" y="250.60" width="15.50" height="19.60" fill="#1e1e22" /><rect x="525.90" y="251.40" width="14.10" height="3.60" fill="#9db7dc" /><rect x="525.90" y="256.20" width="6.35" height="12.80" fill="#9db7dc" /><rect x="533.65" y="256.20" width="6.35" height="12.80" fill="#9db7dc" /><rect x="526.70" y="257.40" width="4.75" height="10.40" fill="#c3cfdd" /><path d="M530.1 260.8h.7M529.0 265.2h.7M529.9 264.4h.7M530.8 260.1h.7M531.0 263.8h.7M528.3 264.4h.7M528.3 261.7h.7M530.4 265.6h.7M529.5 265.6h.7M530.6 261.5h.7M527.3 266.9h.7M527.2 262.1h.7M527.4 263.0h.7M530.2 258.0h.7M529.1 261.7h.7M529.8 266.5h.7M529.8 258.3h.7M528.5 262.3h.7M527.7 266.1h.7M528.5 261.2h.7M527.9 263.0h.7M530.3 258.8h.7M529.1 260.6h.7M527.3 261.6h.7M529.6 263.7h.7M531.1 264.6h.7M530.9 264.8h.7M529.8 266.5h.7M530.6 265.1h.7M528.4 260.5h.7M530.6 257.9h.7M528.6 265.9h.7M528.2 262.6h.7M528.4 264.0h.7M530.4 258.3h.7M528.7 266.1h.7M528.7 267.3h.7M528.1 262.6h.7M527.7 266.2h.7" stroke="#4f6480" stroke-width=".7" fill="none"/><rect x="525.20" y="275.20" width="15.50" height="4.20" fill="#26262a" /><rect x="525.20" y="279.00" width="15.50" height="20.00" fill="#1e1e22" /><rect x="525.90" y="279.80" width="14.10" height="3.60" fill="#9db7dc" /><rect x="525.90" y="284.60" width="6.35" height="13.20" fill="#9db7dc" /><rect x="533.65" y="284.60" width="6.35" height="13.20" fill="#9db7dc" /><rect x="526.70" y="285.80" width="4.75" height="10.80" fill="#c3cfdd" /><path d="M529.0 294.5h.7M529.9 288.8h.7M530.5 286.8h.7M530.8 294.1h.7M528.0 292.0h.7M528.4 290.9h.7M530.9 290.7h.7M529.4 286.6h.7M527.2 291.0h.7M528.7 295.6h.7M529.4 295.2h.7M529.4 295.6h.7M528.3 286.4h.7M530.1 292.8h.7M527.8 288.3h.7M529.0 295.3h.7M529.8 290.5h.7M529.4 289.6h.7M528.6 288.0h.7M529.9 286.3h.7M529.2 287.0h.7M527.6 293.8h.7M530.6 291.3h.7M531.0 293.3h.7M529.2 292.3h.7M527.0 287.1h.7M530.1 289.9h.7M531.0 288.7h.7M528.2 288.3h.7M530.9 291.7h.7M528.1 286.8h.7M529.4 286.3h.7M530.6 287.7h.7M530.2 294.9h.7M528.2 292.1h.7M529.9 290.8h.7M528.7 295.1h.7M528.1 291.9h.7M527.0 291.9h.7M531.0 290.1h.7M530.1 289.4h.7" stroke="#4f6480" stroke-width=".7" fill="none"/><rect x="236.50" y="304.20" width="15.50" height="4.00" fill="#26262a" /><rect x="236.50" y="307.80" width="15.50" height="21.70" fill="#1e1e22" /><rect x="237.20" y="308.60" width="14.10" height="3.60" fill="#9db7dc" /><rect x="237.20" y="313.40" width="6.35" height="14.90" fill="#9db7dc" /><rect x="244.95" y="313.40" width="6.35" height="14.90" fill="#9db7dc" /><rect x="238.00" y="314.60" width="4.75" height="12.50" fill="#c3cfdd" /><path d="M239.9 319.6h.7M242.0 318.8h.7M238.5 321.4h.7M240.7 322.1h.7M240.2 318.4h.7M241.3 317.9h.7M239.4 317.0h.7M238.5 317.4h.7M241.1 319.6h.7M240.2 317.6h.7M239.4 323.1h.7M242.2 316.6h.7M241.2 326.3h.7M240.6 325.5h.7M239.1 324.2h.7M238.8 317.5h.7M238.7 314.9h.7M241.4 319.1h.7M239.8 323.6h.7M239.3 325.1h.7M239.1 326.5h.7M241.9 320.9h.7M242.2 325.0h.7M242.2 318.4h.7M240.0 318.5h.7M240.1 321.5h.7M241.9 318.8h.7M240.6 318.2h.7M240.1 315.5h.7M240.5 322.2h.7M240.8 325.2h.7M240.5 318.2h.7M242.2 319.7h.7M239.1 321.0h.7M241.2 318.1h.7M239.3 315.9h.7M240.6 319.4h.7M241.6 316.8h.7M240.8 316.7h.7M239.1 316.2h.7M241.0 323.6h.7M240.1 324.7h.7M241.6 325.2h.7M241.0 320.2h.7M240.0 324.4h.7M239.5 317.8h.7M242.4 326.0h.7" stroke="#4f6480" stroke-width=".7" fill="none"/><rect x="258.30" y="304.20" width="7.60" height="4.00" fill="#26262a" /><rect x="258.30" y="307.80" width="7.60" height="21.70" fill="#1e1e22" /><rect x="259.00" y="308.60" width="6.20" height="3.60" fill="#9db7dc" /><rect x="259.00" y="313.40" width="6.20" height="14.90" fill="#9db7dc" /><rect x="259.90" y="314.60" width="4.40" height="12.50" fill="#c3cfdd" /><path d="M262.7 324.8h.7M260.4 324.1h.7M262.5 318.4h.7M261.3 323.0h.7M263.7 323.8h.7M260.4 321.9h.7M261.5 317.6h.7M260.4 321.8h.7M261.2 318.9h.7M262.1 325.6h.7M261.2 321.7h.7M262.7 323.9h.7M263.4 317.6h.7M263.5 315.8h.7M261.9 323.7h.7M263.6 319.0h.7M262.8 323.2h.7M260.4 323.8h.7M263.4 316.6h.7M261.4 320.1h.7M263.8 326.3h.7M260.9 319.6h.7M260.7 315.5h.7M261.0 326.0h.7M263.6 317.3h.7M262.6 322.5h.7M261.9 325.0h.7M260.5 318.1h.7M260.6 325.7h.7M263.2 320.3h.7M260.5 325.1h.7M263.2 325.2h.7M263.8 322.8h.7M262.1 324.4h.7M260.7 324.9h.7M261.4 320.1h.7M263.5 315.0h.7M261.5 324.6h.7M261.7 325.6h.7M262.9 317.6h.7M262.1 319.1h.7M262.7 323.4h.7M262.1 315.8h.7" stroke="#4f6480" stroke-width=".7" fill="none"/><rect x="271.40" y="304.20" width="16.20" height="4.00" fill="#26262a" /><rect x="271.40" y="307.80" width="16.20" height="21.70" fill="#1e1e22" /><rect x="272.10" y="308.60" width="14.80" height="3.60" fill="#9db7dc" /><rect x="272.10" y="313.40" width="6.70" height="14.90" fill="#9db7dc" /><rect x="280.20" y="313.40" width="6.70" height="14.90" fill="#9db7dc" /><rect x="272.90" y="314.60" width="5.10" height="12.50" fill="#c3cfdd" /><path d="M277.1 317.0h.7M276.0 324.7h.7M275.3 315.5h.7M275.7 316.1h.7M274.0 317.4h.7M274.0 321.8h.7M276.6 320.2h.7M277.5 315.8h.7M274.7 318.7h.7M275.6 322.9h.7M274.4 320.0h.7M274.9 319.0h.7M273.5 323.8h.7M273.3 319.9h.7M274.2 319.9h.7M276.4 324.4h.7M277.1 322.3h.7M274.5 315.0h.7M273.9 325.4h.7M274.9 319.4h.7M274.8 318.9h.7M274.1 318.2h.7M275.3 320.3h.7M273.5 316.2h.7M273.3 320.5h.7M276.1 325.4h.7M275.0 322.1h.7M276.7 321.3h.7M275.6 316.7h.7M276.3 323.6h.7M274.6 322.8h.7M274.1 316.2h.7M274.7 321.4h.7M274.9 317.9h.7M277.5 323.2h.7M274.5 315.7h.7M276.4 325.9h.7M276.4 323.1h.7M277.6 323.2h.7M273.8 320.5h.7M275.0 321.8h.7M273.9 322.4h.7M276.4 318.1h.7M276.0 319.0h.7M276.2 320.5h.7M277.5 320.4h.7M273.4 315.7h.7M276.3 316.0h.7M276.6 320.8h.7M274.8 319.8h.7" stroke="#4f6480" stroke-width=".7" fill="none"/><rect x="293.00" y="304.20" width="7.70" height="4.00" fill="#26262a" /><rect x="293.00" y="307.80" width="7.70" height="21.70" fill="#1e1e22" /><rect x="293.70" y="308.60" width="6.30" height="3.60" fill="#9db7dc" /><rect x="293.70" y="313.40" width="6.30" height="14.90" fill="#9db7dc" /><rect x="294.60" y="314.60" width="4.50" height="12.50" fill="#c3cfdd" /><path d="M298.2 321.3h.7M296.5 320.5h.7M297.2 320.3h.7M297.7 319.8h.7M296.0 316.3h.7M296.7 317.1h.7M295.7 317.0h.7M296.3 325.7h.7M296.9 318.2h.7M296.7 320.4h.7M295.1 324.5h.7M296.9 326.7h.7M297.4 317.8h.7M298.7 316.2h.7M295.5 316.6h.7M295.5 316.5h.7M298.4 316.6h.7M296.8 316.6h.7M296.1 316.0h.7M296.3 318.3h.7M297.7 326.7h.7M295.6 320.4h.7M297.3 326.6h.7M295.2 322.7h.7M296.5 320.9h.7M297.6 323.2h.7M296.4 324.6h.7M297.2 317.7h.7M295.7 317.3h.7M298.1 325.2h.7M295.5 321.9h.7M295.2 315.6h.7M297.6 321.5h.7M296.6 320.1h.7M296.7 319.4h.7M296.0 326.0h.7M295.2 321.9h.7M295.6 319.2h.7M295.1 316.6h.7M297.3 315.3h.7M296.5 322.2h.7M297.1 316.1h.7M296.5 318.8h.7M298.0 325.2h.7" stroke="#4f6480" stroke-width=".7" fill="none"/><rect x="476.50" y="304.20" width="8.00" height="4.00" fill="#26262a" /><rect x="476.50" y="307.80" width="8.00" height="21.70" fill="#1e1e22" /><rect x="477.20" y="308.60" width="6.60" height="3.60" fill="#9db7dc" /><rect x="477.20" y="313.40" width="6.60" height="14.90" fill="#9db7dc" /><rect x="478.10" y="314.60" width="4.80" height="12.50" fill="#c3cfdd" /><path d="M480.9 324.2h.7M480.1 326.5h.7M481.4 325.5h.7M479.1 323.2h.7M481.2 323.2h.7M482.2 317.6h.7M478.9 321.6h.7M479.3 326.4h.7M482.2 320.6h.7M481.8 322.2h.7M482.2 321.5h.7M479.3 326.7h.7M479.5 316.2h.7M481.7 322.7h.7M482.0 317.5h.7M482.3 324.8h.7M481.1 315.1h.7M481.6 319.3h.7M479.0 318.8h.7M482.4 318.7h.7M480.3 325.6h.7M481.4 319.3h.7M479.8 321.4h.7M480.7 323.5h.7M481.1 317.1h.7M482.1 324.4h.7M480.5 316.6h.7M480.3 325.2h.7M479.5 318.7h.7M481.3 323.7h.7M481.9 319.6h.7M481.5 317.6h.7M478.6 323.1h.7M479.4 325.3h.7M479.8 319.0h.7M482.0 315.2h.7M482.5 318.8h.7M478.6 318.9h.7M478.9 317.9h.7M480.5 321.6h.7M479.2 326.8h.7M479.0 316.2h.7M479.5 314.9h.7M482.1 316.8h.7M478.5 322.3h.7M479.8 316.3h.7M480.4 317.1h.7" stroke="#4f6480" stroke-width=".7" fill="none"/><rect x="490.30" y="304.20" width="15.60" height="4.00" fill="#26262a" /><rect x="490.30" y="307.80" width="15.60" height="21.70" fill="#1e1e22" /><rect x="491.00" y="308.60" width="14.20" height="3.60" fill="#9db7dc" /><rect x="491.00" y="313.40" width="6.40" height="14.90" fill="#9db7dc" /><rect x="498.80" y="313.40" width="6.40" height="14.90" fill="#9db7dc" /><rect x="491.80" y="314.60" width="4.80" height="12.50" fill="#c3cfdd" /><path d="M492.4 320.9h.7M493.1 319.0h.7M494.2 326.7h.7M494.7 321.7h.7M493.4 320.4h.7M493.2 325.0h.7M496.0 324.9h.7M493.8 323.5h.7M493.3 324.3h.7M496.1 317.0h.7M492.5 326.7h.7M494.5 324.2h.7M495.7 324.5h.7M492.5 317.9h.7M493.7 325.3h.7M495.2 317.5h.7M492.7 324.4h.7M495.8 315.2h.7M493.5 316.2h.7M493.9 315.1h.7M493.7 316.9h.7M492.3 326.4h.7M492.7 325.9h.7M495.1 319.0h.7M493.7 319.3h.7M493.3 321.7h.7M492.7 321.9h.7M494.2 317.1h.7M496.1 318.3h.7M494.7 323.5h.7M495.2 321.8h.7M494.0 320.0h.7M495.2 315.6h.7M494.5 324.9h.7M494.0 320.6h.7M495.0 324.2h.7M493.5 322.1h.7M495.5 322.2h.7M493.0 326.8h.7M493.5 322.6h.7M492.3 323.0h.7M494.4 325.7h.7M493.1 315.2h.7M493.5 320.0h.7M495.0 318.6h.7M495.3 325.0h.7M492.2 326.6h.7" stroke="#4f6480" stroke-width=".7" fill="none"/><rect x="511.70" y="304.20" width="7.60" height="4.00" fill="#26262a" /><rect x="511.70" y="307.80" width="7.60" height="21.70" fill="#1e1e22" /><rect x="512.40" y="308.60" width="6.20" height="3.60" fill="#9db7dc" /><rect x="512.40" y="313.40" width="6.20" height="14.90" fill="#9db7dc" /><rect x="513.30" y="314.60" width="4.40" height="12.50" fill="#c3cfdd" /><path d="M513.8 318.0h.7M513.9 324.4h.7M517.2 318.1h.7M515.8 326.4h.7M516.5 318.0h.7M515.4 325.8h.7M516.9 320.7h.7M515.8 315.7h.7M515.1 324.5h.7M513.7 317.3h.7M515.7 315.1h.7M514.3 323.9h.7M514.3 320.8h.7M517.2 321.2h.7M516.2 315.7h.7M515.6 321.2h.7M515.4 320.6h.7M513.9 322.2h.7M514.9 323.3h.7M514.6 325.8h.7M515.4 324.8h.7M515.6 318.3h.7M515.3 318.2h.7M515.6 319.2h.7M514.6 326.8h.7M517.3 321.0h.7M515.7 324.7h.7M516.0 319.8h.7M515.5 324.4h.7M513.8 319.8h.7M513.9 321.6h.7M513.7 320.1h.7M514.1 319.0h.7M517.3 317.7h.7M515.0 324.5h.7M514.4 317.6h.7M515.2 322.2h.7M514.4 317.9h.7M513.8 318.1h.7M515.1 322.0h.7M514.7 321.2h.7M516.6 318.2h.7M516.3 323.9h.7" stroke="#4f6480" stroke-width=".7" fill="none"/><rect x="525.20" y="304.20" width="15.50" height="4.00" fill="#26262a" /><rect x="525.20" y="307.80" width="15.50" height="21.70" fill="#1e1e22" /><rect x="525.90" y="308.60" width="14.10" height="3.60" fill="#9db7dc" /><rect x="525.90" y="313.40" width="6.35" height="14.90" fill="#9db7dc" /><rect x="533.65" y="313.40" width="6.35" height="14.90" fill="#9db7dc" /><rect x="526.70" y="314.60" width="4.75" height="12.50" fill="#c3cfdd" /><path d="M530.8 323.7h.7M529.6 322.5h.7M528.6 325.5h.7M527.8 319.2h.7M527.5 321.0h.7M530.7 322.6h.7M527.1 325.4h.7M527.2 317.2h.7M529.0 315.2h.7M530.3 323.1h.7M531.0 322.6h.7M528.8 317.6h.7M528.3 322.4h.7M530.5 317.1h.7M529.2 322.6h.7M528.0 323.3h.7M528.2 319.0h.7M527.9 326.2h.7M527.2 318.6h.7M529.5 320.9h.7M527.9 320.9h.7M529.0 321.4h.7M528.8 316.9h.7M529.9 318.8h.7M530.3 318.9h.7M530.6 317.8h.7M529.7 326.5h.7M528.2 324.5h.7M529.3 314.9h.7M529.5 319.4h.7M527.3 324.5h.7M529.9 326.1h.7M527.5 319.2h.7M529.4 319.0h.7M527.5 319.3h.7M528.8 320.8h.7M528.8 319.9h.7M529.1 323.0h.7M528.0 320.6h.7M530.5 324.2h.7M530.3 325.9h.7M529.0 324.9h.7M530.3 319.1h.7M530.2 320.7h.7M529.3 316.8h.7M530.1 318.9h.7M528.8 321.2h.7" stroke="#4f6480" stroke-width=".7" fill="none"/><rect x="177.00" y="270.30" width="423.00" height="4.70" fill="#b8b6b4" /><rect x="177.00" y="299.30" width="137.00" height="4.70" fill="#b8b6b4" /><rect x="463.00" y="299.30" width="137.00" height="4.70" fill="#b8b6b4" /><rect x="600.00" y="299.80" width="6.50" height="3.80" fill="#222" /><rect x="313.40" y="298.60" width="150.00" height="36.00" fill="#a79c94" /><rect x="313.40" y="298.60" width="150.00" height="0.70" fill="#7d736c" /><rect x="318.00" y="306.50" width="43.70" height="27.50" fill="#9db7dc" /><rect x="318" y="306.500" width="43.70" height="27.500" fill="none" stroke="#1e1e22" stroke-width=".7"/><path d="M318.00 312.20L361.70 312.20" stroke="#1e1e22" stroke-width="0.6" fill="none" /><path d="M318.00 318.60L361.70 318.60" stroke="#1e1e22" stroke-width="0.6" fill="none" /><path d="M323.24 306.50L323.24 334.00" stroke="#1e1e22" stroke-width="0.6" fill="none" /><path d="M345.09 306.50L345.09 334.00" stroke="#1e1e22" stroke-width="0.6" fill="none" /><path d="M356.46 306.50L356.46 334.00" stroke="#1e1e22" stroke-width="0.6" fill="none" /><rect x="368.00" y="306.50" width="41.00" height="27.50" fill="#9db7dc" /><rect x="368" y="306.500" width="41.00" height="27.500" fill="none" stroke="#1e1e22" stroke-width=".7"/><path d="M368.00 312.20L409.00 312.20" stroke="#1e1e22" stroke-width="0.6" fill="none" /><path d="M368.00 318.60L409.00 318.60" stroke="#1e1e22" stroke-width="0.6" fill="none" /><path d="M370.46 306.50L370.46 334.00" stroke="#1e1e22" stroke-width="0.6" fill="none" /><path d="M406.54 306.50L406.54 334.00" stroke="#1e1e22" stroke-width="0.6" fill="none" /><path d="M388.50 306.50L388.50 318.60" stroke="#1e1e22" stroke-width="0.6" fill="none" /><rect x="371" y="319" width="14.00" height="15" fill="none" stroke="#1e1e22" stroke-width="1.100"/><path d="M378.00 319.00L378.00 334.00" stroke="#1e1e22" stroke-width="1" fill="none" /><rect x="390" y="319" width="12.60" height="15" fill="none" stroke="#1e1e22" stroke-width="1.100"/><path d="M396.30 319.00L396.30 334.00" stroke="#1e1e22" stroke-width="1" fill="none" /><rect x="415.00" y="306.50" width="44.30" height="27.50" fill="#9db7dc" /><rect x="415" y="306.500" width="44.30" height="27.500" fill="none" stroke="#1e1e22" stroke-width=".7"/><path d="M415.00 312.20L459.30 312.20" stroke="#1e1e22" stroke-width="0.6" fill="none" /><path d="M415.00 318.60L459.30 318.60" stroke="#1e1e22" stroke-width="0.6" fill="none" /><path d="M420.32 306.50L420.32 334.00" stroke="#1e1e22" stroke-width="0.6" fill="none" /><path d="M442.47 306.50L442.47 334.00" stroke="#1e1e22" stroke-width="0.6" fill="none" /><path d="M453.98 306.50L453.98 334.00" stroke="#1e1e22" stroke-width="0.6" fill="none" /><text x="468.50" y="288.50" font-size="4" fill="#000" text-anchor="start" font-weight="normal" font-family="Liberation Sans" >+4.450</text><text x="468.50" y="296.20" font-size="4" fill="#000" text-anchor="start" font-weight="normal" font-family="Liberation Sans" >+3.450</text><text x="468.50" y="308.20" font-size="4" fill="#000" text-anchor="start" font-weight="normal" font-family="Liberation Sans" >+1.800</text><text x="468.50" y="324.00" font-size="4" fill="#000" text-anchor="start" font-weight="normal" font-family="Liberation Sans" >-0.300</text><path d="M464.00 290.00L478.00 290.00" stroke="#333" stroke-width="0.35" fill="none" /><path d="M464.00 297.70L478.00 297.70" stroke="#333" stroke-width="0.35" fill="none" /><path d="M290.40 185.00L290.40 334.00" stroke="#ffffff" stroke-width="1" fill="none" /><path d="M401.50 185.00L401.50 334.00" stroke="#ffffff" stroke-width="1" fill="none" /><path d="M512.50 204.00L512.50 331.00" stroke="#a98a82" stroke-width="0.5" fill="none" /><path d="M600.500 325h8.500l2.500 2h3l2.500 2v6.500h-4.500l-3-2.500h-9z" fill="#4a4a4a" stroke="#222" stroke-width=".5"/><path d="M601.50 325.00L601.50 334.00" stroke="#222" stroke-width="0.6" fill="none" /><path d="M603.30 325.00L603.30 334.00" stroke="#222" stroke-width="0.6" fill="none" /><path d="M605.10 325.00L605.10 334.00" stroke="#222" stroke-width="0.6" fill="none" /><path d="M606.90 325.00L606.90 334.00" stroke="#222" stroke-width="0.6" fill="none" /><path d="M608.70 325.00L608.70 334.00" stroke="#222" stroke-width="0.6" fill="none" /><path d="M610.50 325.00L610.50 334.00" stroke="#222" stroke-width="0.6" fill="none" /><path d="M612.30 325.00L612.30 334.00" stroke="#222" stroke-width="0.6" fill="none" /><path d="M614.10 325.00L614.10 334.00" stroke="#222" stroke-width="0.6" fill="none" /><path d="M615.90 325.00L615.90 334.00" stroke="#222" stroke-width="0.6" fill="none" /><path d="M143.50 196.40L163.50 196.40" stroke="#444" stroke-width="0.4" fill="none" /><path d="M160.90 200.40L163.50 203.80" stroke="#444" stroke-width="0.4" fill="none" /><path d="M166.10 200.40L163.50 203.80" stroke="#444" stroke-width="0.4" fill="none" /><path d="M163.50 196.40L163.50 203.80" stroke="#444" stroke-width="0.4" fill="none" /><path d="M158.50 203.80L183.50 203.80" stroke="#999" stroke-width="0.4" fill="none" /><text x="153.50" y="195.40" font-size="4.4" fill="#111" text-anchor="middle" font-weight="normal" font-family="Liberation Sans" >+17.250</text><path d="M143.50 228.60L163.50 228.60" stroke="#444" stroke-width="0.4" fill="none" /><path d="M160.90 232.60L163.50 236.00" stroke="#444" stroke-width="0.4" fill="none" /><path d="M166.10 232.60L163.50 236.00" stroke="#444" stroke-width="0.4" fill="none" /><path d="M163.50 228.60L163.50 236.00" stroke="#444" stroke-width="0.4" fill="none" /><path d="M158.50 236.00L183.50 236.00" stroke="#999" stroke-width="0.4" fill="none" /><text x="153.50" y="227.60" font-size="4.4" fill="#111" text-anchor="middle" font-weight="normal" font-family="Liberation Sans" >+13.950</text><path d="M143.50 267.60L163.50 267.60" stroke="#444" stroke-width="0.4" fill="none" /><path d="M160.90 271.60L163.50 275.00" stroke="#444" stroke-width="0.4" fill="none" /><path d="M166.10 271.60L163.50 275.00" stroke="#444" stroke-width="0.4" fill="none" /><path d="M163.50 267.60L163.50 275.00" stroke="#444" stroke-width="0.4" fill="none" /><path d="M158.50 275.00L183.50 275.00" stroke="#999" stroke-width="0.4" fill="none" /><text x="153.50" y="266.60" font-size="4.4" fill="#111" text-anchor="middle" font-weight="normal" font-family="Liberation Sans" >+7.050</text><path d="M143.50 296.60L163.50 296.60" stroke="#444" stroke-width="0.4" fill="none" /><path d="M160.90 300.60L163.50 304.00" stroke="#444" stroke-width="0.4" fill="none" /><path d="M166.10 300.60L163.50 304.00" stroke="#444" stroke-width="0.4" fill="none" /><path d="M163.50 296.60L163.50 304.00" stroke="#444" stroke-width="0.4" fill="none" /><path d="M158.50 304.00L183.50 304.00" stroke="#999" stroke-width="0.4" fill="none" /><text x="153.50" y="295.60" font-size="4.4" fill="#111" text-anchor="middle" font-weight="normal" font-family="Liberation Sans" >+3.750</text><path d="M143.50 324.10L163.50 324.10" stroke="#444" stroke-width="0.4" fill="none" /><path d="M160.90 328.10L163.50 331.50" stroke="#444" stroke-width="0.4" fill="none" /><path d="M166.10 328.10L163.50 331.50" stroke="#444" stroke-width="0.4" fill="none" /><path d="M163.50 324.10L163.50 331.50" stroke="#444" stroke-width="0.4" fill="none" /><path d="M158.50 331.50L183.50 331.50" stroke="#999" stroke-width="0.4" fill="none" /><text x="153.50" y="323.10" font-size="4.4" fill="#111" text-anchor="middle" font-weight="normal" font-family="Liberation Sans" >+0.120</text><path d="M127.00 326.30L143.00 326.30" stroke="#444" stroke-width="0.4" fill="none" /><text x="135.00" y="325.00" font-size="4" fill="#333" text-anchor="middle" font-weight="normal" font-family="Liberation Sans" >-0.290</text><text x="136.00" y="330.50" font-size="3.4" fill="#333" text-anchor="middle" font-weight="normal" font-family="Liberation Sans" >ур.з.</text><path d="M143.00 326.30L147.00 333.50" stroke="#444" stroke-width="0.4" fill="none" /><path d="M151.00 326.30L147.00 333.50" stroke="#444" stroke-width="0.4" fill="none" /><path d="M140.00 333.50L180.00 333.50" stroke="#666" stroke-width="0.4" fill="none" /><path d="M165.00 203.80L226.00 203.80" stroke="#bbb" stroke-width="0.4" fill="none" /><path d="M165.00 236.00L178.00 236.00" stroke="#bbb" stroke-width="0.4" fill="none" /><path d="M638.00 228.60L620.00 228.60" stroke="#444" stroke-width="0.4" fill="none" /><path d="M617.40 232.60L620.00 236.00" stroke="#444" stroke-width="0.4" fill="none" /><path d="M622.60 232.60L620.00 236.00" stroke="#444" stroke-width="0.4" fill="none" /><path d="M620.00 228.60L620.00 236.00" stroke="#444" stroke-width="0.4" fill="none" /><path d="M600.00 236.00L625.00 236.00" stroke="#999" stroke-width="0.4" fill="none" /><text x="629.00" y="227.60" font-size="4.4" fill="#111" text-anchor="middle" font-weight="normal" font-family="Liberation Sans" >+12.960</text><path d="M638.00 243.80L620.00 243.80" stroke="#444" stroke-width="0.4" fill="none" /><path d="M617.40 247.80L620.00 251.20" stroke="#444" stroke-width="0.4" fill="none" /><path d="M622.60 247.80L620.00 251.20" stroke="#444" stroke-width="0.4" fill="none" /><path d="M620.00 243.80L620.00 251.20" stroke="#444" stroke-width="0.4" fill="none" /><path d="M600.00 251.20L625.00 251.20" stroke="#999" stroke-width="0.4" fill="none" /><text x="629.00" y="242.80" font-size="4.4" fill="#111" text-anchor="middle" font-weight="normal" font-family="Liberation Sans" >+10.950</text><path d="M638.00 264.10L620.00 264.10" stroke="#444" stroke-width="0.4" fill="none" /><path d="M617.40 268.10L620.00 271.50" stroke="#444" stroke-width="0.4" fill="none" /><path d="M622.60 268.10L620.00 271.50" stroke="#444" stroke-width="0.4" fill="none" /><path d="M620.00 264.10L620.00 271.50" stroke="#444" stroke-width="0.4" fill="none" /><path d="M600.00 271.50L625.00 271.50" stroke="#999" stroke-width="0.4" fill="none" /><text x="629.00" y="263.10" font-size="4.4" fill="#111" text-anchor="middle" font-weight="normal" font-family="Liberation Sans" >+8.250</text><path d="M638.00 272.60L620.00 272.60" stroke="#444" stroke-width="0.4" fill="none" /><path d="M617.40 276.60L620.00 280.00" stroke="#444" stroke-width="0.4" fill="none" /><path d="M622.60 276.60L620.00 280.00" stroke="#444" stroke-width="0.4" fill="none" /><path d="M620.00 272.60L620.00 280.00" stroke="#444" stroke-width="0.4" fill="none" /><path d="M600.00 280.00L625.00 280.00" stroke="#999" stroke-width="0.4" fill="none" /><text x="629.00" y="271.60" font-size="4.4" fill="#111" text-anchor="middle" font-weight="normal" font-family="Liberation Sans" >+7.050</text><path d="M638.00 293.10L620.00 293.10" stroke="#444" stroke-width="0.4" fill="none" /><path d="M617.40 297.10L620.00 300.50" stroke="#444" stroke-width="0.4" fill="none" /><path d="M622.60 297.10L620.00 300.50" stroke="#444" stroke-width="0.4" fill="none" /><path d="M620.00 293.10L620.00 300.50" stroke="#444" stroke-width="0.4" fill="none" /><path d="M600.00 300.50L625.00 300.50" stroke="#999" stroke-width="0.4" fill="none" /><text x="629.00" y="292.10" font-size="4.4" fill="#111" text-anchor="middle" font-weight="normal" font-family="Liberation Sans" >+4.350</text><path d="M638.00 301.90L620.00 301.90" stroke="#444" stroke-width="0.4" fill="none" /><path d="M617.40 305.90L620.00 309.30" stroke="#444" stroke-width="0.4" fill="none" /><path d="M622.60 305.90L620.00 309.30" stroke="#444" stroke-width="0.4" fill="none" /><path d="M620.00 301.90L620.00 309.30" stroke="#444" stroke-width="0.4" fill="none" /><path d="M600.00 309.30L625.00 309.30" stroke="#999" stroke-width="0.4" fill="none" /><text x="629.00" y="300.90" font-size="4.4" fill="#111" text-anchor="middle" font-weight="normal" font-family="Liberation Sans" >+3.150</text><path d="M638.00 322.10L620.00 322.10" stroke="#444" stroke-width="0.4" fill="none" /><path d="M617.40 326.10L620.00 329.50" stroke="#444" stroke-width="0.4" fill="none" /><path d="M622.60 326.10L620.00 329.50" stroke="#444" stroke-width="0.4" fill="none" /><path d="M620.00 322.10L620.00 329.50" stroke="#444" stroke-width="0.4" fill="none" /><path d="M600.00 329.50L625.00 329.50" stroke="#999" stroke-width="0.4" fill="none" /><text x="629.00" y="321.10" font-size="4.4" fill="#111" text-anchor="middle" font-weight="normal" font-family="Liberation Sans" >+0.450</text><text x="636.00" y="327.50" font-size="3.8" fill="#333" text-anchor="middle" font-weight="normal" font-family="Liberation Sans" >-0.450</text><text x="637.00" y="332.50" font-size="3.2" fill="#333" text-anchor="middle" font-weight="normal" font-family="Liberation Sans" >ур.з.</text><path d="M626.00 336.00L640.00 336.00" stroke="#444" stroke-width="0.4" fill="none" /><rect x="347.00" y="179.00" width="14" height="19" fill="#ffffff" stroke="#000" stroke-width="1.200"/><rect x="348.80" y="180.80" width="10.400" height="15.400" fill="none" stroke="#555" stroke-width=".4"/><text x="354.00" y="190.80" font-size="6.5" fill="#222" text-anchor="middle" font-weight="normal" font-family="Liberation Sans" >3</text><rect x="442.50" y="179.50" width="14" height="19" fill="#ffffff" stroke="#000" stroke-width="1.200"/><rect x="444.30" y="181.30" width="10.400" height="15.400" fill="none" stroke="#555" stroke-width=".4"/><text x="449.50" y="191.30" font-size="6.5" fill="#222" text-anchor="middle" font-weight="normal" font-family="Liberation Sans" >6</text><rect x="482.70" y="179.00" width="14" height="19" fill="#ffffff" stroke="#000" stroke-width="1.200"/><rect x="484.50" y="180.80" width="10.400" height="15.400" fill="none" stroke="#555" stroke-width=".4"/><text x="489.70" y="190.80" font-size="6.5" fill="#222" text-anchor="middle" font-weight="normal" font-family="Liberation Sans" >1</text><rect x="553.50" y="179.50" width="14" height="19" fill="#ffffff" stroke="#000" stroke-width="1.200"/><rect x="555.30" y="181.30" width="10.400" height="15.400" fill="none" stroke="#555" stroke-width=".4"/><text x="560.50" y="191.30" font-size="6.5" fill="#222" text-anchor="middle" font-weight="normal" font-family="Liberation Sans" >4</text><rect x="267.50" y="340.80" width="14" height="19" fill="#ffffff" stroke="#000" stroke-width="1.200"/><rect x="269.30" y="342.60" width="10.400" height="15.400" fill="none" stroke="#555" stroke-width=".4"/><text x="274.50" y="352.60" font-size="6.5" fill="#222" text-anchor="middle" font-weight="normal" font-family="Liberation Sans" >5</text><rect x="309.00" y="340.80" width="14" height="19" fill="#ffffff" stroke="#000" stroke-width="1.200"/><rect x="310.80" y="342.60" width="10.400" height="15.400" fill="none" stroke="#555" stroke-width=".4"/><text x="316.00" y="352.60" font-size="6.5" fill="#222" text-anchor="middle" font-weight="normal" font-family="Liberation Sans" >2</text><rect x="434.70" y="340.80" width="14" height="19" fill="#ffffff" stroke="#000" stroke-width="1.200"/><rect x="436.50" y="342.60" width="10.400" height="15.400" fill="none" stroke="#555" stroke-width=".4"/><text x="441.70" y="352.60" font-size="6.5" fill="#222" text-anchor="middle" font-weight="normal" font-family="Liberation Sans" >7</text><rect x="601.80" y="340.80" width="14" height="19" fill="#ffffff" stroke="#000" stroke-width="1.200"/><rect x="603.60" y="342.60" width="10.400" height="15.400" fill="none" stroke="#555" stroke-width=".4"/><text x="608.80" y="352.60" font-size="6.5" fill="#222" text-anchor="middle" font-weight="normal" font-family="Liberation Sans" >10</text><path d="M354.00 198.00L354.00 209.00" stroke="#000" stroke-width="0.5" fill="none" /><circle cx="354" cy="209" r=".8" fill="#000"/><path d="M449.50 198.50L449.50 262.00" stroke="#000" stroke-width="0.4" fill="none" /><path d="M489.70 198.00L489.70 213.50" stroke="#000" stroke-width="0.5" fill="none" /><circle cx="489.700" cy="213.500" r=".8" fill="#000"/><path d="M560.50 198.50L560.50 272.50" stroke="#000" stroke-width="0.4" fill="none" /><circle cx="560.500" cy="272.500" r=".8" fill="#000"/><path d="M274.50 334.00L274.50 341.00" stroke="#000" stroke-width="0.4" fill="none" /><path d="M316.00 325.00L316.00 341.00" stroke="#000" stroke-width="0.4" fill="none" /><path d="M441.70 325.00L441.70 341.00" stroke="#000" stroke-width="0.4" fill="none" /><circle cx="441.700" cy="325" r=".8" fill="#000"/><circle cx="316" cy="325" r=".8" fill="#000"/><path d="M608.80 334.00L608.80 341.00" stroke="#000" stroke-width="0.4" fill="none" /><text x="400.50" y="181.00" font-size="8.8" fill="#111" text-anchor="middle" font-weight="bold" font-family="Liberation Sans" text-decoration="underline">Фасад 1-15</text><path d="M377.30 182.60L424.30 182.60" stroke="#111" stroke-width="0.8" fill="none" /><path d="M177.00 375.20L598.90 375.20" stroke="#333" stroke-width="0.45" fill="none" /><path d="M177.00 382.80L598.90 382.80" stroke="#333" stroke-width="0.45" fill="none" /><path d="M178.50 376.70L181.50 373.70" stroke="#111" stroke-width="0.8" fill="none" /><path d="M226.50 376.70L229.50 373.70" stroke="#111" stroke-width="0.8" fill="none" /><path d="M249.90 376.70L252.90 373.70" stroke="#111" stroke-width="0.8" fill="none" /><path d="M262.50 376.70L265.50 373.70" stroke="#111" stroke-width="0.8" fill="none" /><path d="M293.50 376.70L296.50 373.70" stroke="#111" stroke-width="0.8" fill="none" /><path d="M296.30 376.70L299.30 373.70" stroke="#111" stroke-width="0.8" fill="none" /><path d="M338.70 376.70L341.70 373.70" stroke="#111" stroke-width="0.8" fill="none" /><path d="M341.50 376.70L344.50 373.70" stroke="#111" stroke-width="0.8" fill="none" /><path d="M363.30 376.70L366.30 373.70" stroke="#111" stroke-width="0.8" fill="none" /><path d="M386.80 376.70L389.80 373.70" stroke="#111" stroke-width="0.8" fill="none" /><path d="M431.10 376.70L434.10 373.70" stroke="#111" stroke-width="0.8" fill="none" /><path d="M476.10 376.70L479.10 373.70" stroke="#111" stroke-width="0.8" fill="none" /><path d="M523.50 376.70L526.50 373.70" stroke="#111" stroke-width="0.8" fill="none" /><path d="M546.80 376.70L549.80 373.70" stroke="#111" stroke-width="0.8" fill="none" /><path d="M594.40 376.70L597.40 373.70" stroke="#111" stroke-width="0.8" fill="none" /><path d="M178.50 384.30L181.50 381.30" stroke="#111" stroke-width="0.8" fill="none" /><path d="M594.40 384.30L597.40 381.30" stroke="#111" stroke-width="0.8" fill="none" /><text x="204.00" y="373.60" font-size="4.3" fill="#111" text-anchor="middle" font-weight="normal" font-family="Liberation Sans" >8370</text><text x="239.70" y="373.60" font-size="4.3" fill="#111" text-anchor="middle" font-weight="normal" font-family="Liberation Sans" >3120</text><text x="257.70" y="373.60" font-size="4.3" fill="#111" text-anchor="middle" font-weight="normal" font-family="Liberation Sans" >1740</text><text x="279.50" y="373.60" font-size="4.3" fill="#111" text-anchor="middle" font-weight="normal" font-family="Liberation Sans" >4210</text><text x="353.90" y="373.60" font-size="4.3" fill="#111" text-anchor="middle" font-weight="normal" font-family="Liberation Sans" >2880</text><text x="376.55" y="373.60" font-size="4.3" fill="#111" text-anchor="middle" font-weight="normal" font-family="Liberation Sans" >3120</text><text x="410.45" y="373.60" font-size="4.3" fill="#111" text-anchor="middle" font-weight="normal" font-family="Liberation Sans" >6000</text><text x="455.10" y="373.60" font-size="4.3" fill="#111" text-anchor="middle" font-weight="normal" font-family="Liberation Sans" >6000</text><text x="501.30" y="373.60" font-size="4.3" fill="#111" text-anchor="middle" font-weight="normal" font-family="Liberation Sans" >6370</text><text x="536.65" y="373.60" font-size="4.3" fill="#111" text-anchor="middle" font-weight="normal" font-family="Liberation Sans" >3120</text><text x="572.10" y="373.60" font-size="4.3" fill="#111" text-anchor="middle" font-weight="normal" font-family="Liberation Sans" >6370</text><text x="376.50" y="381.40" font-size="4.3" fill="#111" text-anchor="middle" font-weight="normal" font-family="Liberation Sans" >55720</text><text x="302.50" y="373.60" font-size="4" fill="#333" text-anchor="middle" font-weight="normal" font-family="Liberation Sans" >430</text><text x="319.50" y="373.60" font-size="4" fill="#333" text-anchor="middle" font-weight="normal" font-family="Liberation Sans" >5840</text><text x="335.50" y="373.60" font-size="4" fill="#333" text-anchor="middle" font-weight="normal" font-family="Liberation Sans" >450</text><path d="M369.00 379.00L383.00 379.00" stroke="#333" stroke-width="0.4" fill="none" /><circle cx="180.00" cy="392.60" r="5.800" fill="#fff" stroke="#333" stroke-width=".6"/><text x="180.00" y="394.70" font-size="5.8" fill="#222" text-anchor="middle" font-weight="normal" font-family="Liberation Sans" >1</text><path d="M180.00 375.20L180.00 386.80" stroke="#c4c4c4" stroke-width="0.4" fill="none" /><circle cx="228.00" cy="392.60" r="5.800" fill="#fff" stroke="#333" stroke-width=".6"/><text x="228.00" y="394.70" font-size="5.8" fill="#222" text-anchor="middle" font-weight="normal" font-family="Liberation Sans" >2</text><path d="M228.00 375.20L228.00 386.80" stroke="#c4c4c4" stroke-width="0.4" fill="none" /><circle cx="251.40" cy="392.60" r="5.800" fill="#fff" stroke="#333" stroke-width=".6"/><text x="251.40" y="394.70" font-size="5.8" fill="#222" text-anchor="middle" font-weight="normal" font-family="Liberation Sans" >3</text><path d="M251.40 375.20L251.40 386.80" stroke="#c4c4c4" stroke-width="0.4" fill="none" /><circle cx="264.00" cy="392.60" r="5.800" fill="#fff" stroke="#333" stroke-width=".6"/><text x="264.00" y="394.70" font-size="5.8" fill="#222" text-anchor="middle" font-weight="normal" font-family="Liberation Sans" >4</text><path d="M264.00 375.20L264.00 386.80" stroke="#c4c4c4" stroke-width="0.4" fill="none" /><circle cx="295.00" cy="392.60" r="5.800" fill="#fff" stroke="#333" stroke-width=".6"/><text x="295.00" y="394.70" font-size="5.8" fill="#222" text-anchor="middle" font-weight="normal" font-family="Liberation Sans" >5</text><path d="M295.00 375.20L295.00 386.80" stroke="#c4c4c4" stroke-width="0.4" fill="none" /><circle cx="310.30" cy="392.60" r="5.800" fill="#fff" stroke="#333" stroke-width=".6"/><text x="310.30" y="394.70" font-size="5.8" fill="#222" text-anchor="middle" font-weight="normal" font-family="Liberation Sans" >6</text><path d="M310.30 386.80L298.50 377.00" stroke="#999" stroke-width="0.4" fill="none" /><circle cx="330.00" cy="392.60" r="5.800" fill="#fff" stroke="#333" stroke-width=".6"/><text x="330.00" y="394.70" font-size="5.8" fill="#222" text-anchor="middle" font-weight="normal" font-family="Liberation Sans" >7</text><path d="M330.00 386.80L339.50 377.00" stroke="#999" stroke-width="0.4" fill="none" /><circle cx="343.00" cy="392.60" r="5.800" fill="#fff" stroke="#333" stroke-width=".6"/><text x="343.00" y="394.70" font-size="5.8" fill="#222" text-anchor="middle" font-weight="normal" font-family="Liberation Sans" >8</text><path d="M343.00 375.20L343.00 386.80" stroke="#c4c4c4" stroke-width="0.4" fill="none" /><circle cx="364.80" cy="392.60" r="5.800" fill="#fff" stroke="#333" stroke-width=".6"/><text x="364.80" y="394.70" font-size="5.8" fill="#222" text-anchor="middle" font-weight="normal" font-family="Liberation Sans" >9</text><path d="M364.80 375.20L364.80 386.80" stroke="#c4c4c4" stroke-width="0.4" fill="none" /><circle cx="388.30" cy="392.60" r="5.800" fill="#fff" stroke="#333" stroke-width=".6"/><text x="388.30" y="394.70" font-size="5.8" fill="#222" text-anchor="middle" font-weight="normal" font-family="Liberation Sans" >10</text><path d="M388.30 375.20L388.30 386.80" stroke="#c4c4c4" stroke-width="0.4" fill="none" /><circle cx="432.60" cy="392.60" r="5.800" fill="#fff" stroke="#333" stroke-width=".6"/><text x="432.60" y="394.70" font-size="5.8" fill="#222" text-anchor="middle" font-weight="normal" font-family="Liberation Sans" >11</text><path d="M432.60 375.20L432.60 386.80" stroke="#c4c4c4" stroke-width="0.4" fill="none" /><circle cx="477.60" cy="392.60" r="5.800" fill="#fff" stroke="#333" stroke-width=".6"/><text x="477.60" y="394.70" font-size="5.8" fill="#222" text-anchor="middle" font-weight="normal" font-family="Liberation Sans" >12</text><path d="M477.60 375.20L477.60 386.80" stroke="#c4c4c4" stroke-width="0.4" fill="none" /><circle cx="525.00" cy="392.60" r="5.800" fill="#fff" stroke="#333" stroke-width=".6"/><text x="525.00" y="394.70" font-size="5.8" fill="#222" text-anchor="middle" font-weight="normal" font-family="Liberation Sans" >13</text><path d="M525.00 375.20L525.00 386.80" stroke="#c4c4c4" stroke-width="0.4" fill="none" /><circle cx="548.30" cy="392.60" r="5.800" fill="#fff" stroke="#333" stroke-width=".6"/><text x="548.30" y="394.70" font-size="5.8" fill="#222" text-anchor="middle" font-weight="normal" font-family="Liberation Sans" >14</text><path d="M548.30 375.20L548.30 386.80" stroke="#c4c4c4" stroke-width="0.4" fill="none" /><circle cx="595.90" cy="392.60" r="5.800" fill="#fff" stroke="#333" stroke-width=".6"/><text x="595.90" y="394.70" font-size="5.8" fill="#222" text-anchor="middle" font-weight="normal" font-family="Liberation Sans" >15</text><path d="M595.90 375.20L595.90 386.80" stroke="#c4c4c4" stroke-width="0.4" fill="none" /></g><rect x="124.500" y="171.500" width="524" height="234" fill="none" stroke="#ff00ff" stroke-width="1.300"/><rect x="124.5" y="171.5" width="9" height="9" fill="#fff" stroke="#ff00ff" stroke-width="1.200"/><rect x="639.5" y="171.5" width="9" height="9" fill="#fff" stroke="#ff00ff" stroke-width="1.200"/><rect x="124.5" y="396.5" width="9" height="9" fill="#fff" stroke="#ff00ff" stroke-width="1.200"/><rect x="639.5" y="396.5" width="9" height="9" fill="#fff" stroke="#ff00ff" stroke-width="1.200"/><path d="M168 236H188M177.500 227V248.500" stroke="#ff00ff" stroke-width="1.100"/><text x="167.600" y="249.600" font-size="13" fill="#ff00ff" stroke="#ff00ff" stroke-width=".2" font-family="Liberation Sans">1</text><path d="M589.500 330.700H609M599.200 322V342" stroke="#ff00ff" stroke-width="1.100"/><text x="589.600" y="345.300" font-size="13" fill="#ff00ff" stroke="#ff00ff" stroke-width=".2" font-family="Liberation Sans">2</text><path d="M857.400 236L891.620 155.680L887.420 153.800L899.800 144L900.760 159.760L896.560 157.880L859.600 237z" fill="#000" opacity=".35" transform="translate(2.500,3)" filter="url(#blur)"/><path d="M857.400 236L891.620 155.680L887.420 153.800L899.800 144L900.760 159.760L896.560 157.880L859.600 237z" fill="#c00000"/></svg><div id="tb1"></div><div id="tb2"></div>
<div class="abs" id="z100" style="left:640px;top:6px;height:20px;line-height:20px;font-size:12.400px;letter-spacing:.800px;color:#505050">100</div>
<div class="abs" style="left:678px;top:15px;width:68px;height:1.500px;background:#4a4a4a"></div>
<div class="abs" style="left:701px;top:10px;width:12px;height:12px;border-radius:6px;background:#4a4a4a"></div>
<svg class="abs" style="left:759px;top:4px" width="24" height="24" viewBox="0 0 24 24" ><path d="M22 4c0-1.1-.9-2-2-2H4c-1.1 0-2 .9-2 2v12c0 1.1.9 2 2 2h14l4 4V4zm-2 13.17L18.83 16H4V4h16v13.17zM13 5h-2v4H7v2h4v4h2v-4h4V9h-4z" fill="#484848" transform="translate(24,0) scale(-1,1)"/></svg>
<svg class="abs" style="left:791px;top:4px" width="24" height="24" viewBox="0 0 24 24" ><path d="M3 6h18v2H3zM3 11h18v2H3zM3 16h10.500v2H3z" fill="#484848"/></svg>
<svg class="abs" style="left:818px;top:1.7999999999999972px" width="28" height="28" viewBox="0 0 24 24" ><path d="M7 14H5v5h5v-2H7v-3zm-2-4h2V7h3V5H5v5zm12 7h-3v2h5v-5h-2v3zM14 5v2h3v3h2V5h-5z" fill="#8ab0f5"/></svg>
<svg class="abs" style="left:848px;top:7px" width="26" height="20" viewBox="0 0 26 20" ><g fill="none" stroke="#8ab0f5" stroke-width="1.700" stroke-linecap="round"><path d="M11 12.200H6.600a4 4 0 0 1 0-8h4.400M14 4.200H18.500a4 4 0 0 1 4 3.600M7.500 8.200h9.500"/></g><rect x="16.300" y="11.500" width="7.700" height="7" rx=".9" fill="#8ab0f5"/><path d="M18.100 11.800v-1.500a2.050 2.050 0 0 1 4.100 0v1.500" fill="none" stroke="#8ab0f5" stroke-width="1.300"/></svg>
<svg class="abs" style="left:819px;top:33.7px" width="24.5" height="24.2" viewBox="0 0 24 24" ><path d="M9.64 7.64c.23-.5.36-1.05.36-1.64 0-2.21-1.79-4-4-4S2 3.79 2 6s1.79 4 4 4c.59 0 1.14-.13 1.64-.36L10 12l-2.36 2.36C7.14 14.13 6.59 14 6 14c-2.21 0-4 1.79-4 4s1.79 4 4 4 4-1.79 4-4c0-.59-.13-1.14-.36-1.64L12 14l7 7h3v-1L9.64 7.64zM6 8c-1.1 0-2-.89-2-2s.9-2 2-2 2 .89 2 2-.9 2-2 2zm0 12c-1.1 0-2-.89-2-2s.9-2 2-2 2 .89 2 2-.9 2-2 2zm6-7.5c-.28 0-.5-.22-.5-.5s.22-.5.5-.5.5.22.5.5-.22.5-.5.5zM19 3l-6 6 2 2 7-7V3h-3z" fill="#444"/></svg>
<svg class="abs" style="left:0;top:0" width="886" height="60"><g stroke="#8ab0f5" stroke-width="1.800"><path d="M863.7 36.10000000000001v7.300M863.7 48.400000000000006v7.300M853.9000000000001 45.900000000000006h7.300M866.2 45.900000000000006h7.300"/></g></svg></div>
<div class="abs" style="left:971px;top:444px;width:2px;height:27px;background:#3d9bc2"></div>
<svg class="abs gs" style="left:0;top:0" width="1833" height="812" viewBox="0 0 1833 812"><defs><linearGradient id="slabg" gradientUnits="userSpaceOnUse" x1="1056" x2="1656"><stop offset="0" stop-color="#8b8ba2"/><stop offset=".82" stop-color="#8a8aa0"/><stop offset=".92" stop-color="#7a7a8f"/><stop offset=".97" stop-color="#5c5c6c"/><stop offset="1" stop-color="#4c4c58"/></linearGradient></defs><path d="M1056 456L1148 448.200H1564L1640 459.500L1725 465.100V468H1056z" fill="#484852"/><path d="M1118 454.800L1146 450.200L1148 453H1277V455.700H1118z" fill="#0a3a0a"/><path d="M1433 452.500H1566L1596 455L1601 457.500H1433z" fill="#0a3a0a"/><path d="M1152 452.800H1277M1433 452.800H1560" stroke="#7fae7f" stroke-width=".8"/><path d="M1056 456L1180 457.400H1545L1601 458.500C1620 460 1632 462.500 1638 463.500L1655.700 465.600L1637.400 467.800V488C1618 485.500 1600 484 1583.600 483.600L1563 484.200H1056z" fill="url(#slabg)"/><path d="M1637.400 467.800L1725 465.100V496H1637.400z" fill="#8b8ba2"/><path d="M1151.0 484.300V490.8q0.70 3 1.40 0V484.300z" fill="#bdbdbd"/><path d="M1157.0 484.300V490.8q0.70 3 1.40 0V484.300z" fill="#bdbdbd"/><path d="M1160.2 484.300V492.7q0.70 3 1.40 0V484.300z" fill="#bdbdbd"/><path d="M1166.2 484.300V489.6q0.70 3 1.40 0V484.300z" fill="#bdbdbd"/><path d="M1169.4 484.300V493.3q0.70 3 1.40 0V484.300z" fill="#bdbdbd"/><path d="M1173.8 484.300V493.0q0.70 3 1.40 0V484.300z" fill="#bdbdbd"/><path d="M1176.4 484.300V489.8q0.70 3 1.40 0V484.300z" fill="#bdbdbd"/><path d="M1182.4 484.300V487.2q0.70 3 1.40 0V484.300z" fill="#bdbdbd"/><path d="M1185.6 484.300V489.6q0.70 3 1.40 0V484.300z" fill="#bdbdbd"/><path d="M1188.2 484.300V493.6q0.70 3 1.40 0V484.300z" fill="#bdbdbd"/><path d="M1191.4 484.300V487.8q0.70 3 1.40 0V484.300z" fill="#bdbdbd"/><path d="M1194.0 484.300V488.6q0.70 3 1.40 0V484.300z" fill="#bdbdbd"/><path d="M1198.4 484.300V490.9q0.70 3 1.40 0V484.300z" fill="#bdbdbd"/><path d="M1201.6 484.300V490.4q0.70 3 1.40 0V484.300z" fill="#bdbdbd"/><path d="M1206.0 484.300V490.5q0.70 3 1.40 0V484.300z" fill="#bdbdbd"/><path d="M1208.6 484.300V490.8q0.70 3 1.40 0V484.300z" fill="#bdbdbd"/><path d="M1213.0 484.300V491.2q0.70 3 1.40 0V484.300z" fill="#bdbdbd"/><path d="M1215.6 484.300V489.0q0.70 3 1.40 0V484.300z" fill="#bdbdbd"/><path d="M1220.0 484.300V488.7q0.70 3 1.40 0V484.300z" fill="#bdbdbd"/><path d="M1224.4 484.300V493.8q0.70 3 1.40 0V484.300z" fill="#bdbdbd"/><path d="M1227.0 484.300V491.2q0.70 3 1.40 0V484.300z" fill="#bdbdbd"/><path d="M1231.4 484.300V491.3q0.70 3 1.40 0V484.300z" fill="#bdbdbd"/><path d="M1234.0 484.300V488.1q0.70 3 1.40 0V484.300z" fill="#bdbdbd"/><path d="M1236.6 484.300V492.5q0.70 3 1.40 0V484.300z" fill="#bdbdbd"/><path d="M1239.2 484.300V490.7q0.70 3 1.40 0V484.300z" fill="#bdbdbd"/><path d="M1245.2 484.300V491.1q0.70 3 1.40 0V484.300z" fill="#bdbdbd"/><path d="M1248.4 484.300V488.6q0.70 3 1.40 0V484.300z" fill="#bdbdbd"/><path d="M1252.8 484.300V491.6q0.70 3 1.40 0V484.300z" fill="#bdbdbd"/><path d="M1257.2 484.300V491.7q0.70 3 1.40 0V484.300z" fill="#bdbdbd"/><path d="M1263.2 484.300V488.7q0.70 3 1.40 0V484.300z" fill="#bdbdbd"/><path d="M1265.8 484.300V493.1q0.70 3 1.40 0V484.300z" fill="#bdbdbd"/><path d="M1268.4 484.300V493.9q0.70 3 1.40 0V484.300z" fill="#bdbdbd"/><path d="M1274.4 484.300V496.9q0.70 3 1.40 0V484.300z" fill="#bdbdbd"/><path d="M1277.6 484.300V497.7q0.70 3 1.40 0V484.300z" fill="#bdbdbd"/><path d="M1280.8 484.300V499.4q0.70 3 1.40 0V484.300z" fill="#bdbdbd"/><path d="M1284.0 484.300V495.6q0.70 3 1.40 0V484.300z" fill="#bdbdbd"/><path d="M1287.2 484.300V499.6q0.70 3 1.40 0V484.300z" fill="#bdbdbd"/><path d="M1293.2 484.300V501.7q0.70 3 1.40 0V484.300z" fill="#bdbdbd"/><path d="M1299.2 484.300V495.6q0.70 3 1.40 0V484.300z" fill="#bdbdbd"/><path d="M1301.8 484.300V500.6q0.70 3 1.40 0V484.300z" fill="#bdbdbd"/><path d="M1306.2 484.300V495.5q0.70 3 1.40 0V484.300z" fill="#bdbdbd"/><path d="M1308.8 484.300V501.0q0.70 3 1.40 0V484.300z" fill="#bdbdbd"/><path d="M1314.8 484.300V495.5q0.70 3 1.40 0V484.300z" fill="#bdbdbd"/><path d="M1317.4 484.300V502.2q0.70 3 1.40 0V484.300z" fill="#bdbdbd"/><path d="M1320.6 484.300V501.0q0.70 3 1.40 0V484.300z" fill="#bdbdbd"/><path d="M1325.0 484.300V502.4q0.70 3 1.40 0V484.300z" fill="#bdbdbd"/><path d="M1329.4 484.300V496.7q0.70 3 1.40 0V484.300z" fill="#bdbdbd"/><path d="M1335.4 484.300V502.0q0.70 3 1.40 0V484.300z" fill="#bdbdbd"/><path d="M1338.0 484.300V501.0q0.70 3 1.40 0V484.300z" fill="#bdbdbd"/><path d="M1341.2 484.300V502.4q0.70 3 1.40 0V484.300z" fill="#bdbdbd"/><path d="M1345.6 484.300V499.9q0.70 3 1.40 0V484.300z" fill="#bdbdbd"/><path d="M1351.6 484.300V501.6q0.70 3 1.40 0V484.300z" fill="#bdbdbd"/><path d="M1357.6 484.300V496.7q0.70 3 1.40 0V484.300z" fill="#bdbdbd"/><path d="M1360.8 484.300V496.4q0.70 3 1.40 0V484.300z" fill="#bdbdbd"/><path d="M1364.0 484.300V498.1q0.70 3 1.40 0V484.300z" fill="#bdbdbd"/><path d="M1368.4 484.300V496.1q0.70 3 1.40 0V484.300z" fill="#bdbdbd"/><path d="M1371.6 484.300V497.4q0.70 3 1.40 0V484.300z" fill="#bdbdbd"/><path d="M1374.8 484.300V497.3q0.70 3 1.40 0V484.300z" fill="#bdbdbd"/><path d="M1378.0 484.300V497.7q0.70 3 1.40 0V484.300z" fill="#bdbdbd"/><path d="M1384.0 484.300V496.3q0.70 3 1.40 0V484.300z" fill="#bdbdbd"/><path d="M1386.6 484.300V499.5q0.70 3 1.40 0V484.300z" fill="#bdbdbd"/><path d="M1389.2 484.300V501.7q0.70 3 1.40 0V484.300z" fill="#bdbdbd"/><path d="M1393.6 484.300V500.8q0.70 3 1.40 0V484.300z" fill="#bdbdbd"/><path d="M1399.6 484.300V500.7q0.70 3 1.40 0V484.300z" fill="#bdbdbd"/><path d="M1405.6 484.300V500.4q0.70 3 1.40 0V484.300z" fill="#bdbdbd"/><path d="M1408.8 484.300V496.0q0.70 3 1.40 0V484.300z" fill="#bdbdbd"/><path d="M1411.4 484.300V501.6q0.70 3 1.40 0V484.300z" fill="#bdbdbd"/><path d="M1417.4 484.300V498.6q0.70 3 1.40 0V484.300z" fill="#bdbdbd"/><path d="M1420.0 484.300V500.5q0.70 3 1.40 0V484.300z" fill="#bdbdbd"/><path d="M1423.2 484.300V497.3q0.70 3 1.40 0V484.300z" fill="#bdbdbd"/><path d="M1425.8 484.300V500.6q0.70 3 1.40 0V484.300z" fill="#bdbdbd"/><path d="M1431.8 484.300V500.8q0.70 3 1.40 0V484.300z" fill="#bdbdbd"/><path d="M1434.4 484.300V501.3q0.70 3 1.40 0V484.300z" fill="#bdbdbd"/><path d="M1438.8 484.300V490.3q0.70 3 1.40 0V484.300z" fill="#bdbdbd"/><path d="M1442.0 484.300V493.4q0.70 3 1.40 0V484.300z" fill="#bdbdbd"/><path d="M1445.2 484.300V487.8q0.70 3 1.40 0V484.300z" fill="#bdbdbd"/><path d="M1449.6 484.300V489.4q0.70 3 1.40 0V484.300z" fill="#bdbdbd"/><path d="M1452.8 484.300V489.9q0.70 3 1.40 0V484.300z" fill="#bdbdbd"/><path d="M1455.4 484.300V490.7q0.70 3 1.40 0V484.300z" fill="#bdbdbd"/><path d="M1459.8 484.300V489.1q0.70 3 1.40 0V484.300z" fill="#bdbdbd"/><path d="M1462.4 484.300V493.9q0.70 3 1.40 0V484.300z" fill="#bdbdbd"/><path d="M1465.0 484.300V490.6q0.70 3 1.40 0V484.300z" fill="#bdbdbd"/><path d="M1469.4 484.300V491.8q0.70 3 1.40 0V484.300z" fill="#bdbdbd"/><path d="M1472.0 484.300V493.5q0.70 3 1.40 0V484.300z" fill="#bdbdbd"/><path d="M1476.4 484.300V488.8q0.70 3 1.40 0V484.300z" fill="#bdbdbd"/><path d="M1479.6 484.300V488.4q0.70 3 1.40 0V484.300z" fill="#bdbdbd"/><path d="M1484.0 484.300V491.5q0.70 3 1.40 0V484.300z" fill="#bdbdbd"/><path d="M1490.0 484.300V487.7q0.70 3 1.40 0V484.300z" fill="#bdbdbd"/><path d="M1496.0 484.300V487.4q0.70 3 1.40 0V484.300z" fill="#bdbdbd"/><path d="M1498.6 484.300V488.0q0.70 3 1.40 0V484.300z" fill="#bdbdbd"/><path d="M1501.2 484.300V489.6q0.70 3 1.40 0V484.300z" fill="#bdbdbd"/><path d="M1507.2 484.300V491.3q0.70 3 1.40 0V484.300z" fill="#bdbdbd"/><path d="M1509.8 484.300V489.7q0.70 3 1.40 0V484.300z" fill="#bdbdbd"/><path d="M1512.4 484.300V493.4q0.70 3 1.40 0V484.300z" fill="#bdbdbd"/><path d="M1515.0 484.300V487.0q0.70 3 1.40 0V484.300z" fill="#bdbdbd"/><path d="M1521.0 484.300V488.9q0.70 3 1.40 0V484.300z" fill="#bdbdbd"/><path d="M1527.0 484.300V487.5q0.70 3 1.40 0V484.300z" fill="#bdbdbd"/><path d="M1533.0 484.300V490.9q0.70 3 1.40 0V484.300z" fill="#bdbdbd"/><path d="M1535.6 484.300V490.4q0.70 3 1.40 0V484.300z" fill="#bdbdbd"/><path d="M1538.2 484.300V491.8q0.70 3 1.40 0V484.300z" fill="#bdbdbd"/><path d="M1540.8 484.300V490.6q0.70 3 1.40 0V484.300z" fill="#bdbdbd"/><path d="M1544.0 484.300V487.3q0.70 3 1.40 0V484.300z" fill="#bdbdbd"/><path d="M1546.6 484.300V490.5q0.70 3 1.40 0V484.300z" fill="#bdbdbd"/><path d="M1552.6 484.300V492.2q0.70 3 1.40 0V484.300z" fill="#bdbdbd"/><path d="M1555.2 484.300V491.4q0.70 3 1.40 0V484.300z" fill="#bdbdbd"/><path d="M1558.4 484.300V489.3q0.70 3 1.40 0V484.300z" fill="#bdbdbd"/><path d="M1153.0 484.300V496.9q1.00 3 2.00 0V484.300z" fill="#dedede"/><path d="M1159.6 484.300V495.7q1.00 3 2.00 0V484.300z" fill="#dedede"/><path d="M1168.0 484.300V497.0q1.00 3 2.00 0V484.300z" fill="#dedede"/><path d="M1173.4 484.300V498.4q1.00 3 2.00 0V484.300z" fill="#dedede"/><path d="M1180.0 484.300V499.4q1.00 3 2.00 0V484.300z" fill="#dedede"/><path d="M1188.4 484.300V494.6q1.00 3 2.00 0V484.300z" fill="#dedede"/><path d="M1193.8 484.300V494.0q1.00 3 2.00 0V484.300z" fill="#dedede"/><path d="M1202.2 484.300V499.2q1.00 3 2.00 0V484.300z" fill="#dedede"/><path d="M1208.8 484.300V499.3q1.00 3 2.00 0V484.300z" fill="#dedede"/><path d="M1214.2 484.300V497.0q1.00 3 2.00 0V484.300z" fill="#dedede"/><path d="M1218.4 484.300V495.3q1.00 3 2.00 0V484.300z" fill="#dedede"/><path d="M1225.0 484.300V494.4q1.00 3 2.00 0V484.300z" fill="#dedede"/><path d="M1229.2 484.300V497.4q1.00 3 2.00 0V484.300z" fill="#dedede"/><path d="M1235.8 484.300V493.6q1.00 3 2.00 0V484.300z" fill="#dedede"/><path d="M1244.2 484.300V497.9q1.00 3 2.00 0V484.300z" fill="#dedede"/><path d="M1252.6 484.300V495.6q1.00 3 2.00 0V484.300z" fill="#dedede"/><path d="M1261.0 484.300V498.4q1.00 3 2.00 0V484.300z" fill="#dedede"/><path d="M1265.2 484.300V498.8q1.00 3 2.00 0V484.300z" fill="#dedede"/><path d="M1269.4 484.300V495.6q1.00 3 2.00 0V484.300z" fill="#dedede"/><path d="M1276.0 484.300V504.9q1.00 3 2.00 0V484.300z" fill="#dedede"/><path d="M1282.6 484.300V504.3q1.00 3 2.00 0V484.300z" fill="#dedede"/><path d="M1286.8 484.300V504.4q1.00 3 2.00 0V484.300z" fill="#dedede"/><path d="M1295.2 484.300V505.9q1.00 3 2.00 0V484.300z" fill="#dedede"/><path d="M1299.4 484.300V503.3q1.00 3 2.00 0V484.300z" fill="#dedede"/><path d="M1306.0 484.300V507.6q1.00 3 2.00 0V484.300z" fill="#dedede"/><path d="M1311.4 484.300V503.1q1.00 3 2.00 0V484.300z" fill="#dedede"/><path d="M1315.6 484.300V505.9q1.00 3 2.00 0V484.300z" fill="#dedede"/><path d="M1322.2 484.300V501.8q1.00 3 2.00 0V484.300z" fill="#dedede"/><path d="M1327.6 484.300V507.9q1.00 3 2.00 0V484.300z" fill="#dedede"/><path d="M1336.0 484.300V507.5q1.00 3 2.00 0V484.300z" fill="#dedede"/><path d="M1340.2 484.300V503.5q1.00 3 2.00 0V484.300z" fill="#dedede"/><path d="M1344.4 484.300V508.1q1.00 3 2.00 0V484.300z" fill="#dedede"/><path d="M1351.0 484.300V503.3q1.00 3 2.00 0V484.300z" fill="#dedede"/><path d="M1356.4 484.300V506.4q1.00 3 2.00 0V484.300z" fill="#dedede"/><path d="M1361.8 484.300V508.8q1.00 3 2.00 0V484.300z" fill="#dedede"/><path d="M1370.2 484.300V508.5q1.00 3 2.00 0V484.300z" fill="#dedede"/><path d="M1378.6 484.300V507.9q1.00 3 2.00 0V484.300z" fill="#dedede"/><path d="M1382.8 484.300V506.5q1.00 3 2.00 0V484.300z" fill="#dedede"/><path d="M1389.4 484.300V505.8q1.00 3 2.00 0V484.300z" fill="#dedede"/><path d="M1394.8 484.300V508.7q1.00 3 2.00 0V484.300z" fill="#dedede"/><path d="M1399.0 484.300V507.8q1.00 3 2.00 0V484.300z" fill="#dedede"/><path d="M1407.4 484.300V501.7q1.00 3 2.00 0V484.300z" fill="#dedede"/><path d="M1414.0 484.300V505.2q1.00 3 2.00 0V484.300z" fill="#dedede"/><path d="M1420.6 484.300V507.4q1.00 3 2.00 0V484.300z" fill="#dedede"/><path d="M1424.8 484.300V506.7q1.00 3 2.00 0V484.300z" fill="#dedede"/><path d="M1429.0 484.300V509.2q1.00 3 2.00 0V484.300z" fill="#dedede"/><path d="M1435.6 484.300V505.1q1.00 3 2.00 0V484.300z" fill="#dedede"/><path d="M1442.2 484.300V497.1q1.00 3 2.00 0V484.300z" fill="#dedede"/><path d="M1446.4 484.300V499.3q1.00 3 2.00 0V484.300z" fill="#dedede"/><path d="M1450.6 484.300V497.6q1.00 3 2.00 0V484.300z" fill="#dedede"/><path d="M1454.8 484.300V499.6q1.00 3 2.00 0V484.300z" fill="#dedede"/><path d="M1461.4 484.300V495.5q1.00 3 2.00 0V484.300z" fill="#dedede"/><path d="M1466.8 484.300V497.2q1.00 3 2.00 0V484.300z" fill="#dedede"/><path d="M1475.2 484.300V493.4q1.00 3 2.00 0V484.300z" fill="#dedede"/><path d="M1483.6 484.300V496.4q1.00 3 2.00 0V484.300z" fill="#dedede"/><path d="M1487.8 484.300V494.9q1.00 3 2.00 0V484.300z" fill="#dedede"/><path d="M1496.2 484.300V496.8q1.00 3 2.00 0V484.300z" fill="#dedede"/><path d="M1502.8 484.300V494.4q1.00 3 2.00 0V484.300z" fill="#dedede"/><path d="M1508.2 484.300V496.8q1.00 3 2.00 0V484.300z" fill="#dedede"/><path d="M1514.8 484.300V498.5q1.00 3 2.00 0V484.300z" fill="#dedede"/><path d="M1523.2 484.300V493.4q1.00 3 2.00 0V484.300z" fill="#dedede"/><path d="M1528.6 484.300V498.6q1.00 3 2.00 0V484.300z" fill="#dedede"/><path d="M1534.0 484.300V493.3q1.00 3 2.00 0V484.300z" fill="#dedede"/><path d="M1540.6 484.300V496.4q1.00 3 2.00 0V484.300z" fill="#dedede"/><path d="M1546.0 484.300V497.7q1.00 3 2.00 0V484.300z" fill="#dedede"/><path d="M1550.2 484.300V497.0q1.00 3 2.00 0V484.300z" fill="#dedede"/><path d="M1558.6 484.300V500.8q1.00 3 2.00 0V484.300z" fill="#dedede"/><path d="M1156.0 484.300h6l-6 12.1z" fill="#9c9c9c"/><path d="M1187.0 484.300h6l-6 12.4z" fill="#9c9c9c"/><path d="M1201.0 484.300h6l-6 11.9z" fill="#9c9c9c"/><path d="M1220.0 484.300h6l-6 8.5z" fill="#9c9c9c"/><path d="M1251.0 484.300h6l-6 11.3z" fill="#9c9c9c"/><path d="M1282.0 484.300h6l-6 10.2z" fill="#9c9c9c"/><path d="M1313.0 484.300h6l-6 11.9z" fill="#9c9c9c"/><path d="M1338.0 484.300h6l-6 11.5z" fill="#9c9c9c"/><path d="M1369.0 484.300h6l-6 12.2z" fill="#9c9c9c"/><path d="M1383.0 484.300h6l-6 9.5z" fill="#9c9c9c"/><path d="M1397.0 484.300h6l-6 15.4z" fill="#9c9c9c"/><path d="M1416.0 484.300h6l-6 13.6z" fill="#9c9c9c"/><path d="M1430.0 484.300h6l-6 8.3z" fill="#9c9c9c"/><path d="M1449.0 484.300h6l-6 9.8z" fill="#9c9c9c"/><path d="M1474.0 484.300h6l-6 10.6z" fill="#9c9c9c"/><path d="M1499.0 484.300h6l-6 10.0z" fill="#9c9c9c"/><path d="M1530.0 484.300h6l-6 8.8z" fill="#9c9c9c"/><path d="M1544.0 484.300h6l-6 14.8z" fill="#9c9c9c"/><path d="M1149.5 484.300V506.3q1.45 3 2.90 0V484.300z" fill="#ffffff"/><path d="M1162.9 484.300V506.0q1.45 3 2.90 0V484.300z" fill="#ffffff"/><path d="M1175.7 484.300V505.4q1.45 3 2.90 0V484.300z" fill="#ffffff"/><path d="M1189.1 484.300V505.9q1.45 3 2.90 0V484.300z" fill="#ffffff"/><path d="M1202.5 484.300V506.1q1.45 3 2.90 0V484.300z" fill="#ffffff"/><path d="M1215.9 484.300V505.6q1.45 3 2.90 0V484.300z" fill="#ffffff"/><path d="M1229.3 484.300V506.0q1.45 3 2.90 0V484.300z" fill="#ffffff"/><path d="M1241.5 484.300V506.0q1.45 3 2.90 0V484.300z" fill="#ffffff"/><path d="M1254.9 484.300V506.1q1.45 3 2.90 0V484.300z" fill="#ffffff"/><path d="M1267.1 484.300V505.7q1.45 3 2.90 0V484.300z" fill="#ffffff"/><path d="M1280.5 484.300V514.7q1.45 3 2.90 0V484.300z" fill="#ffffff"/><path d="M1293.3 484.300V515.0q1.45 3 2.90 0V484.300z" fill="#ffffff"/><path d="M1306.1 484.300V514.6q1.45 3 2.90 0V484.300z" fill="#ffffff"/><path d="M1318.3 484.300V514.2q1.45 3 2.90 0V484.300z" fill="#ffffff"/><path d="M1330.5 484.300V515.0q1.45 3 2.90 0V484.300z" fill="#ffffff"/><path d="M1342.7 484.300V515.0q1.45 3 2.90 0V484.300z" fill="#ffffff"/><path d="M1354.9 484.300V514.8q1.45 3 2.90 0V484.300z" fill="#ffffff"/><path d="M1367.7 484.300V514.4q1.45 3 2.90 0V484.300z" fill="#ffffff"/><path d="M1380.5 484.300V514.9q1.45 3 2.90 0V484.300z" fill="#ffffff"/><path d="M1393.3 484.300V514.6q1.45 3 2.90 0V484.300z" fill="#ffffff"/><path d="M1406.7 484.300V514.1q1.45 3 2.90 0V484.300z" fill="#ffffff"/><path d="M1419.5 484.300V514.7q1.45 3 2.90 0V484.300z" fill="#ffffff"/><path d="M1431.7 484.300V514.0q1.45 3 2.90 0V484.300z" fill="#ffffff"/><path d="M1445.1 484.300V506.2q1.45 3 2.90 0V484.300z" fill="#ffffff"/><path d="M1457.9 484.300V505.5q1.45 3 2.90 0V484.300z" fill="#ffffff"/><path d="M1471.3 484.300V506.2q1.45 3 2.90 0V484.300z" fill="#ffffff"/><path d="M1484.1 484.300V506.0q1.45 3 2.90 0V484.300z" fill="#ffffff"/><path d="M1497.5 484.300V506.4q1.45 3 2.90 0V484.300z" fill="#ffffff"/><path d="M1509.7 484.300V506.0q1.45 3 2.90 0V484.300z" fill="#ffffff"/><path d="M1521.9 484.300V505.4q1.45 3 2.90 0V484.300z" fill="#ffffff"/><path d="M1535.3 484.300V506.1q1.45 3 2.90 0V484.300z" fill="#ffffff"/><path d="M1548.7 484.300V506.0q1.45 3 2.90 0V484.300z" fill="#ffffff"/><path d="M1560.9 484.300V505.6q1.45 3 2.90 0V484.300z" fill="#ffffff"/><path d="M1155.5 484.300V504.3q1.15 3 2.30 0V484.300z" fill="#f4f4f4"/><path d="M1169.0 484.300V501.0q1.15 3 2.30 0V484.300z" fill="#f4f4f4"/><path d="M1180.5 484.300V502.7q1.15 3 2.30 0V484.300z" fill="#f4f4f4"/><path d="M1194.0 484.300V501.2q1.15 3 2.30 0V484.300z" fill="#f4f4f4"/><path d="M1211.0 484.300V504.7q1.15 3 2.30 0V484.300z" fill="#f4f4f4"/><path d="M1222.5 484.300V503.7q1.15 3 2.30 0V484.300z" fill="#f4f4f4"/><path d="M1239.5 484.300V503.3q1.15 3 2.30 0V484.300z" fill="#f4f4f4"/><path d="M1255.0 484.300V503.3q1.15 3 2.30 0V484.300z" fill="#f4f4f4"/><path d="M1270.5 484.300V504.9q1.15 3 2.30 0V484.300z" fill="#f4f4f4"/><path d="M1282.0 484.300V510.1q1.15 3 2.30 0V484.300z" fill="#f4f4f4"/><path d="M1295.5 484.300V511.9q1.15 3 2.30 0V484.300z" fill="#f4f4f4"/><path d="M1311.0 484.300V510.5q1.15 3 2.30 0V484.300z" fill="#f4f4f4"/><path d="M1328.0 484.300V509.8q1.15 3 2.30 0V484.300z" fill="#f4f4f4"/><path d="M1341.5 484.300V513.1q1.15 3 2.30 0V484.300z" fill="#f4f4f4"/><path d="M1353.0 484.300V512.2q1.15 3 2.30 0V484.300z" fill="#f4f4f4"/><path d="M1364.5 484.300V510.3q1.15 3 2.30 0V484.300z" fill="#f4f4f4"/><path d="M1381.5 484.300V511.2q1.15 3 2.30 0V484.300z" fill="#f4f4f4"/><path d="M1395.0 484.300V511.5q1.15 3 2.30 0V484.300z" fill="#f4f4f4"/><path d="M1410.5 484.300V510.3q1.15 3 2.30 0V484.300z" fill="#f4f4f4"/><path d="M1426.0 484.300V512.4q1.15 3 2.30 0V484.300z" fill="#f4f4f4"/><path d="M1437.5 484.300V510.5q1.15 3 2.30 0V484.300z" fill="#f4f4f4"/><path d="M1451.0 484.300V501.7q1.15 3 2.30 0V484.300z" fill="#f4f4f4"/><path d="M1468.0 484.300V504.5q1.15 3 2.30 0V484.300z" fill="#f4f4f4"/><path d="M1483.5 484.300V501.5q1.15 3 2.30 0V484.300z" fill="#f4f4f4"/><path d="M1499.0 484.300V501.9q1.15 3 2.30 0V484.300z" fill="#f4f4f4"/><path d="M1512.5 484.300V503.4q1.15 3 2.30 0V484.300z" fill="#f4f4f4"/><path d="M1526.0 484.300V504.7q1.15 3 2.30 0V484.300z" fill="#f4f4f4"/><path d="M1541.5 484.300V503.8q1.15 3 2.30 0V484.300z" fill="#f4f4f4"/><path d="M1553.0 484.300V505.0q1.15 3 2.30 0V484.300z" fill="#f4f4f4"/><rect x="1148.00" y="355.00" width="416.00" height="94.50" fill="#ffa17c" /><rect x="1148.00" y="448.80" width="416.00" height="4.20" fill="#4a4f66" /><rect x="1242.90" y="346.30" width="62.10" height="8.70" fill="#f79a76" /><rect x="1305.00" y="347.60" width="5.60" height="7.40" fill="#f79a76" /><rect x="1311.00" y="344.50" width="29.30" height="10.50" fill="#f79a76" /><rect x="1340.30" y="347.60" width="5.20" height="7.40" fill="#f79a76" /><rect x="1355.10" y="347.60" width="7.40" height="7.40" fill="#f79a76" /><rect x="1372.70" y="347.60" width="5.10" height="7.40" fill="#f79a76" /><rect x="1387.60" y="347.60" width="25.00" height="7.40" fill="#f79a76" /><rect x="1412.60" y="346.00" width="61.30" height="9.00" fill="#f79a76" /><rect x="1272.60" y="347.30" width="6.40" height="7.00" fill="#d9d9d9" /><rect x="1280.30" y="347.30" width="1.50" height="7.00" fill="#d9d9d9" /><rect x="1282.80" y="347.30" width="1.80" height="7.00" fill="#d9d9d9" /><rect x="1438.60" y="347.30" width="3.40" height="7.00" fill="#d9d9d9" /><rect x="1443.50" y="347.30" width="5.30" height="7.00" fill="#d9d9d9" /><rect x="1345.50" y="347.60" width="9.60" height="7.40" fill="#474b60" /><rect x="1362.50" y="347.60" width="10.20" height="7.40" fill="#474b60" /><rect x="1377.80" y="347.60" width="9.80" height="7.40" fill="#474b60" /><rect x="1198.50" y="349.50" width="6.50" height="4.50" fill="#9a9a9a" /><rect x="1505.00" y="350.50" width="6.50" height="3.50" fill="#9a9a9a" /><path d="M1295 343.500l2.500-1.500 2.500 1.500z" fill="#c8c8e0"/><path d="M1210 355V336.5" stroke="#70737e" stroke-width="1"/><path d="M1216.5 355V335.5" stroke="#70737e" stroke-width="1"/><path d="M1234 355V343" stroke="#70737e" stroke-width="1"/><path d="M1266.5 355V334" stroke="#70737e" stroke-width="1"/><path d="M1280.5 355V337.5" stroke="#70737e" stroke-width="1"/><path d="M1284.5 355V334.5" stroke="#70737e" stroke-width="1"/><path d="M1320.5 355V331.5" stroke="#70737e" stroke-width="1"/><path d="M1383.5 355V331.5" stroke="#70737e" stroke-width="1"/><path d="M1430 355V334" stroke="#70737e" stroke-width="1"/><path d="M1433 355V335.5" stroke="#70737e" stroke-width="1"/><path d="M1442 355V331.5" stroke="#70737e" stroke-width="1"/><path d="M1443.5 355V333" stroke="#70737e" stroke-width="1"/><path d="M1477 355V340.5" stroke="#70737e" stroke-width="1"/><path d="M1480.5 355V335.5" stroke="#70737e" stroke-width="1"/><path d="M1501.5 355V331.5" stroke="#70737e" stroke-width="1"/><rect x="1148.00" y="354.30" width="416.00" height="1.50" fill="#5a5d68" /><path d="M1206.6 356V449M1221.7 356V449" stroke="#c9805f" stroke-width=".6"/><path d="M1227.6 356V449M1234.8 356V449" stroke="#c9805f" stroke-width=".6"/><path d="M1241.1 356V449M1255.8 356V449" stroke="#c9805f" stroke-width=".6"/><path d="M1261.7 356V449M1269.1 356V449" stroke="#c9805f" stroke-width=".6"/><path d="M1288.3 356V449M1303.4 356V449" stroke="#c9805f" stroke-width=".6"/><path d="M1309.5 356V449M1316.5 356V449" stroke="#c9805f" stroke-width=".6"/><path d="M1322.5 356V449M1337.7 356V449" stroke="#c9805f" stroke-width=".6"/><path d="M1343.3 356V449M1350.9 356V449" stroke="#c9805f" stroke-width=".6"/><path d="M1360.7 356V449M1368.3 356V449" stroke="#c9805f" stroke-width=".6"/><path d="M1373.7 356V449M1388.9 356V449" stroke="#c9805f" stroke-width=".6"/><path d="M1394.7 356V449M1402.3 356V449" stroke="#c9805f" stroke-width=".6"/><path d="M1408.1 356V449M1423.4 356V449" stroke="#c9805f" stroke-width=".6"/><path d="M1442.3 356V449M1449.8 356V449" stroke="#c9805f" stroke-width=".6"/><path d="M1455.7 356V449M1470.8 356V449" stroke="#c9805f" stroke-width=".6"/><path d="M1476.7 356V449M1483.9 356V449" stroke="#c9805f" stroke-width=".6"/><path d="M1490.0 356V449M1505.0 356V449" stroke="#c9805f" stroke-width=".6"/><rect x="1206.90" y="370.50" width="14.50" height="19.30" fill="#3b3f55" /><rect x="1207.70" y="371.30" width="12.90" height="3.00" fill="#adadb1" /><rect x="1208.10" y="376.20" width="4.75" height="9.40" fill="#9e9ea2" /><rect x="1215.25" y="376.20" width="4.95" height="9.40" fill="#a8a8ac" /><rect x="1206.60" y="394.60" width="15.10" height="1.00" fill="#6a5a5a" /><rect x="1206.90" y="398.60" width="14.50" height="19.40" fill="#3b3f55" /><rect x="1207.70" y="399.40" width="12.90" height="3.00" fill="#adadb1" /><rect x="1208.10" y="404.30" width="4.75" height="9.50" fill="#9e9ea2" /><rect x="1215.25" y="404.30" width="4.95" height="9.50" fill="#a8a8ac" /><rect x="1227.90" y="370.50" width="6.60" height="19.30" fill="#3b3f55" /><rect x="1228.70" y="371.30" width="5.00" height="3.00" fill="#adadb1" /><rect x="1229.10" y="376.20" width="4.20" height="9.40" fill="#9e9ea2" /><rect x="1227.60" y="394.60" width="7.20" height="1.00" fill="#6a5a5a" /><rect x="1227.90" y="398.60" width="6.60" height="19.40" fill="#3b3f55" /><rect x="1228.70" y="399.40" width="5.00" height="3.00" fill="#adadb1" /><rect x="1229.10" y="404.30" width="4.20" height="9.50" fill="#9e9ea2" /><rect x="1241.40" y="370.50" width="14.10" height="19.30" fill="#3b3f55" /><rect x="1242.20" y="371.30" width="12.50" height="3.00" fill="#adadb1" /><rect x="1242.60" y="376.20" width="4.55" height="9.40" fill="#9e9ea2" /><rect x="1249.55" y="376.20" width="4.75" height="9.40" fill="#a8a8ac" /><rect x="1241.10" y="394.60" width="14.70" height="1.00" fill="#6a5a5a" /><rect x="1241.40" y="398.60" width="14.10" height="19.40" fill="#3b3f55" /><rect x="1242.20" y="399.40" width="12.50" height="3.00" fill="#adadb1" /><rect x="1242.60" y="404.30" width="4.55" height="9.50" fill="#9e9ea2" /><rect x="1249.55" y="404.30" width="4.75" height="9.50" fill="#a8a8ac" /><rect x="1262.00" y="370.50" width="6.80" height="19.30" fill="#3b3f55" /><rect x="1262.80" y="371.30" width="5.20" height="3.00" fill="#adadb1" /><rect x="1263.20" y="376.20" width="4.40" height="9.40" fill="#9e9ea2" /><rect x="1261.70" y="394.60" width="7.40" height="1.00" fill="#6a5a5a" /><rect x="1262.00" y="398.60" width="6.80" height="19.40" fill="#3b3f55" /><rect x="1262.80" y="399.40" width="5.20" height="3.00" fill="#adadb1" /><rect x="1263.20" y="404.30" width="4.40" height="9.50" fill="#9e9ea2" /><rect x="1288.60" y="370.50" width="14.50" height="19.30" fill="#3b3f55" /><rect x="1289.40" y="371.30" width="12.90" height="3.00" fill="#adadb1" /><rect x="1289.80" y="376.20" width="4.75" height="9.40" fill="#9e9ea2" /><rect x="1296.95" y="376.20" width="4.95" height="9.40" fill="#a8a8ac" /><rect x="1288.30" y="394.60" width="15.10" height="1.00" fill="#6a5a5a" /><rect x="1288.60" y="398.60" width="14.50" height="19.40" fill="#3b3f55" /><rect x="1289.40" y="399.40" width="12.90" height="3.00" fill="#adadb1" /><rect x="1289.80" y="404.30" width="4.75" height="9.50" fill="#9e9ea2" /><rect x="1296.95" y="404.30" width="4.95" height="9.50" fill="#a8a8ac" /><rect x="1309.80" y="356.00" width="6.40" height="14.50" fill="#474b60" /><rect x="1309.80" y="370.50" width="6.40" height="19.30" fill="#3b3f55" /><rect x="1310.60" y="371.30" width="4.80" height="3.00" fill="#adadb1" /><rect x="1311.00" y="376.20" width="4.00" height="9.40" fill="#9e9ea2" /><rect x="1309.50" y="394.60" width="7.00" height="1.00" fill="#6a5a5a" /><rect x="1309.80" y="398.60" width="6.40" height="19.40" fill="#3b3f55" /><rect x="1310.60" y="399.40" width="4.80" height="3.00" fill="#adadb1" /><rect x="1311.00" y="404.30" width="4.00" height="9.50" fill="#9e9ea2" /><rect x="1322.80" y="370.50" width="14.60" height="19.30" fill="#3b3f55" /><rect x="1323.60" y="371.30" width="13.00" height="3.00" fill="#adadb1" /><rect x="1324.00" y="376.20" width="4.80" height="9.40" fill="#9e9ea2" /><rect x="1331.20" y="376.20" width="5.00" height="9.40" fill="#a8a8ac" /><rect x="1322.50" y="394.60" width="15.20" height="1.00" fill="#6a5a5a" /><rect x="1322.80" y="398.60" width="14.60" height="19.40" fill="#3b3f55" /><rect x="1323.60" y="399.40" width="13.00" height="3.00" fill="#adadb1" /><rect x="1324.00" y="404.30" width="4.80" height="9.50" fill="#9e9ea2" /><rect x="1331.20" y="404.30" width="5.00" height="9.50" fill="#a8a8ac" /><rect x="1343.60" y="370.50" width="7.00" height="19.30" fill="#3b3f55" /><rect x="1344.40" y="371.30" width="5.40" height="3.00" fill="#adadb1" /><rect x="1344.80" y="376.20" width="4.60" height="9.40" fill="#9e9ea2" /><rect x="1343.30" y="394.60" width="7.60" height="1.00" fill="#6a5a5a" /><rect x="1343.60" y="398.60" width="7.00" height="19.40" fill="#3b3f55" /><rect x="1344.40" y="399.40" width="5.40" height="3.00" fill="#adadb1" /><rect x="1344.80" y="404.30" width="4.60" height="9.50" fill="#9e9ea2" /><rect x="1361.00" y="356.00" width="7.00" height="14.50" fill="#474b60" /><rect x="1361.00" y="370.50" width="7.00" height="19.30" fill="#3b3f55" /><rect x="1361.80" y="371.30" width="5.40" height="3.00" fill="#adadb1" /><rect x="1362.20" y="376.20" width="4.60" height="9.40" fill="#9e9ea2" /><rect x="1360.70" y="394.60" width="7.60" height="1.00" fill="#6a5a5a" /><rect x="1361.00" y="398.60" width="7.00" height="19.40" fill="#3b3f55" /><rect x="1361.80" y="399.40" width="5.40" height="3.00" fill="#adadb1" /><rect x="1362.20" y="404.30" width="4.60" height="9.50" fill="#9e9ea2" /><rect x="1374.00" y="370.50" width="14.60" height="19.30" fill="#3b3f55" /><rect x="1374.80" y="371.30" width="13.00" height="3.00" fill="#adadb1" /><rect x="1375.20" y="376.20" width="4.80" height="9.40" fill="#9e9ea2" /><rect x="1382.40" y="376.20" width="5.00" height="9.40" fill="#a8a8ac" /><rect x="1373.70" y="394.60" width="15.20" height="1.00" fill="#6a5a5a" /><rect x="1374.00" y="398.60" width="14.60" height="19.40" fill="#3b3f55" /><rect x="1374.80" y="399.40" width="13.00" height="3.00" fill="#adadb1" /><rect x="1375.20" y="404.30" width="4.80" height="9.50" fill="#9e9ea2" /><rect x="1382.40" y="404.30" width="5.00" height="9.50" fill="#a8a8ac" /><rect x="1395.00" y="370.50" width="7.00" height="19.30" fill="#3b3f55" /><rect x="1395.80" y="371.30" width="5.40" height="3.00" fill="#adadb1" /><rect x="1396.20" y="376.20" width="4.60" height="9.40" fill="#9e9ea2" /><rect x="1394.70" y="394.60" width="7.60" height="1.00" fill="#6a5a5a" /><rect x="1395.00" y="398.60" width="7.00" height="19.40" fill="#3b3f55" /><rect x="1395.80" y="399.40" width="5.40" height="3.00" fill="#adadb1" /><rect x="1396.20" y="404.30" width="4.60" height="9.50" fill="#9e9ea2" /><rect x="1408.40" y="356.00" width="14.70" height="14.50" fill="#474b60" /><rect x="1408.40" y="370.50" width="14.70" height="19.30" fill="#3b3f55" /><rect x="1409.20" y="371.30" width="13.10" height="3.00" fill="#adadb1" /><rect x="1409.60" y="376.20" width="4.85" height="9.40" fill="#9e9ea2" /><rect x="1416.85" y="376.20" width="5.05" height="9.40" fill="#a8a8ac" /><rect x="1408.10" y="394.60" width="15.30" height="1.00" fill="#6a5a5a" /><rect x="1408.40" y="398.60" width="14.70" height="19.40" fill="#3b3f55" /><rect x="1409.20" y="399.40" width="13.10" height="3.00" fill="#adadb1" /><rect x="1409.60" y="404.30" width="4.85" height="9.50" fill="#9e9ea2" /><rect x="1416.85" y="404.30" width="5.05" height="9.50" fill="#a8a8ac" /><rect x="1442.60" y="370.50" width="6.90" height="19.30" fill="#3b3f55" /><rect x="1443.40" y="371.30" width="5.30" height="3.00" fill="#adadb1" /><rect x="1443.80" y="376.20" width="4.50" height="9.40" fill="#9e9ea2" /><rect x="1442.30" y="394.60" width="7.50" height="1.00" fill="#6a5a5a" /><rect x="1442.60" y="398.60" width="6.90" height="19.40" fill="#3b3f55" /><rect x="1443.40" y="399.40" width="5.30" height="3.00" fill="#adadb1" /><rect x="1443.80" y="404.30" width="4.50" height="9.50" fill="#9e9ea2" /><rect x="1456.00" y="356.00" width="14.50" height="14.50" fill="#474b60" /><rect x="1456.00" y="370.50" width="14.50" height="19.30" fill="#3b3f55" /><rect x="1456.80" y="371.30" width="12.90" height="3.00" fill="#adadb1" /><rect x="1457.20" y="376.20" width="4.75" height="9.40" fill="#9e9ea2" /><rect x="1464.35" y="376.20" width="4.95" height="9.40" fill="#a8a8ac" /><rect x="1455.70" y="394.60" width="15.10" height="1.00" fill="#6a5a5a" /><rect x="1456.00" y="398.60" width="14.50" height="19.40" fill="#3b3f55" /><rect x="1456.80" y="399.40" width="12.90" height="3.00" fill="#adadb1" /><rect x="1457.20" y="404.30" width="4.75" height="9.50" fill="#9e9ea2" /><rect x="1464.35" y="404.30" width="4.95" height="9.50" fill="#a8a8ac" /><rect x="1477.00" y="370.50" width="6.60" height="19.30" fill="#3b3f55" /><rect x="1477.80" y="371.30" width="5.00" height="3.00" fill="#adadb1" /><rect x="1478.20" y="376.20" width="4.20" height="9.40" fill="#9e9ea2" /><rect x="1476.70" y="394.60" width="7.20" height="1.00" fill="#6a5a5a" /><rect x="1477.00" y="398.60" width="6.60" height="19.40" fill="#3b3f55" /><rect x="1477.80" y="399.40" width="5.00" height="3.00" fill="#adadb1" /><rect x="1478.20" y="404.30" width="4.20" height="9.50" fill="#9e9ea2" /><rect x="1490.30" y="356.00" width="14.40" height="14.50" fill="#474b60" /><rect x="1490.30" y="370.50" width="14.40" height="19.30" fill="#3b3f55" /><rect x="1491.10" y="371.30" width="12.80" height="3.00" fill="#adadb1" /><rect x="1491.50" y="376.20" width="4.70" height="9.40" fill="#9e9ea2" /><rect x="1498.60" y="376.20" width="4.90" height="9.40" fill="#a8a8ac" /><rect x="1490.00" y="394.60" width="15.00" height="1.00" fill="#6a5a5a" /><rect x="1490.30" y="398.60" width="14.40" height="19.40" fill="#3b3f55" /><rect x="1491.10" y="399.40" width="12.80" height="3.00" fill="#adadb1" /><rect x="1491.50" y="404.30" width="4.70" height="9.50" fill="#9e9ea2" /><rect x="1498.60" y="404.30" width="4.90" height="9.50" fill="#a8a8ac" /><rect x="1206.90" y="423.40" width="14.50" height="3.00" fill="#474b60" /><rect x="1206.90" y="426.50" width="14.50" height="21.50" fill="#3b3f55" /><rect x="1207.70" y="427.30" width="12.90" height="3.00" fill="#adadb1" /><rect x="1208.10" y="432.20" width="4.75" height="11.60" fill="#9e9ea2" /><rect x="1215.25" y="432.20" width="4.95" height="11.60" fill="#a8a8ac" /><rect x="1227.60" y="423.00" width="7.20" height="0.80" fill="#6a5a5a" /><rect x="1227.90" y="427.50" width="6.60" height="20.50" fill="#3b3f55" /><rect x="1228.70" y="428.30" width="5.00" height="3.00" fill="#adadb1" /><rect x="1229.10" y="433.20" width="4.20" height="10.60" fill="#9e9ea2" /><rect x="1241.40" y="423.40" width="14.10" height="3.00" fill="#474b60" /><rect x="1241.40" y="426.50" width="14.10" height="21.50" fill="#3b3f55" /><rect x="1242.20" y="427.30" width="12.50" height="3.00" fill="#adadb1" /><rect x="1242.60" y="432.20" width="4.55" height="11.60" fill="#9e9ea2" /><rect x="1249.55" y="432.20" width="4.75" height="11.60" fill="#a8a8ac" /><rect x="1261.70" y="423.00" width="7.40" height="0.80" fill="#6a5a5a" /><rect x="1262.00" y="427.50" width="6.80" height="20.50" fill="#3b3f55" /><rect x="1262.80" y="428.30" width="5.20" height="3.00" fill="#adadb1" /><rect x="1263.20" y="433.20" width="4.40" height="10.60" fill="#9e9ea2" /><rect x="1442.30" y="423.00" width="7.50" height="0.80" fill="#6a5a5a" /><rect x="1442.60" y="427.50" width="6.90" height="20.50" fill="#3b3f55" /><rect x="1443.40" y="428.30" width="5.30" height="3.00" fill="#adadb1" /><rect x="1443.80" y="433.20" width="4.50" height="10.60" fill="#9e9ea2" /><rect x="1456.00" y="423.40" width="14.50" height="3.00" fill="#474b60" /><rect x="1456.00" y="426.50" width="14.50" height="21.50" fill="#3b3f55" /><rect x="1456.80" y="427.30" width="12.90" height="3.00" fill="#adadb1" /><rect x="1457.20" y="432.20" width="4.75" height="11.60" fill="#9e9ea2" /><rect x="1464.35" y="432.20" width="4.95" height="11.60" fill="#a8a8ac" /><rect x="1476.70" y="423.00" width="7.20" height="0.80" fill="#6a5a5a" /><rect x="1477.00" y="427.50" width="6.60" height="20.50" fill="#3b3f55" /><rect x="1477.80" y="428.30" width="5.00" height="3.00" fill="#adadb1" /><rect x="1478.20" y="433.20" width="4.20" height="10.60" fill="#9e9ea2" /><rect x="1490.30" y="423.40" width="14.40" height="3.00" fill="#474b60" /><rect x="1490.30" y="426.50" width="14.40" height="21.50" fill="#3b3f55" /><rect x="1491.10" y="427.30" width="12.80" height="3.00" fill="#adadb1" /><rect x="1491.50" y="432.20" width="4.70" height="11.60" fill="#9e9ea2" /><rect x="1498.60" y="432.20" width="4.90" height="11.60" fill="#a8a8ac" /><rect x="1148.00" y="389.80" width="416.00" height="4.40" fill="#ffffff" /><rect x="1148.00" y="418.40" width="416.00" height="4.40" fill="#ffffff" /><rect x="1274.70" y="355.00" width="1.00" height="94.00" fill="#5c5f6a" /><rect x="1435.80" y="355.00" width="1.00" height="94.00" fill="#5c5f6a" /><rect x="1277.00" y="417.60" width="156.60" height="38.40" fill="#ffffff" /><rect x="1276.50" y="417.00" width="157.60" height="0.80" fill="#8a8a8a" /><rect x="1281.40" y="426.50" width="45.30" height="28.00" fill="#8f8f93" /><rect x="1281.40" y="426.50" width="45.30" height="5.50" fill="#a2a2a6" /><rect x="1283.67" y="438.00" width="13.59" height="15.00" fill="#7c7c80" /><rect x="1306.32" y="438.00" width="15.85" height="15.00" fill="#a9a9ad" /><rect x="1281.40" y="432.00" width="45.30" height="1.30" fill="#2c2f3c" /><rect x="1281.40" y="436.30" width="45.30" height="1.00" fill="#2c2f3c" /><rect x="1281.40" y="426.50" width="1.40" height="28.00" fill="#2c2f3c" /><rect x="1290.46" y="426.50" width="1.40" height="28.00" fill="#2c2f3c" /><rect x="1300.88" y="426.50" width="1.40" height="28.00" fill="#2c2f3c" /><rect x="1304.05" y="426.50" width="1.40" height="28.00" fill="#2c2f3c" /><rect x="1314.02" y="426.50" width="1.40" height="28.00" fill="#2c2f3c" /><rect x="1323.53" y="426.50" width="1.40" height="28.00" fill="#2c2f3c" /><rect x="1281.40" y="426.00" width="45.30" height="0.90" fill="#2c2f3c" /><rect x="1281.40" y="453.30" width="45.30" height="1.20" fill="#e8e8e8" /><rect x="1334.00" y="426.50" width="42.50" height="28.00" fill="#8f8f93" /><rect x="1334.00" y="426.50" width="42.50" height="5.50" fill="#a2a2a6" /><rect x="1336.12" y="438.00" width="12.75" height="15.00" fill="#7c7c80" /><rect x="1357.38" y="438.00" width="14.87" height="15.00" fill="#a9a9ad" /><rect x="1334.00" y="432.00" width="42.50" height="1.30" fill="#2c2f3c" /><rect x="1334.00" y="436.30" width="42.50" height="1.00" fill="#2c2f3c" /><rect x="1334.00" y="426.50" width="1.40" height="28.00" fill="#2c2f3c" /><rect x="1342.50" y="426.50" width="1.40" height="28.00" fill="#2c2f3c" /><rect x="1352.28" y="426.50" width="1.40" height="28.00" fill="#2c2f3c" /><rect x="1355.25" y="426.50" width="1.40" height="28.00" fill="#2c2f3c" /><rect x="1364.60" y="426.50" width="1.40" height="28.00" fill="#2c2f3c" /><rect x="1373.53" y="426.50" width="1.40" height="28.00" fill="#2c2f3c" /><rect x="1334.00" y="426.00" width="42.50" height="0.90" fill="#2c2f3c" /><rect x="1334.00" y="453.30" width="42.50" height="1.20" fill="#e8e8e8" /><rect x="1383.00" y="426.50" width="46.00" height="28.00" fill="#8f8f93" /><rect x="1383.00" y="426.50" width="46.00" height="5.50" fill="#a2a2a6" /><rect x="1385.30" y="438.00" width="13.80" height="15.00" fill="#7c7c80" /><rect x="1408.30" y="438.00" width="16.10" height="15.00" fill="#a9a9ad" /><rect x="1383.00" y="432.00" width="46.00" height="1.30" fill="#2c2f3c" /><rect x="1383.00" y="436.30" width="46.00" height="1.00" fill="#2c2f3c" /><rect x="1383.00" y="426.50" width="1.40" height="28.00" fill="#2c2f3c" /><rect x="1392.20" y="426.50" width="1.40" height="28.00" fill="#2c2f3c" /><rect x="1402.78" y="426.50" width="1.40" height="28.00" fill="#2c2f3c" /><rect x="1406.00" y="426.50" width="1.40" height="28.00" fill="#2c2f3c" /><rect x="1416.12" y="426.50" width="1.40" height="28.00" fill="#2c2f3c" /><rect x="1425.78" y="426.50" width="1.40" height="28.00" fill="#2c2f3c" /><rect x="1383.00" y="426.00" width="46.00" height="0.90" fill="#2c2f3c" /><rect x="1383.00" y="453.30" width="46.00" height="1.20" fill="#e8e8e8" /><rect x="1343.00" y="438.00" width="1.20" height="16.00" fill="#2c2f3c" /><rect x="1349.00" y="438.00" width="1.20" height="16.00" fill="#2c2f3c" /><rect x="1356.00" y="438.00" width="1.20" height="16.00" fill="#2c2f3c" /><rect x="1362.00" y="438.00" width="1.20" height="16.00" fill="#2c2f3c" /><rect x="1368.00" y="438.00" width="1.20" height="16.00" fill="#2c2f3c" /><rect x="1299.00" y="450.50" width="2.20" height="4.00" fill="#f4f4f4" /><rect x="1316.00" y="450.50" width="2.20" height="4.00" fill="#f4f4f4" /><rect x="1344.50" y="450.50" width="2.20" height="4.00" fill="#f4f4f4" /><rect x="1352.00" y="450.50" width="2.20" height="4.00" fill="#f4f4f4" /><rect x="1390.00" y="450.50" width="2.20" height="4.00" fill="#f4f4f4" /><rect x="1413.00" y="450.50" width="2.20" height="4.00" fill="#f4f4f4" /><path d="M1354 399V409.500" stroke="#1a1ae6" stroke-width="1.400"/><path d="M1354 409.500H1368" stroke="#e61a1a" stroke-width="1.200"/><path d="M1036.200 682V660" stroke="#1414ff" stroke-width="1.800"/><path d="M1036.200 655l-2.600 7h5.200z" fill="#1414ff"/><path d="M1036.200 682H1057" stroke="#ff1414" stroke-width="1.800"/><path d="M1063 682l-7-2.600v5.200z" fill="#ff1414"/><circle cx="1036.200" cy="682" r="4.200" fill="#b8b8b8"/><circle cx="1035.200" cy="681" r="1.600" fill="#dadada"/><text x="1036.500" y="648.500" font-size="7.500" font-weight="bold" fill="#1a1aff" font-family="Liberation Sans">Z</text><text x="1069" y="682.300" font-size="7.500" font-weight="bold" fill="#ff1a1a" font-family="Liberation Sans">X</text></svg>
<div class="abs" style="left:986px;top:37px;width:32px;height:32px;background:#555555">
<svg width="32" height="32" viewBox="0 0 32 32"><g fill="none" stroke="#e0e0e0" stroke-width="1.600"><path d="M4.500 10.500V4.500h6M21.500 4.500h6v6M27.500 21.500v6h-6M10.500 27.500h-6v-6"/></g><polygon points="16.00,9.50 21.63,12.75 21.63,19.25 16.00,22.50 10.37,19.25 10.37,12.75" fill="#e0e0e0"/></svg>
</div>
<div class="abs" style="left:1687.500px;top:79.400px;width:65px;height:64.800px;background:#fff"></div>
<svg class="abs gs" style="left:1687px;top:79px" width="66" height="66"><text id="front" x="33.100" y="41.700" font-size="24.500" fill="#4a4a4a" text-anchor="middle" font-family="Liberation Sans" textLength="38.700" lengthAdjust="spacingAndGlyphs">Спереди</text></svg>
<div id="rt">
<div class="rsep" style="top:91.5px;height:1.5px"></div>
<div class="rsep" style="top:316.5px;height:1.5px"></div>
<div class="rsep" style="top:365.5px;height:1.5px"></div>
<div class="rsep" style="top:546.5px;height:1.5px"></div>
<div class="rsep" style="top:639.5px;height:1.5px"></div>
<div class="abs" style="left:2px;top:556px;width:32px;height:32px;background:#8b8b8b"></div>
<div class="abs" style="left:2px;top:600px;width:32px;height:32px;background:#8b8b8b"></div>
<svg class="abs gs" style="left:0;top:0" width="36" height="775" viewBox="0 0 36 775"><g fill="none" stroke="#e0e0e0" stroke-width="1.5" stroke-linejoin="round"><path d="M13.500 66.800H11.800a4.600 4.600 0 0 1-.7-9.200 5.800 5.800 0 0 1 11.300-1.300 4.800 4.800 0 0 1 2.300 9.500c-.5.200-1.300.200-2.300.200" transform="translate(0,-37) translate(-.900,-7.200) scale(1.080,1.120)"/><path d="M18.300 35V18.500M18.300 26.500l-4.600-3.600M18.300 28.700l4.400-3.500M18.300 24l2.800-2.300" stroke-width="1.400"/></g><g fill="none" stroke="#e0e0e0" stroke-width="1.4" stroke-linejoin="round"><path d="M10 73H5.600V55.800H28.400V63.500M10 73h3.500v2.800h-3.300" stroke-width="1.300"/><path d="M16 69.500V65.300h4M27 65.300h4v4.200M31 76v4.200h-4M20 80.200H16V76" stroke-width="1.400"/><polygon points="23.50,67.90 27.66,70.30 27.66,75.10 23.50,77.50 19.34,75.10 19.34,70.30" fill="#e0e0e0" stroke="none"/></g><g fill="none" stroke="#e0e0e0" stroke-width="1.5" stroke-linejoin="round"><rect x="5.300" y="112.600" width="25.500" height="7.800"/><path d="M5 123.200h26" stroke-width="1.800"/><path d="M9 120v-4M12.200 120v-2.200M15.400 120v-4M18.600 120v-2.200M21.800 120v-4M25 120v-2.200M28 120v-4" stroke-width="1.300"/></g><path d="M13.300 160l9.700-12.800v17.500l-9.700 10.800z" fill="#e0e0e0"/><g fill="none" stroke="#e0e0e0" stroke-width="1.4" stroke-linejoin="round"><path d="M13 157.400L5.300 164.600H22.500M23.300 157.400h7.400l-7.400 7.200"/></g><g fill="none" stroke="#e0e0e0" stroke-width="1.2" stroke-linejoin="round"><path d="M6 200.500h16.500v15H6zM6 200.500l7.500-6.300h16.500v15l-7.500 6.300M22.500 200.500l7.500-6.300M6 215.500l7.500-6.300h16.500M13.500 194.200v15" stroke-width="1.200"/><path d="M14.800 215.400v-15.200l5.200-5.500v15.200z" fill="#e0e0e0" stroke="none"/></g><g fill="none" stroke="#e0e0e0" stroke-width="1.5" stroke-linejoin="round"><path d="M8.500 238.500H30.500V258H5V242z" stroke-width="1.600"/><path d="M5.500 260h25.500" stroke-width="1.400"/><path d="M5 248.200h25.500M17.700 238.500V258" stroke-width="1.200" stroke-dasharray="3.500 1 1 1"/><path d="M23.500 258v-4h7" stroke-width="1.300"/></g><g fill="none" stroke="#e0e0e0" stroke-width="2" stroke-linejoin="round"><circle cx="18" cy="293" r="7.300" stroke-width="2"/><circle cx="18" cy="293" r="3.800" fill="#e0e0e0" stroke="none"/><path d="M18 282.500v3.200M18 300.300v3.200M7.500 293h3.200M25.300 293h3.200" stroke-width="2"/></g><g fill="none" stroke="#e0e0e0" stroke-width="1.3" stroke-linejoin="round"><path d="M4 347.500L32 330M4.500 356.500L32 341M7 341l17 14.500M14 333.500l17.500 15" stroke-width="1.300"/><text x="4" y="338.500" font-size="6.500" font-family="Liberation Sans" font-weight="bold" fill="#e0e0e0" stroke="none">1</text><text x="13" y="332.500" font-size="6.500" font-family="Liberation Sans" font-weight="bold" fill="#e0e0e0" stroke="none">2</text></g><rect x="6.500" y="379.5" width="23" height="23" fill="none" stroke="#e0e0e0" stroke-width="1.300" stroke-dasharray="2 1.500"/><rect x="6.500" y="423.5" width="23" height="23" fill="none" stroke="#e0e0e0" stroke-width="1.300" stroke-dasharray="2 1.500"/><rect x="6.500" y="467.5" width="23" height="23" fill="none" stroke="#e0e0e0" stroke-width="1.300" stroke-dasharray="2 1.500"/><rect x="6.500" y="511.5" width="23" height="23" fill="none" stroke="#e0e0e0" stroke-width="1.300" stroke-dasharray="2 1.500"/><g fill="none" stroke="#e0e0e0" stroke-width="1.3" stroke-linejoin="round"><path d="M18 384.5l5.800 3.200v6.800L18 397.7l-5.800-3.200v-6.800zM12.200 387.7L18 391l5.800-3.300M18 391v6.700" stroke-width="1.300"/></g><path d="M10.300 435c1.900-3.700 4.500-5.400 7.700-5.400s5.800 1.700 7.700 5.400c-1.900 3.700-4.500 5.400-7.700 5.400s-5.800-1.700-7.700-5.400z" fill="#e0e0e0"/><circle cx="18" cy="435" r="3.100" fill="#555"/><circle cx="18" cy="435" r="1.500" fill="#e0e0e0"/><path d="M9.800 479c1.900-3.900 4.700-5.700 8.200-5.700s6.300 1.800 8.200 5.700c-1.900 3.900-4.700 5.700-8.200 5.700s-6.300-1.800-8.200-5.700z" fill="#e0e0e0"/><circle cx="18" cy="479" r="3.100" fill="#555"/><circle cx="18" cy="479" r="1.500" fill="#e0e0e0"/><path d="M12.500 471.5L24.500 486" stroke="#555" stroke-width="3.400"/><path d="M11.300 472.2L23.500 487" stroke="#e0e0e0" stroke-width="1.700"/><rect x="16" y="521.5" width="16" height="15.500" fill="#e0e0e0"/><path d="M19.500 524.7l9 9M28.500 524.7l-9 9" stroke="#555" stroke-width="1.500"/><path d="M7.300 562.8L18 560.3L29 562.8L27.500 577.8L18 584.3L9 577.8z" fill="#f0f0f0"/><path d="M9.300 563.0999999999999L18 561.4L27 563.0999999999999L18 565.3z" fill="#8a8a8a"/><path d="M18 566.3L28.300 563.5L27 577.5999999999999L18 583.5999999999999z" fill="#cfcfcf"/><g fill="none" stroke="#e0e0e0" stroke-width="2" stroke-linejoin="round"><ellipse cx="18" cy="616" rx="11.700" ry="6.200"/><ellipse cx="18" cy="616" rx="6.200" ry="10.800"/><path d="M18 612.5v3.500l-3 3.500M18 616l3 3.500" stroke-width="1.200"/></g></svg>
<svg class="abs" style="left:2px;top:767px" width="6" height="6"><path d="M0 0v5h5z" fill="#eee"/></svg>
</div>
</div></body></html>
